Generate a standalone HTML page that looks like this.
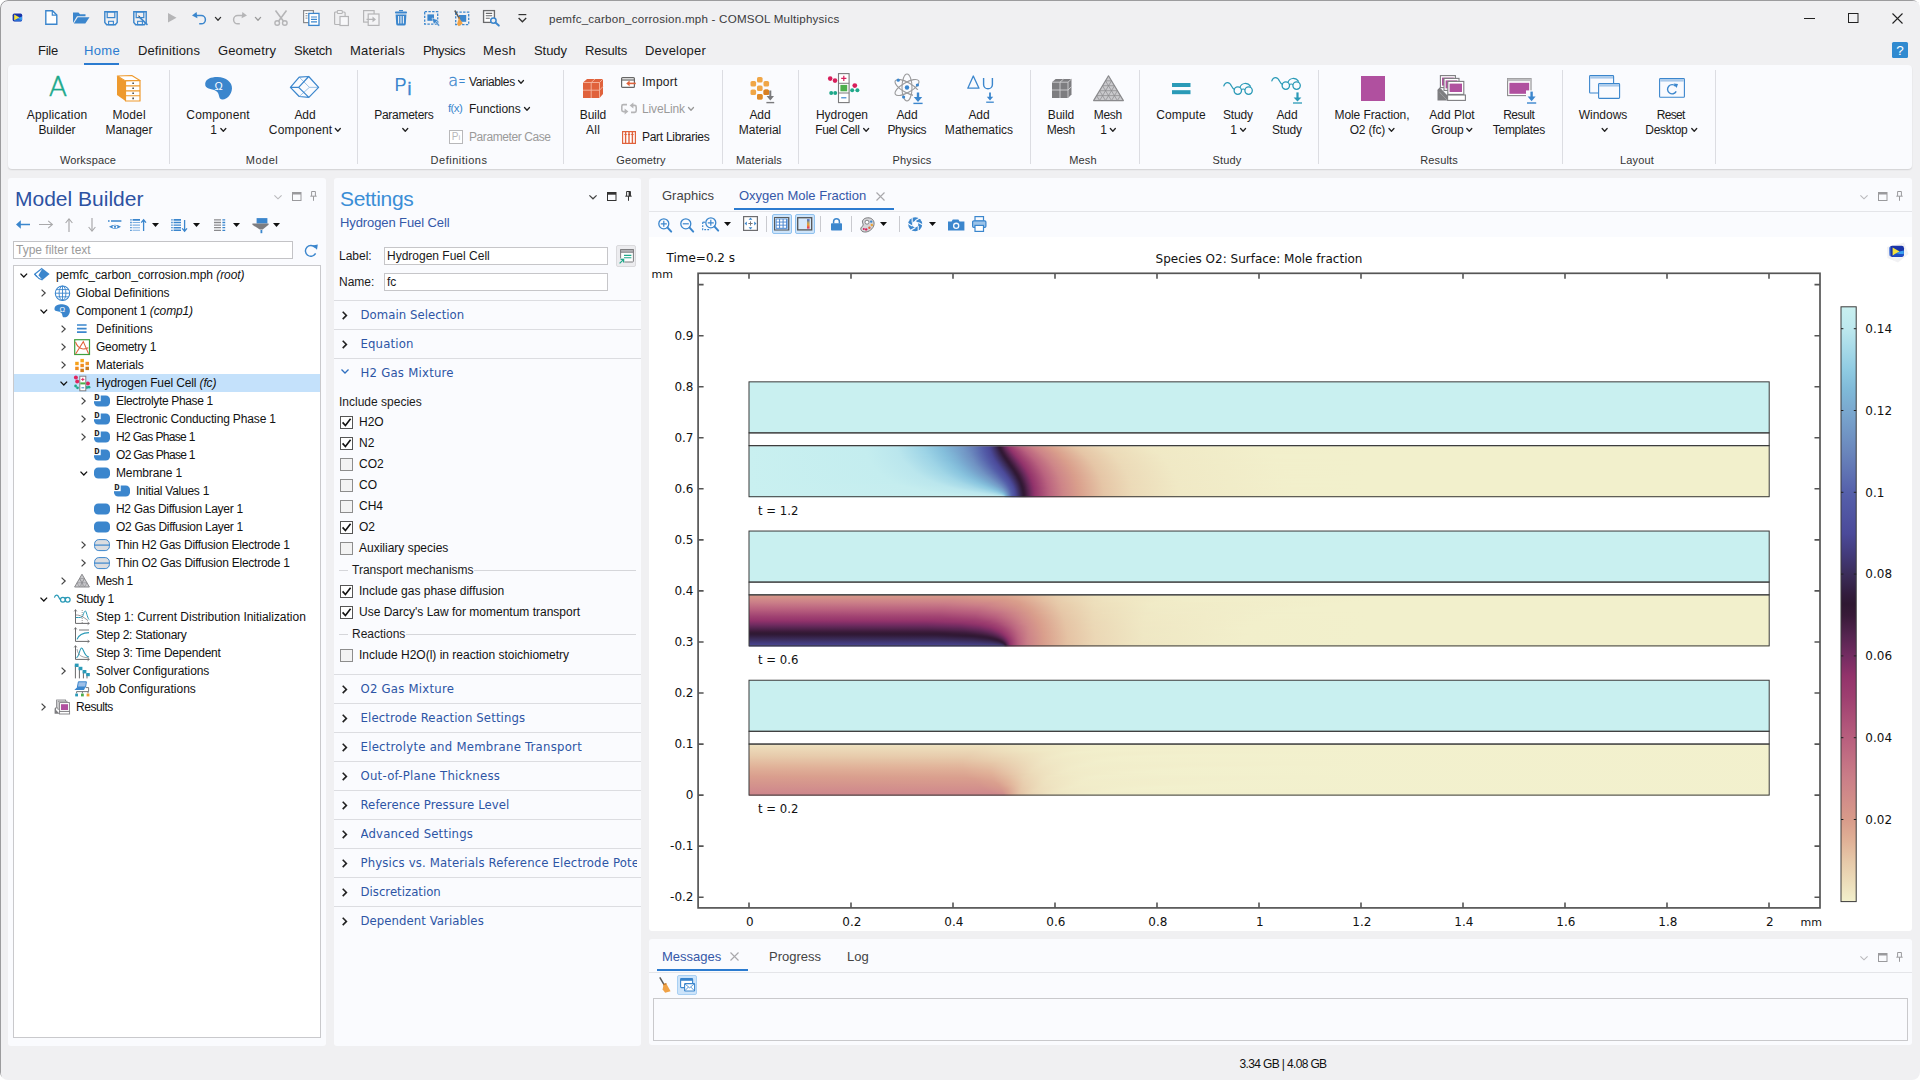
<!DOCTYPE html>
<html lang="en">
<head>
<meta charset="utf-8">
<title>pemfc_carbon_corrosion.mph - COMSOL Multiphysics</title>
<style>
*{box-sizing:border-box;margin:0;padding:0}
html,body{width:1920px;height:1080px;overflow:hidden}
body{background:#fff;font-family:"Liberation Sans",sans-serif;font-size:12px;color:#1a1a1a;position:relative}
.abs{position:absolute}
svg{display:block;overflow:visible}
#win{position:absolute;left:0;top:0;width:1920px;height:1080px;border-radius:8px;background:#f0f0f2;overflow:hidden}
#win:after{content:"";position:absolute;left:0;top:0;width:1920px;height:1080px;border:1px solid #9c9c9e;border-radius:8px;pointer-events:none}
/* title */
#title{position:absolute;left:549px;top:12px;font-size:11.6px;letter-spacing:.22px;line-height:14px;color:#3a3a3c;white-space:nowrap}
.qa{position:absolute;top:9px;width:18px;height:18px}
/* menu */
.menu{position:absolute;top:43px;font-size:13px;color:#1a1a1a;white-space:nowrap;line-height:16px}
.menu.act{color:#2b7bd0}
/* ribbon */
#ribbon{position:absolute;left:8px;top:65px;width:1904px;height:103.5px;background:#fafbfe;border-radius:4px;box-shadow:0 1px 1.5px rgba(0,0,0,.13)}
.rsep{position:absolute;top:70px;width:1px;height:94px;background:#dcdde2}
.rb{position:absolute;top:108px;text-align:center;font-size:12px;line-height:15px;white-space:nowrap;transform:translateX(-50%);color:#1a1a1a}
.ri{position:absolute;top:72px;width:32px;height:32px;transform:translateX(-50%)}
.rg{position:absolute;top:153px;font-size:11px;letter-spacing:.15px;color:#333;transform:translateX(-50%);white-space:nowrap;line-height:14px}
.rs{position:absolute;font-size:12px;white-space:nowrap;line-height:15px;color:#1a1a1a}
.rs.dis{color:#9a9a9a}
.rsi{position:absolute;width:16px;height:16px}
.chev{display:inline-block;width:6px;height:6px;vertical-align:1px;margin-left:3px}
/* panels */
.panel{position:absolute;background:#fafbfe;border-radius:3px}
.ptitle{position:absolute;font-size:21px;white-space:nowrap;line-height:26px}
.tab{position:absolute;font-size:13px;white-space:nowrap;line-height:16px;color:#333}
/* tree */
.tr{position:absolute;left:0;height:18px;line-height:18px;font-size:12px;white-space:nowrap;color:#111}
.tr i{font-style:italic}
.ti{position:absolute;width:16px;height:16px}
.tw{position:absolute;width:9px;height:9px}
/* settings */
.sec{position:absolute;left:0;width:307px;height:29px;border-top:1px solid #dcdde1;font-family:"DejaVu Sans Condensed","DejaVu Sans",sans-serif;font-size:13px;color:#2d55a5;line-height:28px;white-space:nowrap;overflow:hidden}
.sec span{position:absolute;left:26.5px;top:0;max-width:276px;overflow:hidden}
.cb{position:absolute;width:13px;height:13px;border:1px solid #8d8d8d;background:#f3f3f3}
.cb.on{background:#fff;border-color:#555}
.cl{position:absolute;font-size:12px;line-height:15px;white-space:nowrap;color:#111}
/* plot */
.pt{font-family:"DejaVu Sans",sans-serif;font-size:12px;fill:#111}
</style>
</head>
<body>
<div id="win">
<svg class="abs" style="left:11px;top:12px" width="13" height="11" viewBox="0 0 13 11"><ellipse cx="6.5" cy="5.5" rx="6.4" ry="5.4" fill="#f6f6f8"/><rect x="1.6" y="1.6" width="9.6" height="7.8" rx="1.6" fill="#1a34a8"/><path d="M3.2 2.6 L8.6 5.4 L3.2 8.6Z" fill="#f4e23c"/><path d="M8.6 5.4 L11 4.6 V8.2 L6 7Z" fill="#3aa0f0"/><path d="M3.2 8.6 L6 7 L11 8.2 L10.4 9.2 H3.6Z" fill="#2a6fd8"/></svg>
<svg class="abs" style="left:45px;top:10px" width="13" height="15" viewBox="0 0 13 15"><path d="M0.8 0.8 H7.5 L11.8 5 V14.2 H0.8Z" fill="#fff" stroke="#3b86cd" stroke-width="1.4"/><path d="M7.3 0.8 V5.2 H11.8" fill="none" stroke="#3b86cd" stroke-width="1.2"/></svg>
<svg class="abs" style="left:73px;top:12px" width="17" height="12" viewBox="0 0 17 12"><path d="M0 0.5 H5.5 L7 2.3 H12.5 V4.2 H4 L0 11Z" fill="#3b86cd"/><path d="M4.8 5.2 H16.5 L12.3 11.6 H0.8Z" fill="#3b86cd"/></svg>
<svg class="abs" style="left:104px;top:11px" width="14" height="15" viewBox="0 0 14 15"><path d="M0.8 0.8 H13.2 V11.5 L11.3 13.8 H2.7 L0.8 11.5Z" fill="none" stroke="#3b86cd" stroke-width="1.4"/><rect x="3.2" y="1" width="7.6" height="5.6" fill="none" stroke="#3b86cd" stroke-width="1.2"/><rect x="4.6" y="10.3" width="4.8" height="3.4" fill="none" stroke="#3b86cd" stroke-width="1.1"/></svg>
<svg class="abs" style="left:133px;top:11px" width="16" height="15" viewBox="0 0 16 15"><path d="M0.8 0.8 H13.2 V11.5 L11.3 13.8 H2.7 L0.8 11.5Z" fill="none" stroke="#3b86cd" stroke-width="1.4"/><rect x="3.2" y="1" width="7.6" height="5.6" fill="none" stroke="#3b86cd" stroke-width="1.2"/><rect x="4.6" y="10.3" width="4.8" height="3.4" fill="none" stroke="#3b86cd" stroke-width="1.1"/><path d="M6.5 5 L15 13.2 L14 14.4 L5.6 6.4Z" fill="#3b86cd"/><path d="M5.2 4.2 L7 5.2 L5.9 6.4Z" fill="#444"/></svg>
<svg class="abs" style="left:168px;top:13px" width="9" height="10" viewBox="0 0 9 10"><path d="M0 0 L8.5 4.7 L0 9.4Z" fill="#b5b5b7"/></svg>
<svg class="abs" style="left:192px;top:12px" width="15" height="13" viewBox="0 0 15 13"><path d="M4.6 0 L0 3.4 L5.4 6.2Z" fill="#3b86cd"/><path d="M3.5 3.6 H9.3 A4.1 4.1 0 0 1 9.3 11.8 H7.2" fill="none" stroke="#3b86cd" stroke-width="1.5"/></svg>
<svg class="abs" style="left:214.5px;top:16.8px" width="6" height="4" viewBox="0 0 6 4"><path d="M0.4 0.4 L3.0 3.2 L5.6 0.4" fill="none" stroke="#333" stroke-width="1.3" stroke-linecap="round" stroke-linejoin="round"/></svg>
<svg class="abs" style="left:232px;top:12px" width="15" height="13" viewBox="0 0 15 13"><path d="M10.4 0 L15 3.4 L9.6 6.2Z" fill="#b5b5b7"/><path d="M11.5 3.6 H5.7 A4.1 4.1 0 0 0 5.7 11.8 H7.8" fill="none" stroke="#b5b5b7" stroke-width="1.5"/></svg>
<svg class="abs" style="left:254.5px;top:16.8px" width="6" height="4" viewBox="0 0 6 4"><path d="M0.4 0.4 L3.0 3.2 L5.6 0.4" fill="none" stroke="#9a9a9a" stroke-width="1.3" stroke-linecap="round" stroke-linejoin="round"/></svg>
<svg class="abs" style="left:274px;top:10px" width="14" height="16" viewBox="0 0 14 16"><path d="M1.5 0.5 L9.3 11 M12.5 0.5 L4.7 11" stroke="#b5b5b7" stroke-width="1.6" fill="none"/><circle cx="3.2" cy="13" r="2.3" fill="none" stroke="#b5b5b7" stroke-width="1.4"/><circle cx="10.8" cy="13" r="2.3" fill="none" stroke="#b5b5b7" stroke-width="1.4"/></svg>
<svg class="abs" style="left:303px;top:10px" width="17" height="16" viewBox="0 0 17 16"><rect x="0.6" y="0.6" width="9.8" height="12" fill="#fff" stroke="#8a8a8c" stroke-width="1.2"/><path d="M2.5 3.5h2M2.5 5.8h2M2.5 8.1h2" stroke="#8a8a8c" stroke-width="1"/><rect x="5.8" y="3.4" width="10.2" height="12" fill="#fff" stroke="#3b86cd" stroke-width="1.3"/><path d="M8 7h6M8 9.4h6M8 11.8h6" stroke="#3b86cd" stroke-width="1.2"/></svg>
<svg class="abs" style="left:334px;top:10px" width="15" height="16" viewBox="0 0 15 16"><rect x="0.6" y="2" width="10.5" height="12.5" rx="1" fill="#f0f0f2" stroke="#b5b5b7" stroke-width="1.2"/><rect x="3.3" y="0.5" width="5" height="3" rx="0.8" fill="#f0f0f2" stroke="#b5b5b7" stroke-width="1.1"/><rect x="6" y="6.5" width="8.4" height="9" fill="#f8f8fa" stroke="#b5b5b7" stroke-width="1.2"/></svg>
<svg class="abs" style="left:363px;top:10px" width="17" height="16" viewBox="0 0 17 16"><rect x="0.6" y="0.6" width="10.5" height="11.5" fill="#f0f0f2" stroke="#b5b5b7" stroke-width="1.2"/><rect x="5.2" y="4" width="10.8" height="11.4" fill="#f4f4f6" stroke="#b5b5b7" stroke-width="1.2"/><path d="M3.5 8.8 H9.5 V6.6 L13 9.4 L9.5 12.2 V10 H3.5Z" fill="#b5b5b7"/></svg>
<svg class="abs" style="left:394.5px;top:10px" width="12" height="16" viewBox="0 0 12 16"><path d="M4 0.6 H8" stroke="#3b86cd" stroke-width="1.2"/><rect x="0" y="1.6" width="12" height="2" rx="0.8" fill="#3b86cd"/><path d="M0.6 4.4 H11.4 L10.8 14 Q10.7 15.6 9 15.6 H3 Q1.3 15.6 1.2 14Z" fill="#3b86cd"/><path d="M3.6 6 V13.6 M6 6 V13.6 M8.4 6 V13.6" stroke="#f0f0f2" stroke-width="1.1"/></svg>
<svg class="abs" style="left:423.5px;top:11px" width="16" height="15" viewBox="0 0 16 15"><rect x="0.7" y="0.7" width="13" height="12.4" fill="none" stroke="#3b86cd" stroke-width="1.3" stroke-dasharray="2.4 1.3"/><rect x="3.4" y="3.4" width="6.6" height="6.4" fill="#3b86cd"/><path d="M8 7 L14.5 9.3 L12.4 10.6 L15.8 14.2 L14.5 15.2 L11.3 11.6 L9.8 13.6Z" fill="#3b86cd" stroke="#f0f0f2" stroke-width="0.5"/></svg>
<svg class="abs" style="left:453.5px;top:9.5px" width="16" height="17" viewBox="0 0 16 17"><rect x="1.7" y="2.2" width="13" height="12.4" fill="none" stroke="#3b86cd" stroke-width="1.3" stroke-dasharray="2.4 1.3"/><rect x="5" y="5" width="7.2" height="6.8" fill="#3b86cd"/><path d="M0.8 0.5 L5.6 8.8" stroke="#5a5a5a" stroke-width="1.5"/><path d="M5 7.6 L8.8 13.6 L4.8 16.2 L3 14.2Z" fill="#f0a246"/><path d="M4.2 8 L6.3 7.2" stroke="#c47a2a" stroke-width="1"/></svg>
<svg class="abs" style="left:483px;top:10px" width="17" height="16" viewBox="0 0 17 16"><path d="M0.6 0.6 H11.4 V9 M8 12.4 H0.6 V0.6" fill="#fff" stroke="#6a6a6c" stroke-width="1.3"/><rect x="0.6" y="0.6" width="10.8" height="11.8" fill="#fff" stroke="#6a6a6c" stroke-width="1.3"/><path d="M2.8 3.4h6.4M2.8 5.8h6.4M2.8 8.2h4" stroke="#6a6a6c" stroke-width="1.1"/><circle cx="10.4" cy="10.6" r="2.7" fill="#f0f0f2" stroke="#3b86cd" stroke-width="1.5"/><path d="M12.4 12.6 L15.8 15.6" stroke="#3b86cd" stroke-width="2" stroke-linecap="round"/></svg>
<svg class="abs" style="left:518px;top:13.5px" width="9" height="9" viewBox="0 0 9 9"><path d="M0.5 0.6 H8.3" stroke="#333" stroke-width="1.2"/><path d="M0.6 4 L4.4 7.8 L8.2 4" fill="none" stroke="#333" stroke-width="1.3"/></svg>
<div id="title">pemfc_carbon_corrosion.mph - COMSOL Multiphysics</div>
<svg class="abs" style="left:1804px;top:18px" width="11" height="1" viewBox="0 0 11 1"><rect width="11" height="1" fill="#222"/></svg>
<svg class="abs" style="left:1847.5px;top:13px" width="10.5" height="10" viewBox="0 0 10.5 10"><rect x="0.5" y="0.5" width="9.5" height="9" fill="none" stroke="#222" stroke-width="1"/></svg>
<svg class="abs" style="left:1892px;top:13px" width="11" height="11" viewBox="0 0 11 11"><path d="M0.5 0.5 L10.5 10.5 M10.5 0.5 L0.5 10.5" stroke="#222" stroke-width="1.1"/></svg>
<div class="abs" style="left:1892px;top:42px;width:16px;height:16px;background:#308ad0;border-radius:1.5px;color:#fff;font-size:13.5px;line-height:17px;text-align:center">?</div>
<div class="menu" style="left:38px;letter-spacing:-0.238px">File</div>
<div class="menu act" style="left:84px;letter-spacing:0.328px">Home</div>
<div class="menu" style="left:138px;letter-spacing:0.118px">Definitions</div>
<div class="menu" style="left:218px;letter-spacing:0.115px">Geometry</div>
<div class="menu" style="left:294px;letter-spacing:-0.292px">Sketch</div>
<div class="menu" style="left:350px;letter-spacing:0.25px">Materials</div>
<div class="menu" style="left:423px;letter-spacing:-0.4px">Physics</div>
<div class="menu" style="left:483px;letter-spacing:0.301px">Mesh</div>
<div class="menu" style="left:534px;letter-spacing:-0.05px">Study</div>
<div class="menu" style="left:585px;letter-spacing:-0.194px">Results</div>
<div class="menu" style="left:645px;letter-spacing:0.193px">Developer</div>
<div class="abs" style="left:84px;top:63px;width:35px;height:2px;background:#2b7bd0"></div>

<div id="ribbon"></div>
<div class="rsep" style="left:169px"></div>
<div class="rsep" style="left:357px"></div>
<div class="rsep" style="left:563px"></div>
<div class="rsep" style="left:722px"></div>
<div class="rsep" style="left:798px"></div>
<div class="rsep" style="left:1030px"></div>
<div class="rsep" style="left:1139px"></div>
<div class="rsep" style="left:1318px"></div>
<div class="rsep" style="left:1562px"></div>
<div class="rsep" style="left:1715px"></div>
<div class="rg" style="left:88px">Workspace</div>
<div class="rg" style="left:262px;letter-spacing:.5px">Model</div>
<div class="rg" style="left:459px;letter-spacing:.5px">Definitions</div>
<div class="rg" style="left:641px">Geometry</div>
<div class="rg" style="left:759px">Materials</div>
<div class="rg" style="left:912px">Physics</div>
<div class="rg" style="left:1083px">Mesh</div>
<div class="rg" style="left:1227px">Study</div>
<div class="rg" style="left:1439px">Results</div>
<div class="rg" style="left:1637px">Layout</div>
<div class="rb" style="left:57px"><span style="letter-spacing:0.162px;margin-right:-0.162px">Application</span><br><span style="letter-spacing:-0.023px;margin-right:0.023px">Builder</span></div>
<div class="rb" style="left:129px"><span style="letter-spacing:0.122px;margin-right:-0.122px">Model</span><br><span style="letter-spacing:-0.082px;margin-right:0.082px">Manager</span></div>
<div class="rb" style="left:218px"><span style="letter-spacing:0.161px;margin-right:-0.161px">Component</span><br>1<svg class="chev" viewBox="0 0 6 6"><path d="M0.5 1.5 L3 4.2 L5.5 1.5" fill="none" stroke="#222" stroke-width="1.3" stroke-linecap="round" stroke-linejoin="round"/></svg></div>
<div class="rb" style="left:305px"><span style="letter-spacing:-0.086px;margin-right:0.086px">Add</span><br><span style="letter-spacing:0.161px;margin-right:-0.161px">Component</span><svg class="chev" viewBox="0 0 6 6"><path d="M0.5 1.5 L3 4.2 L5.5 1.5" fill="none" stroke="#222" stroke-width="1.3" stroke-linecap="round" stroke-linejoin="round"/></svg></div>
<div class="rb" style="left:404px"><span style="letter-spacing:-0.283px;margin-right:0.283px">Parameters</span><br><svg class="chev" viewBox="0 0 6 6"><path d="M0.5 1.5 L3 4.2 L5.5 1.5" fill="none" stroke="#222" stroke-width="1.3" stroke-linecap="round" stroke-linejoin="round"/></svg></div>
<div class="rb" style="left:593px"><span style="letter-spacing:-0.058px;margin-right:0.058px">Build</span><br><span style="letter-spacing:0.219px;margin-right:-0.219px">All</span></div>
<div class="rb" style="left:760px"><span style="letter-spacing:-0.086px;margin-right:0.086px">Add</span><br><span style="letter-spacing:-0.048px;margin-right:0.048px">Material</span></div>
<div class="rb" style="left:842px"><span style="letter-spacing:0.009px;margin-right:-0.009px">Hydrogen</span><br><span style="letter-spacing:-0.329px;margin-right:0.329px">Fuel Cell</span><svg class="chev" viewBox="0 0 6 6"><path d="M0.5 1.5 L3 4.2 L5.5 1.5" fill="none" stroke="#222" stroke-width="1.3" stroke-linecap="round" stroke-linejoin="round"/></svg></div>
<div class="rb" style="left:907px"><span style="letter-spacing:-0.086px;margin-right:0.086px">Add</span><br><span style="letter-spacing:-0.363px;margin-right:0.363px">Physics</span></div>
<div class="rb" style="left:979px"><span style="letter-spacing:-0.086px;margin-right:0.086px">Add</span><br><span style="letter-spacing:0.024px;margin-right:-0.024px">Mathematics</span></div>
<div class="rb" style="left:1061px"><span style="letter-spacing:-0.058px;margin-right:0.058px">Build</span><br><span style="letter-spacing:-0.336px;margin-right:0.336px">Mesh</span></div>
<div class="rb" style="left:1108px"><span style="letter-spacing:-0.336px;margin-right:0.336px">Mesh</span><br>1<svg class="chev" viewBox="0 0 6 6"><path d="M0.5 1.5 L3 4.2 L5.5 1.5" fill="none" stroke="#222" stroke-width="1.3" stroke-linecap="round" stroke-linejoin="round"/></svg></div>
<div class="rb" style="left:1181px"><span style="letter-spacing:0.114px;margin-right:-0.114px">Compute</span></div>
<div class="rb" style="left:1238px"><span style="letter-spacing:-0.198px;margin-right:0.198px">Study</span><br>1<svg class="chev" viewBox="0 0 6 6"><path d="M0.5 1.5 L3 4.2 L5.5 1.5" fill="none" stroke="#222" stroke-width="1.3" stroke-linecap="round" stroke-linejoin="round"/></svg></div>
<div class="rb" style="left:1287px"><span style="letter-spacing:-0.086px;margin-right:0.086px">Add</span><br><span style="letter-spacing:-0.198px;margin-right:0.198px">Study</span></div>
<div class="rb" style="left:1372px"><span style="letter-spacing:-0.074px;margin-right:0.074px">Mole Fraction,</span><br><span style="letter-spacing:-0.182px;margin-right:0.182px">O2 (fc)</span><svg class="chev" viewBox="0 0 6 6"><path d="M0.5 1.5 L3 4.2 L5.5 1.5" fill="none" stroke="#222" stroke-width="1.3" stroke-linecap="round" stroke-linejoin="round"/></svg></div>
<div class="rb" style="left:1452px"><span style="letter-spacing:0.003px;margin-right:-0.003px">Add Plot</span><br><span style="letter-spacing:-0.212px;margin-right:0.212px">Group</span><svg class="chev" viewBox="0 0 6 6"><path d="M0.5 1.5 L3 4.2 L5.5 1.5" fill="none" stroke="#222" stroke-width="1.3" stroke-linecap="round" stroke-linejoin="round"/></svg></div>
<div class="rb" style="left:1519px"><span style="letter-spacing:-0.453px;margin-right:0.453px">Result</span><br><span style="letter-spacing:-0.3px;margin-right:0.3px">Templates</span></div>
<div class="rb" style="left:1603px"><span style="letter-spacing:0.002px;margin-right:-0.002px">Windows</span><br><svg class="chev" viewBox="0 0 6 6"><path d="M0.5 1.5 L3 4.2 L5.5 1.5" fill="none" stroke="#222" stroke-width="1.3" stroke-linecap="round" stroke-linejoin="round"/></svg></div>
<div class="rb" style="left:1671px"><span style="letter-spacing:-0.692px;margin-right:0.692px">Reset</span><br><span style="letter-spacing:-0.247px;margin-right:0.247px">Desktop</span><svg class="chev" viewBox="0 0 6 6"><path d="M0.5 1.5 L3 4.2 L5.5 1.5" fill="none" stroke="#222" stroke-width="1.3" stroke-linecap="round" stroke-linejoin="round"/></svg></div>
<div class="rs" style="left:469px;top:75px"><span style="letter-spacing:-0.371px;margin-right:0.371px">Variables</span><svg class="chev" viewBox="0 0 6 6"><path d="M0.5 1.5 L3 4.2 L5.5 1.5" fill="none" stroke="#222" stroke-width="1.3" stroke-linecap="round" stroke-linejoin="round"/></svg></div>
<div class="rs" style="left:469px;top:102px"><span style="letter-spacing:-0.048px;margin-right:0.048px">Functions</span><svg class="chev" viewBox="0 0 6 6"><path d="M0.5 1.5 L3 4.2 L5.5 1.5" fill="none" stroke="#222" stroke-width="1.3" stroke-linecap="round" stroke-linejoin="round"/></svg></div>
<div class="rs dis" style="left:469px;top:130px"><span style="letter-spacing:-0.42px;margin-right:0.42px">Parameter Case</span></div>
<div class="rs" style="left:642px;top:75px"><span style="letter-spacing:0.281px;margin-right:-0.281px">Import</span></div>
<div class="rs dis" style="left:642px;top:102px"><span style="letter-spacing:-0.129px;margin-right:0.129px">LiveLink</span><svg class="chev" viewBox="0 0 6 6"><path d="M0.5 1.5 L3 4.2 L5.5 1.5" fill="none" stroke="#999" stroke-width="1.3" stroke-linecap="round" stroke-linejoin="round"/></svg></div>
<div class="rs" style="left:642px;top:130px"><span style="letter-spacing:-0.277px;margin-right:0.277px">Part Libraries</span></div>
<div class="abs" style="left:46px;top:72px;width:24px;font-family:'DejaVu Sans Light','DejaVu Sans',sans-serif;font-weight:200;font-size:27px;line-height:30px;color:#1aa88a;-webkit-text-stroke:0.45px #1aa88a;text-align:center">A</div>
<svg class="abs" style="left:116.9px;top:74.8px" width="24" height="27" viewBox="0 0 24 27"><path d="M0 1 L8.5 5.9 V26 L0 20.1Z" fill="#ee9a2e"/><path d="M0.3 1 L14.8 0.5 L23 5.5 L8.5 5.9Z" fill="#fff" stroke="#ee9a2e" stroke-width="1.1" stroke-linejoin="round"/><path d="M8.5 5.9 L23 5.5 V26 H8.5Z" fill="#fff" stroke="#ee9a2e" stroke-width="1.2" stroke-linejoin="round"/><path d="M8.5 10.9 H23 M8.5 15.9 H23 M8.5 20.8 H23" stroke="#ee9a2e" stroke-width="1.1"/><path d="M15.3 8.3h1.7M15.3 13.3h1.7M15.3 18.3h1.7M15.3 23.4h1.7" stroke="#555" stroke-width="1.6"/></svg>
<svg class="abs" style="left:204.5px;top:76.8px" width="27.2" height="22.6" viewBox="0 0 27.2 22.6"><path d="M0.2 6.6 C0.6 2 6.6 0 12.6 0.1 C21 0.3 27.4 5.4 27 11.6 C26.6 18 21.6 23 17 22.4 C12.6 21.8 15.4 16.4 11 14 C6.4 11.4 -0.4 12.4 0.2 6.6Z" fill="#3b86cd"/></svg><div class="abs" style="left:214.6px;top:79.6px;font-size:11px;line-height:12px;color:#fff">Ω</div>
<svg class="abs" style="left:290px;top:76px" width="29" height="22" viewBox="0 0 29 22"><path d="M0.4 11.35 L9.2 1.1 L18.7 0.5 L28.6 11.35 L18.85 21.4 L9.2 20.5Z M0.4 11.35 H8.65 L18.7 0.5 M8.65 11.35 L18.85 21.4" fill="none" stroke="#3b86cd" stroke-width="1.25" stroke-linejoin="round"/><path d="M28.6 11.35 H19.4 L9.2 1.1 M19.4 11.35 L9.2 20.5" fill="none" stroke="#3b86cd" stroke-width="0.9" opacity="0.55"/></svg>
<div class="abs" style="left:394.4px;top:74.2px;color:#3b86cd;font-size:18px;line-height:22px;white-space:nowrap">P<span style="font-size:17.5px;position:relative;top:3.8px;left:1px;-webkit-text-stroke:0.4px #3b86cd">i</span></div>
<div class="abs" style="left:448.2px;top:70.5px;color:#3b86cd;font-family:'DejaVu Sans Light','DejaVu Sans',sans-serif;font-weight:200;font-size:16px;line-height:20px;white-space:nowrap;-webkit-text-stroke:0.3px #3b86cd">a<span style="font-family:'Liberation Sans',sans-serif;font-weight:400;font-size:11px;position:relative;top:-0.4px;left:0.8px;-webkit-text-stroke:0">=</span></div>
<div class="abs" style="left:448px;top:101px;color:#3b86cd;font-size:11.5px;line-height:15px;letter-spacing:-0.6px">f(x)</div>
<div class="abs" style="left:449px;top:130px;width:14px;height:14px;border:1px solid #b8b8ba;color:#b8b8ba;font-size:10px;line-height:12px;text-align:center;background:#fff">P<span style="font-size:8px">i</span></div>
<svg class="abs" style="left:582.5px;top:79px" width="20" height="19" viewBox="0 0 20 19"><path d="M0 3.5 L4 0 H20 V15 L16.5 19 H0Z" fill="#e0623c"/><path d="M0 3.5 H16.5 V19 M16.5 3.5 L20 0 M8.2 3.5 V19 M0 11.2 H16.5 M8.2 3.5 L12 0 M16.5 11.2 L20 7.5" stroke="#f6b7a0" stroke-width="0.9" fill="none"/></svg>
<svg class="abs" style="left:621px;top:76.5px" width="15" height="11" viewBox="0 0 15 11"><rect x="0.6" y="0.6" width="12.8" height="9.8" rx="1" fill="#fff" stroke="#666" stroke-width="1.2"/><path d="M0.6 3 H13.4" stroke="#666" stroke-width="1.2"/><path d="M14.8 6.4 H7.5" stroke="#e0623c" stroke-width="1.6"/><path d="M8.6 3.6 L5.2 6.4 L8.6 9.2Z" fill="#e0623c"/></svg>
<svg class="abs" style="left:621px;top:103px" width="16" height="11" viewBox="0 0 16 11"><path d="M6 1.6 H2.4 Q0.8 1.6 0.8 3.2 V7 Q0.8 8.6 2.4 8.6 H4" fill="none" stroke="#b5b5b7" stroke-width="1.6"/><path d="M3.6 5.6 L7.4 8.6 L3.6 11.4Z" fill="#b5b5b7"/><path d="M10 9.4 H13.6 Q15.2 9.4 15.2 7.8 V4 Q15.2 2.4 13.6 2.4 H12" fill="none" stroke="#b5b5b7" stroke-width="1.6"/><path d="M12.4 5.4 L8.6 2.4 L12.4 -0.4Z" fill="#b5b5b7"/></svg>
<svg class="abs" style="left:621.5px;top:130.5px" width="14" height="13" viewBox="0 0 14 13"><rect x="0.6" y="0.6" width="12.8" height="11.8" fill="#fff" stroke="#e0623c" stroke-width="1.2"/><path d="M3.6 1 V12 M7 1 V12 M10.4 1 V12" stroke="#e0623c" stroke-width="1.4"/><path d="M2.4 3.5h2.4M5.8 3.5h2.4M9.2 3.5h2.4" stroke="#e0623c" stroke-width="1.2"/></svg>
<svg class="abs" style="left:749.5px;top:76.5px" width="25" height="27" viewBox="0 0 25 27"><rect x="7" y="0" width="5.6" height="5.6" rx="1.6" fill="#f0a646"/><rect x="0.5" y="4" width="5.6" height="5.6" rx="1.6" fill="#f0a646"/><rect x="13.5" y="4" width="5.6" height="5.6" rx="1.6" fill="#f0a646"/><rect x="7" y="8.5" width="5.6" height="5.6" rx="1.6" fill="#f0a646"/><rect x="0.5" y="12.5" width="5.6" height="5.6" rx="1.6" fill="#f0a646"/><rect x="13.5" y="12.5" width="5.6" height="5.6" rx="1.6" fill="#f0a646"/><rect x="7" y="17" width="5.6" height="5.6" rx="1.6" fill="#f0a646"/><rect x="7" y="17" width="5.6" height="5.6" rx="1.6" fill="#e08a28"/><rect x="13.5" y="12.5" width="5.6" height="5.6" rx="1.6" fill="#d87f22"/><path d="M20.3 13.5 V22" stroke="#7a7a7c" stroke-width="2"/><path d="M16.6 19 L20.3 23.6 L24 19Z" fill="#7a7a7c"/><path d="M16.4 25.6 H24.2" stroke="#7a7a7c" stroke-width="1.4"/></svg>
<svg class="abs" style="left:826.5px;top:72.8px" width="33" height="30.2" viewBox="0 0 33 30.2"><rect x="11.5" y="0.6" width="10.6" height="29" fill="#fff" stroke="#7a7a7c" stroke-width="1.1"/><path d="M11.5 10.3 H22.1 M11.5 20 H22.1" stroke="#7a7a7c" stroke-width="1"/><path d="M14.2 5.4 H19.4 M16.8 2.8 V8" stroke="#d81e5b" stroke-width="1.2"/><rect x="13.4" y="11.9" width="6.8" height="6.4" fill="#4cae4c"/><path d="M14.2 24.8 H19.4" stroke="#3b86cd" stroke-width="1.2"/><circle cx="3.2" cy="5.6" r="2.3" fill="#d81e5b"/><circle cx="8" cy="7.6" r="2.3" fill="#d81e5b"/><circle cx="4.2" cy="20" r="2" fill="#1fa88a"/><circle cx="8.2" cy="20" r="2" fill="#1fa88a"/><circle cx="27.8" cy="12.6" r="2.4" fill="#d81e5b"/><circle cx="25.2" cy="17.2" r="2" fill="#1fa88a"/><circle cx="30.4" cy="17.2" r="2" fill="#1fa88a"/></svg>
<svg class="abs" style="left:894px;top:72.8px" width="29" height="31" viewBox="0 0 29 31"><g fill="none" stroke="#9a9a9c" stroke-width="1.1"><ellipse cx="13" cy="14.5" rx="5" ry="13.5"/><ellipse cx="13" cy="14.5" rx="5" ry="13.5" transform="rotate(60 13 14.5)"/><ellipse cx="13" cy="14.5" rx="5" ry="13.5" transform="rotate(-60 13 14.5)"/></g><circle cx="13" cy="14.5" r="2.2" fill="#3b86cd"/><circle cx="4.2" cy="7.2" r="1.6" fill="#3b86cd"/><circle cx="23.4" cy="12" r="1.6" fill="#3b86cd"/><circle cx="9.6" cy="24" r="1.6" fill="#3b86cd"/><rect x="19" y="17" width="10" height="14" fill="#f9fafe"/><path d="M24 19.5 V26.5" stroke="#3b86cd" stroke-width="2.4"/><path d="M19.8 24 L24 29 L28.2 24Z" fill="#3b86cd"/><path d="M19.4 30.4 H28.6" stroke="#3b86cd" stroke-width="1.4"/></svg>
<svg class="abs" style="left:967px;top:75px" width="28" height="28" viewBox="0 0 28 28"><path d="M6.3 1 L12 13.2 H0.8Z" fill="none" stroke="#3b86cd" stroke-width="1.3" stroke-linejoin="round"/><path d="M16.6 3 V9.4 A4.4 4.4 0 0 0 25.4 9.4 V3" fill="none" stroke="#3b86cd" stroke-width="1.4"/><path d="M23 17.5 V24" stroke="#3b86cd" stroke-width="1.8"/><path d="M19.8 21.8 L23 25.6 L26.2 21.8Z" fill="#3b86cd"/><path d="M19.2 27.2 H26.8" stroke="#3b86cd" stroke-width="1.3"/></svg>
<svg class="abs" style="left:1052px;top:79.3px" width="19.5" height="19" viewBox="0 0 19.5 19"><path d="M0 3.2 L3.6 0 H19.5 V15.4 L16 19 H0Z" fill="#7d7d80"/><path d="M0 3.2 H16 V19 M16 3.2 L19.5 0 M8 3.2 V19 M0 11 H16 M8 3.2 L11.6 0 M16 11 L19.5 7.6" stroke="#d0d0d3" stroke-width="0.9" fill="none"/></svg>
<svg class="abs" style="left:1092.5px;top:74.5px" width="31" height="26.5" viewBox="0 0 31 26.5"><path d="M15.5 0.8 L30.4 25.6 H0.6Z" fill="#c9c9cc" stroke="#8a8a8d" stroke-width="1.2" stroke-linejoin="round"/><g stroke="#8a8a8d" stroke-width="0.7" fill="none"><path d="M12.5 5.8 L18.5 5.8 M9.5 10.7 L21.5 10.7 M6.6 15.7 L24.4 15.7 M3.6 20.6 L27.4 20.6 M6.6 25.6 L3.6 20.6 M24.4 25.6 L27.4 20.6 M12.5 25.6 L6.6 15.7 M18.5 25.6 L24.4 15.7 M18.5 25.6 L9.5 10.7 M12.5 25.6 L21.5 10.7 M24.4 25.6 L12.5 5.8 M6.6 25.6 L18.5 5.8 "/></g></svg>
<svg class="abs" style="left:1172px;top:83px" width="18.5" height="11.2" viewBox="0 0 18.5 11.2"><rect x="0" y="0" width="18.5" height="4" fill="#2a9ab7"/><rect x="0" y="7.2" width="18.5" height="4" fill="#2a9ab7"/></svg>
<svg class="abs" style="left:1223px;top:80.5px" width="30" height="14" viewBox="0 0 30 14"><path d="M0.6 5.4 C2.4 0.4 6.4 0.4 8.6 5.2 C9.6 7.4 10.6 8.2 12 8.6" fill="none" stroke="#2a9ab7" stroke-width="1.2"/><circle cx="14.8" cy="9.6" r="3.7" fill="none" stroke="#2a9ab7" stroke-width="1.3"/><circle cx="25.6" cy="9.6" r="3.7" fill="none" stroke="#2a9ab7" stroke-width="1.3"/><path d="M18.4 8.6 Q20.2 7.4 22 8.6" fill="none" stroke="#2a9ab7" stroke-width="1.1"/><path d="M17 6.4 C18.5 1.5 24.5 1 27.8 5.6" fill="none" stroke="#2a9ab7" stroke-width="1.1"/></svg>
<svg class="abs" style="left:1270.5px;top:75.5px" width="30" height="14" viewBox="0 0 30 14"><path d="M0.6 5.4 C2.4 0.4 6.4 0.4 8.6 5.2 C9.6 7.4 10.6 8.2 12 8.6" fill="none" stroke="#2a9ab7" stroke-width="1.2"/><circle cx="14.8" cy="9.6" r="3.7" fill="none" stroke="#2a9ab7" stroke-width="1.3"/><circle cx="25.6" cy="9.6" r="3.7" fill="none" stroke="#2a9ab7" stroke-width="1.3"/><path d="M18.4 8.6 Q20.2 7.4 22 8.6" fill="none" stroke="#2a9ab7" stroke-width="1.1"/><path d="M17 6.4 C18.5 1.5 24.5 1 27.8 5.6" fill="none" stroke="#2a9ab7" stroke-width="1.1"/></svg>
<svg class="abs" style="left:1292px;top:92px" width="11" height="12" viewBox="0 0 11 12"><path d="M5.5 0.4 V7" stroke="#2a9ab7" stroke-width="2.2"/><path d="M1.6 5.4 L5.5 9.6 L9.4 5.4Z" fill="#2a9ab7"/><path d="M1 11 H10" stroke="#2a9ab7" stroke-width="1.3"/></svg>
<div class="abs" style="left:1361px;top:76px;width:24px;height:25px;background:#b0509f"></div>
<svg class="abs" style="left:1436.5px;top:74.8px" width="29.5" height="26" viewBox="0 0 29.5 26"><path d="M0.5 15 L2.8 12.6 V17.5 L10.5 25.4 H0.5Z" fill="#7d7d80"/><path d="M0.5 15 L10.5 25.4 V20.4 L2.8 12.6Z" fill="#7d7d80"/><rect x="3.4" y="0.6" width="15" height="12" fill="#fff" stroke="#7d7d80" stroke-width="1.1"/><rect x="5" y="2.6" width="11.8" height="8" fill="#b0509f"/><rect x="7" y="3.4" width="15" height="12" fill="#fff" stroke="#7d7d80" stroke-width="1.1"/><rect x="8.6" y="5.4" width="11.8" height="8" fill="#b0509f"/><rect x="10.8" y="6.4" width="16" height="13" fill="#fff" stroke="#7d7d80" stroke-width="1.1"/><rect x="12.6" y="8.6" width="12.4" height="8.4" fill="#b0509f"/><rect x="10.6" y="20" width="17.8" height="5.4" fill="#fff" stroke="#7d7d80" stroke-width="1.1"/></svg>
<svg class="abs" style="left:1507px;top:78px" width="30" height="26" viewBox="0 0 30 26"><rect x="0.6" y="0.6" width="23.4" height="17" fill="#fff" stroke="#8a8a8d" stroke-width="1.1"/><rect x="0.6" y="0.6" width="23.4" height="2.6" fill="#bdbdc0"/><rect x="2.4" y="4.8" width="19.8" height="11" fill="#b0509f"/><rect x="19" y="12.4" width="10" height="14" fill="#f9fafe"/><path d="M24.6 13.6 V20" stroke="#3b86cd" stroke-width="2.4"/><path d="M20.6 18.6 L24.6 23.2 L28.6 18.6Z" fill="#3b86cd"/><path d="M20 25 H29.2" stroke="#3b86cd" stroke-width="1.4"/></svg>
<svg class="abs" style="left:1588.8px;top:74.8px" width="31.5" height="24.2" viewBox="0 0 31.5 24.2"><rect x="0.6" y="0.6" width="24" height="17.4" rx="0.8" fill="#f9fafe" stroke="#3b86cd" stroke-width="1.1"/><rect x="1.2" y="1.2" width="22.8" height="2.4" fill="#a9c9ea"/><rect x="9.6" y="8.6" width="21" height="14.8" rx="0.8" fill="#f9fafe" stroke="#3b86cd" stroke-width="1.1"/><rect x="10.2" y="9.2" width="19.8" height="2.4" fill="#a9c9ea"/></svg>
<svg class="abs" style="left:1659px;top:78px" width="26" height="20" viewBox="0 0 26 20"><rect x="0.6" y="0.6" width="24.8" height="18.6" rx="0.8" fill="#f9fafe" stroke="#3b86cd" stroke-width="1.1"/><rect x="1.2" y="1.2" width="23.6" height="2.4" fill="#a9c9ea"/><path d="M17.2 13.4 A4.6 4.6 0 1 1 16.6 8.2" fill="none" stroke="#3b86cd" stroke-width="1.4"/><path d="M14.6 5.6 L19 6 L17.6 10Z" fill="#3b86cd"/></svg>
<div class="panel" style="left:8px;top:178px;width:318px;height:868px"></div>
<div class="ptitle" style="left:15px;top:186px;color:#2d52a2">Model Builder</div>
<svg class="abs" style="left:273.8px;top:195px" width="8" height="4.5" viewBox="0 0 8 4.5"><path d="M0.4 0.4 L4 3.8 L7.6 0.4" fill="none" stroke="#b8b8bb" stroke-width="1.1"/></svg><svg class="abs" style="left:291.8px;top:192px" width="9.5" height="9" viewBox="0 0 9.5 9"><rect x="0.5" y="0.5" width="8.5" height="8" fill="none" stroke="#9a9a9d" stroke-width="1"/><rect x="0.5" y="0.5" width="8.5" height="2" fill="#9a9a9d"/></svg><svg class="abs" style="left:310.3px;top:191px" width="7" height="10" viewBox="0 0 7 10"><path d="M1.6 0.5 H5.4 V5 M1.6 0.5 V5 M0.3 5.2 H6.7 M3.5 5.2 V9.8" fill="none" stroke="#9a9a9d" stroke-width="1"/></svg>
<svg class="abs" style="left:16px;top:220px" width="14" height="9" viewBox="0 0 14 9"><path d="M4.8 0.3 L0 4.5 L4.8 8.7Z" fill="#3b86cd"/><path d="M3 4.5 H14" stroke="#3b86cd" stroke-width="1.4"/></svg>
<svg class="abs" style="left:39px;top:220px" width="14" height="9" viewBox="0 0 14 9"><path d="M9.2 0.8 L13.4 4.5 L9.2 8.2" fill="none" stroke="#a9a9ab" stroke-width="1.1"/><path d="M0 4.5 H13" stroke="#a9a9ab" stroke-width="1.2"/></svg>
<svg class="abs" style="left:64.5px;top:218px" width="8" height="14" viewBox="0 0 8 14"><path d="M0.6 5 L4 0.8 L7.4 5" fill="none" stroke="#a9a9ab" stroke-width="1.1"/><path d="M4 1 V14" stroke="#a9a9ab" stroke-width="1.2"/></svg>
<svg class="abs" style="left:87.5px;top:218px" width="8" height="14" viewBox="0 0 8 14"><path d="M0.6 9 L4 13.2 L7.4 9" fill="none" stroke="#a9a9ab" stroke-width="1.1"/><path d="M4 0 V13" stroke="#a9a9ab" stroke-width="1.2"/></svg>
<svg class="abs" style="left:108px;top:220px" width="14" height="10" viewBox="0 0 14 10"><path d="M0 1 H1.6 M3 1 H13.4" stroke="#3b86cd" stroke-width="1.6"/><path d="M1 6.8 Q7 2.6 13 6.8 Q7 11 1 6.8Z" fill="#3b86cd"/><ellipse cx="7" cy="6.8" rx="2.6" ry="1.5" fill="#fafbfe"/><circle cx="7" cy="6.8" r="1.1" fill="#3b86cd"/></svg>
<svg class="abs" style="left:130px;top:219px" width="17" height="12.5" viewBox="0 0 17 12.5"><path d="M0.2 0.9 h1.5" stroke="#3b86cd" stroke-width="1.3"/><path d="M0.2 3.5 h1.5" stroke="#3b86cd" stroke-width="1.3"/><path d="M0.2 6.1 h1.5" stroke="#3b86cd" stroke-width="1.3"/><path d="M0.2 8.7 h1.5" stroke="#3b86cd" stroke-width="1.3"/><path d="M0.2 11.3 h1.5" stroke="#3b86cd" stroke-width="1.3"/><path d="M2.6 0.9 H10" stroke="#3b86cd" stroke-width="1.7"/><path d="M2.6 3.5 H10" stroke="#7fb1e2" stroke-width="1.1"/><path d="M2.6 6.1 H10" stroke="#7fb1e2" stroke-width="1.1"/><path d="M2.6 8.7 H10" stroke="#7fb1e2" stroke-width="1.1"/><path d="M2.6 11.3 H10" stroke="#7fb1e2" stroke-width="1.1"/><path d="M11.2 3.6 L13.6 0.8 L16 3.6 M13.6 1.2 V12" fill="none" stroke="#3b86cd" stroke-width="1.3"/></svg><svg class="abs" style="left:152px;top:223px" width="7" height="4" viewBox="0 0 7 4"><path d="M0 0 H7 L3.5 4Z" fill="#111"/></svg>
<svg class="abs" style="left:171px;top:219px" width="17" height="12.5" viewBox="0 0 17 12.5"><path d="M0.2 0.9 h1.5" stroke="#3b86cd" stroke-width="1.3"/><path d="M0.2 3.5 h1.5" stroke="#3b86cd" stroke-width="1.3"/><path d="M0.2 6.1 h1.5" stroke="#3b86cd" stroke-width="1.3"/><path d="M0.2 8.7 h1.5" stroke="#3b86cd" stroke-width="1.3"/><path d="M0.2 11.3 h1.5" stroke="#3b86cd" stroke-width="1.3"/><path d="M2.6 0.9 H10" stroke="#3b86cd" stroke-width="1.7"/><path d="M2.6 3.5 H10" stroke="#3b86cd" stroke-width="1.4"/><path d="M2.6 6.1 H10" stroke="#3b86cd" stroke-width="1.4"/><path d="M2.6 8.7 H10" stroke="#3b86cd" stroke-width="1.4"/><path d="M2.6 11.3 H10" stroke="#3b86cd" stroke-width="1.4"/><path d="M11.2 9.4 L13.6 12.2 L16 9.4 M13.6 1 V11.8" fill="none" stroke="#3b86cd" stroke-width="1.3"/></svg><svg class="abs" style="left:193px;top:223px" width="7" height="4" viewBox="0 0 7 4"><path d="M0 0 H7 L3.5 4Z" fill="#111"/></svg>
<svg class="abs" style="left:214px;top:219px" width="11.5" height="12.5" viewBox="0 0 11.5 12.5"><path d="M0 0.9 H7" stroke="#8a8a8d" stroke-width="1.3"/><path d="M0 3.5 H7" stroke="#8a8a8d" stroke-width="1.3"/><path d="M0 6.1 H7" stroke="#8a8a8d" stroke-width="1.3"/><path d="M0 8.7 H7" stroke="#8a8a8d" stroke-width="1.3"/><path d="M0 11.3 H7" stroke="#8a8a8d" stroke-width="1.3"/><path d="M8.4 0.9 H11.2" stroke="#3b86cd" stroke-width="1.3"/><path d="M8.4 3.5 H11.2" stroke="#3b86cd" stroke-width="1.3"/><path d="M8.4 6.1 H11.2" stroke="#3b86cd" stroke-width="1.3"/><path d="M8.4 8.7 H11.2" stroke="#3b86cd" stroke-width="1.3"/><path d="M8.4 11.3 H11.2" stroke="#3b86cd" stroke-width="1.3"/></svg><svg class="abs" style="left:233px;top:223px" width="7" height="4" viewBox="0 0 7 4"><path d="M0 0 H7 L3.5 4Z" fill="#111"/></svg>
<svg class="abs" style="left:251.5px;top:218px" width="17" height="15.5" viewBox="0 0 17 15.5"><rect x="4.6" y="0.1" width="10.8" height="5.4" fill="#3b86cd"/><path d="M0.4 5.4 H16.6 V6.8 L10.6 11.6 H7.8 L0.4 6.8Z" fill="#7d7d80"/><path d="M9.4 12 V15.2" stroke="#3b86cd" stroke-width="1.8"/></svg><svg class="abs" style="left:273px;top:223px" width="7" height="4" viewBox="0 0 7 4"><path d="M0 0 H7 L3.5 4Z" fill="#111"/></svg>
<div class="abs" style="left:13px;top:241px;width:280px;height:18px;border:1px solid #c3c3c6;background:#fff;color:#9b9b9b;font-size:12px;line-height:17px;padding-left:2px">Type filter text</div>
<svg class="abs" style="left:303.5px;top:243.5px" width="14" height="13" viewBox="0 0 14 13"><path d="M11.6 9.4 A5.4 5.4 0 1 1 11 3.4" fill="none" stroke="#3b86cd" stroke-width="1.4"/><path d="M8.4 1.6 L13.8 0.4 L13 5.8Z" fill="#3b86cd"/></svg>
<div class="abs" style="left:13px;top:265px;width:308px;height:773px;border:1px solid #c9c9cc;background:#fff"></div>
<div class="abs" style="left:14px;top:374px;width:306px;height:18px;background:#c4e1fb"></div>
<svg class="abs" style="left:19.7px;top:272.5px" width="7.6" height="5" viewBox="0 0 7.6 5"><path d="M0.5 0.6 L3.8 4 L7.1 0.6" fill="none" stroke="#111" stroke-width="1.3"/></svg>
<svg class="abs" style="left:34px;top:266.5px" width="16" height="16" viewBox="0 0 16 16"><path d="M8.5 1.6 L15.6 7 L8.5 13 L4.4 8.2Z" fill="#3b86cd"/><path d="M8.2 1.2 L0.6 7.2 L3 9.8" fill="none" stroke="#3b86cd" stroke-width="1.2" stroke-linejoin="round"/><path d="M0.6 7.2 L5 11.6 L8.5 13" fill="none" stroke="#3b86cd" stroke-width="1.2"/></svg>
<div class="tr" style="left:56px;top:266px;letter-spacing:-0.069px">pemfc_carbon_corrosion.mph <i>(root)</i></div>
<svg class="abs" style="left:41.0px;top:288.5px" width="5" height="8" viewBox="0 0 5 8"><path d="M0.6 0.6 L4.2 4 L0.6 7.4" fill="none" stroke="#444" stroke-width="1.2"/></svg>
<svg class="abs" style="left:54px;top:284.5px" width="16" height="16" viewBox="0 0 16 16"><circle cx="8.5" cy="8.2" r="7.2" fill="#fff" stroke="#3b86cd" stroke-width="1.1"/><ellipse cx="8.5" cy="8.2" rx="3.4" ry="7.2" fill="none" stroke="#3b86cd" stroke-width="0.9"/><path d="M8.5 1 V15.4 M1.3 8.2 H15.7 M2.4 4.6 H14.6 M2.4 11.8 H14.6" stroke="#3b86cd" stroke-width="0.9"/></svg>
<div class="tr" style="left:76px;top:284px;letter-spacing:-0.026px">Global Definitions</div>
<svg class="abs" style="left:39.7px;top:308.5px" width="7.6" height="5" viewBox="0 0 7.6 5"><path d="M0.5 0.6 L3.8 4 L7.1 0.6" fill="none" stroke="#111" stroke-width="1.3"/></svg>
<svg class="abs" style="left:54px;top:302.5px" width="16" height="16" viewBox="0 0 16 16"><g transform="translate(0.3,1.2)"><path d="M0.2 4.4 C0.5 1 4.4 0 8 0.1 C12.8 0.3 15.9 3.2 15.6 7 C15.3 10.8 12.4 13.5 9.8 13.1 C7.2 12.7 8.9 9.6 6.3 8.2 C3.6 6.8 -0.3 7.6 0.2 4.4Z" fill="#3b86cd"/><text x="5.3" y="7.4" font-family="Liberation Sans, sans-serif" font-size="7.5" fill="#fff">Ω</text></g></svg>
<div class="tr" style="left:76px;top:302px;letter-spacing:-0.127px">Component 1 <i>(comp1)</i></div>
<svg class="abs" style="left:61.0px;top:324.5px" width="5" height="8" viewBox="0 0 5 8"><path d="M0.6 0.6 L4.2 4 L0.6 7.4" fill="none" stroke="#444" stroke-width="1.2"/></svg>
<svg class="abs" style="left:74px;top:320.5px" width="16" height="16" viewBox="0 0 16 16"><path d="M3 4 H12.6 M3 7.6 H12.6 M3 11.2 H12.6" stroke="#3b86cd" stroke-width="1.7"/></svg>
<div class="tr" style="left:96px;top:320px;letter-spacing:0.07px">Definitions</div>
<svg class="abs" style="left:61.0px;top:342.5px" width="5" height="8" viewBox="0 0 5 8"><path d="M0.6 0.6 L4.2 4 L0.6 7.4" fill="none" stroke="#444" stroke-width="1.2"/></svg>
<svg class="abs" style="left:74px;top:338.5px" width="16" height="16" viewBox="0 0 16 16"><rect x="0.7" y="0.7" width="14.8" height="14.8" fill="#fff" stroke="#3f9f3f" stroke-width="1.2"/><path d="M1.6 15 L9.3 2.6 L14.6 14.8 M1.5 3 C4 9.5 8.4 11.4 14.3 8.8" fill="none" stroke="#e0623c" stroke-width="1.05"/></svg>
<div class="tr" style="left:96px;top:338px;letter-spacing:-0.26px">Geometry 1</div>
<svg class="abs" style="left:61.0px;top:360.5px" width="5" height="8" viewBox="0 0 5 8"><path d="M0.6 0.6 L4.2 4 L0.6 7.4" fill="none" stroke="#444" stroke-width="1.2"/></svg>
<svg class="abs" style="left:74px;top:356.5px" width="16" height="16" viewBox="0 0 16 16"><rect x="6.4" y="1.9" width="3.5" height="3.4" fill="#f7a81b"/><rect x="6.4" y="6.8" width="3.5" height="3.4" fill="#f08c1e"/><rect x="6.4" y="11.7" width="3.5" height="3.4" fill="#d07a1a"/><rect x="1.2" y="4.8" width="3.5" height="3.4" fill="#f7a11a"/><rect x="1.2" y="9.7" width="3.5" height="3.4" fill="#f08c1e"/><rect x="11.5" y="4.8" width="3.5" height="3.4" fill="#f0962a"/><rect x="11.5" y="9.7" width="3.5" height="3.4" fill="#c87a1e"/></svg>
<div class="tr" style="left:96px;top:356px;letter-spacing:-0.11px">Materials</div>
<svg class="abs" style="left:59.7px;top:380.5px" width="7.6" height="5" viewBox="0 0 7.6 5"><path d="M0.5 0.6 L3.8 4 L7.1 0.6" fill="none" stroke="#111" stroke-width="1.3"/></svg>
<svg class="abs" style="left:74px;top:374.5px" width="16" height="16" viewBox="0 0 16 16"><circle cx="1.9" cy="2.4" r="2" fill="#e0245e"/><circle cx="3.2" cy="6.4" r="2" fill="#e0245e"/><circle cx="13.9" cy="8.4" r="2" fill="#e0245e"/><circle cx="1.6" cy="11" r="1.4" fill="#1fa88a"/><circle cx="3.5" cy="12.8" r="1.4" fill="#1fa88a"/><circle cx="12.8" cy="12.5" r="1.4" fill="#1fa88a"/><circle cx="15" cy="12.2" r="1.4" fill="#1fa88a"/><rect x="5.8" y="1.2" width="6" height="14.6" fill="#fff" stroke="#808083" stroke-width="1"/><path d="M7.2 4.4 H10.4 M8.8 2.8 V6" stroke="#e0245e" stroke-width="1"/><rect x="6.3" y="7.4" width="5" height="2" fill="#4cae4c"/><path d="M7.4 12.8 H10.2" stroke="#3b86cd" stroke-width="1"/></svg>
<div class="tr" style="left:96px;top:374px;letter-spacing:-0.134px">Hydrogen Fuel Cell <i>(fc)</i></div>
<svg class="abs" style="left:81.0px;top:396.5px" width="5" height="8" viewBox="0 0 5 8"><path d="M0.6 0.6 L4.2 4 L0.6 7.4" fill="none" stroke="#444" stroke-width="1.2"/></svg>
<svg class="abs" style="left:94px;top:392.5px" width="16" height="16" viewBox="0 0 16 16"><rect x="0" y="2.6" width="16" height="11" rx="4.2" fill="#3b86cd"/><rect x="-0.5" y="0" width="7.2" height="8.2" fill="#fff"/><text x="0.3" y="6.9" font-family="Liberation Mono, monospace" font-size="9" font-weight="bold" fill="#222">D</text></svg>
<div class="tr" style="left:116px;top:392px;letter-spacing:-0.342px">Electrolyte Phase 1</div>
<svg class="abs" style="left:81.0px;top:414.5px" width="5" height="8" viewBox="0 0 5 8"><path d="M0.6 0.6 L4.2 4 L0.6 7.4" fill="none" stroke="#444" stroke-width="1.2"/></svg>
<svg class="abs" style="left:94px;top:410.5px" width="16" height="16" viewBox="0 0 16 16"><rect x="0" y="2.6" width="16" height="11" rx="4.2" fill="#3b86cd"/><rect x="-0.5" y="0" width="7.2" height="8.2" fill="#fff"/><text x="0.3" y="6.9" font-family="Liberation Mono, monospace" font-size="9" font-weight="bold" fill="#222">D</text></svg>
<div class="tr" style="left:116px;top:410px;letter-spacing:-0.145px">Electronic Conducting Phase 1</div>
<svg class="abs" style="left:81.0px;top:432.5px" width="5" height="8" viewBox="0 0 5 8"><path d="M0.6 0.6 L4.2 4 L0.6 7.4" fill="none" stroke="#444" stroke-width="1.2"/></svg>
<svg class="abs" style="left:94px;top:428.5px" width="16" height="16" viewBox="0 0 16 16"><rect x="0" y="2.6" width="16" height="11" rx="4.2" fill="#3b86cd"/><rect x="-0.5" y="0" width="7.2" height="8.2" fill="#fff"/><text x="0.3" y="6.9" font-family="Liberation Mono, monospace" font-size="9" font-weight="bold" fill="#222">D</text></svg>
<div class="tr" style="left:116px;top:428px;letter-spacing:-0.662px">H2 Gas Phase 1</div>
<svg class="abs" style="left:94px;top:446.5px" width="16" height="16" viewBox="0 0 16 16"><rect x="0" y="2.6" width="16" height="11" rx="4.2" fill="#3b86cd"/><rect x="-0.5" y="0" width="7.2" height="8.2" fill="#fff"/><text x="0.3" y="6.9" font-family="Liberation Mono, monospace" font-size="9" font-weight="bold" fill="#222">D</text></svg>
<div class="tr" style="left:116px;top:446px;letter-spacing:-0.708px">O2 Gas Phase 1</div>
<svg class="abs" style="left:79.7px;top:470.5px" width="7.6" height="5" viewBox="0 0 7.6 5"><path d="M0.5 0.6 L3.8 4 L7.1 0.6" fill="none" stroke="#111" stroke-width="1.3"/></svg>
<svg class="abs" style="left:94px;top:464.5px" width="16" height="16" viewBox="0 0 16 16"><rect x="0" y="2.6" width="16" height="11" rx="4.2" fill="#3b86cd"/></svg>
<div class="tr" style="left:116px;top:464px;letter-spacing:-0.127px">Membrane 1</div>
<svg class="abs" style="left:114px;top:482.5px" width="16" height="16" viewBox="0 0 16 16"><rect x="0" y="2.6" width="16" height="11" rx="4.2" fill="#3b86cd"/><rect x="-0.5" y="0" width="7.2" height="8.2" fill="#fff"/><text x="0.3" y="6.9" font-family="Liberation Mono, monospace" font-size="9" font-weight="bold" fill="#222">D</text></svg>
<div class="tr" style="left:136px;top:482px;letter-spacing:-0.254px">Initial Values 1</div>
<svg class="abs" style="left:94px;top:500.5px" width="16" height="16" viewBox="0 0 16 16"><rect x="0" y="2.6" width="16" height="11" rx="4.2" fill="#3b86cd"/></svg>
<div class="tr" style="left:116px;top:500px;letter-spacing:-0.294px">H2 Gas Diffusion Layer 1</div>
<svg class="abs" style="left:94px;top:518.5px" width="16" height="16" viewBox="0 0 16 16"><rect x="0" y="2.6" width="16" height="11" rx="4.2" fill="#3b86cd"/></svg>
<div class="tr" style="left:116px;top:518px;letter-spacing:-0.321px">O2 Gas Diffusion Layer 1</div>
<svg class="abs" style="left:81.0px;top:540.5px" width="5" height="8" viewBox="0 0 5 8"><path d="M0.6 0.6 L4.2 4 L0.6 7.4" fill="none" stroke="#444" stroke-width="1.2"/></svg>
<svg class="abs" style="left:94px;top:536.5px" width="16" height="16" viewBox="0 0 16 16"><rect x="0.6" y="2.6" width="14.8" height="11" rx="4.2" fill="#dcdde0" stroke="#3b86cd" stroke-width="1"/><path d="M0.8 8.1 H15.2" stroke="#3b86cd" stroke-width="1.2"/></svg>
<div class="tr" style="left:116px;top:536px;letter-spacing:-0.227px">Thin H2 Gas Diffusion Electrode 1</div>
<svg class="abs" style="left:81.0px;top:558.5px" width="5" height="8" viewBox="0 0 5 8"><path d="M0.6 0.6 L4.2 4 L0.6 7.4" fill="none" stroke="#444" stroke-width="1.2"/></svg>
<svg class="abs" style="left:94px;top:554.5px" width="16" height="16" viewBox="0 0 16 16"><rect x="0.6" y="2.6" width="14.8" height="11" rx="4.2" fill="#dcdde0" stroke="#3b86cd" stroke-width="1"/><path d="M0.8 8.1 H15.2" stroke="#3b86cd" stroke-width="1.2"/></svg>
<div class="tr" style="left:116px;top:554px;letter-spacing:-0.248px">Thin O2 Gas Diffusion Electrode 1</div>
<svg class="abs" style="left:61.0px;top:576.5px" width="5" height="8" viewBox="0 0 5 8"><path d="M0.6 0.6 L4.2 4 L0.6 7.4" fill="none" stroke="#444" stroke-width="1.2"/></svg>
<svg class="abs" style="left:74px;top:572.5px" width="16" height="16" viewBox="0 0 16 16"><path d="M8 1.2 L15.4 14 H0.6Z" fill="#c9c9cc" stroke="#8a8a8d" stroke-width="1" stroke-linejoin="round"/><path d="M5.5 5.5 H10.5 M3 9.8 H13 M5.5 5.5 L10.5 14 M10.5 5.5 L5.5 14 M3 9.8 L5.5 14 M13 9.8 L10.5 14 M8 9.8 L5.5 5.5 M8 9.8 L10.5 5.5 M8 9.8 V14" stroke="#8a8a8d" stroke-width="0.6" fill="none"/></svg>
<div class="tr" style="left:96px;top:572px;letter-spacing:-0.427px">Mesh 1</div>
<svg class="abs" style="left:39.7px;top:596.5px" width="7.6" height="5" viewBox="0 0 7.6 5"><path d="M0.5 0.6 L3.8 4 L7.1 0.6" fill="none" stroke="#111" stroke-width="1.3"/></svg>
<svg class="abs" style="left:54px;top:590.5px" width="16" height="16" viewBox="0 0 16 16"><path d="M0.4 6.6 C1.4 3.4 3.6 3.4 4.8 6.2 C5.4 7.6 6 8.4 6.8 8.6" fill="none" stroke="#2a9ab7" stroke-width="1.25"/><circle cx="8.9" cy="8.8" r="2.4" fill="none" stroke="#2a9ab7" stroke-width="1.25"/><circle cx="13.7" cy="8.8" r="2.4" fill="none" stroke="#2a9ab7" stroke-width="1.25"/><path d="M10.4 6.9 Q11.3 6 12.2 6.9" fill="none" stroke="#2a9ab7" stroke-width="1"/></svg>
<div class="tr" style="left:76px;top:590px;letter-spacing:-0.4px">Study 1</div>
<svg class="abs" style="left:74px;top:608.5px" width="16" height="16" viewBox="0 0 16 16"><path d="M1.5 0.8 V14.4 H15.2" fill="none" stroke="#6a6a6c" stroke-width="1"/><path d="M0.2 2.4 L1.5 0.6 L2.8 2.4 M13.6 13.1 L15.4 14.4 L13.6 15.7" fill="none" stroke="#6a6a6c" stroke-width="0.8"/><path d="M2 8.5 C6 8.5 8 9 9 6.5 C10 3 10.6 2 11.4 2 C12.4 2 13 8 15 10.5" fill="none" stroke="#2a9ab7" stroke-width="1"/><path d="M2 6 C6 6 9 7.6 14 11.6" fill="none" stroke="#8a8a8d" stroke-width="0.9"/><path d="M8.2 1 V14" stroke="#6a6a6c" stroke-width="0.7" stroke-dasharray="1 1"/></svg>
<div class="tr" style="left:96px;top:608px;letter-spacing:-0.023px">Step 1: Current Distribution Initialization</div>
<svg class="abs" style="left:74px;top:626.5px" width="16" height="16" viewBox="0 0 16 16"><path d="M1.5 0.8 V14.4 H15.2" fill="none" stroke="#6a6a6c" stroke-width="1"/><path d="M0.2 2.4 L1.5 0.6 L2.8 2.4 M13.6 13.1 L15.4 14.4 L13.6 15.7" fill="none" stroke="#6a6a6c" stroke-width="0.8"/><path d="M5 3 H15" stroke="#6a6a6c" stroke-width="0.9"/><path d="M3 12.4 C4.6 8 8 5.8 15 5.6" fill="none" stroke="#2a9ab7" stroke-width="1.1"/></svg>
<div class="tr" style="left:96px;top:626px;letter-spacing:-0.272px">Step 2: Stationary</div>
<svg class="abs" style="left:74px;top:644.5px" width="16" height="16" viewBox="0 0 16 16"><path d="M1.5 0.8 V14.4 H15.2" fill="none" stroke="#6a6a6c" stroke-width="1"/><path d="M0.2 2.4 L1.5 0.6 L2.8 2.4 M13.6 13.1 L15.4 14.4 L13.6 15.7" fill="none" stroke="#6a6a6c" stroke-width="0.8"/><path d="M2.4 12.6 C5 12.6 5.6 3 7.6 3 C9.6 3 10 11.4 15 12" fill="none" stroke="#2a9ab7" stroke-width="1.1"/><path d="M3 4 C4 10 7 12.4 14.6 12.8" fill="none" stroke="#8a8a8d" stroke-width="0.8"/></svg>
<div class="tr" style="left:96px;top:644px;letter-spacing:-0.215px">Step 3: Time Dependent</div>
<svg class="abs" style="left:61.0px;top:666.5px" width="5" height="8" viewBox="0 0 5 8"><path d="M0.6 0.6 L4.2 4 L0.6 7.4" fill="none" stroke="#444" stroke-width="1.2"/></svg>
<svg class="abs" style="left:74px;top:662.5px" width="16" height="16" viewBox="0 0 16 16"><path d="M1.4 2 V15.4 M5.4 5 V15.4 M9.4 8 V15.4 M13 11 V15.4" stroke="#6a6a6c" stroke-width="1"/><rect x="0.8" y="0.6" width="3.8" height="3.4" fill="#2a9ab7"/><rect x="4.6" y="3.8" width="3.8" height="3.4" fill="#2a9ab7"/><rect x="8.6" y="7" width="3.8" height="3.4" fill="#2a9ab7"/><rect x="12.2" y="10" width="3.6" height="3.2" fill="#2a9ab7"/></svg>
<div class="tr" style="left:96px;top:662px;letter-spacing:-0.068px">Solver Configurations</div>
<svg class="abs" style="left:74px;top:680.5px" width="16" height="16" viewBox="0 0 16 16"><path d="M4.4 0.8 H12.4 L11.6 6 H3.4Z" fill="#9dbfe8" stroke="#3b86cd" stroke-width="1"/><path d="M3.4 6 H11.6 L10 9 H0.4Z" fill="#3b86cd"/><path d="M12 6.6 H14.6 V10.6 H2.6 V12.4 M8.4 10.6 V12.4 M14 10.6 V12.4" fill="none" stroke="#6a6a6c" stroke-width="0.9"/><rect x="1.2" y="12.6" width="2.8" height="2.8" fill="#2a9ab7"/><rect x="7" y="12.6" width="2.8" height="2.8" fill="#4cae4c"/><rect x="12.6" y="12.6" width="2.8" height="2.8" fill="#f0a030"/></svg>
<div class="tr" style="left:96px;top:680px;letter-spacing:-0.015px">Job Configurations</div>
<svg class="abs" style="left:41.0px;top:702.5px" width="5" height="8" viewBox="0 0 5 8"><path d="M0.6 0.6 L4.2 4 L0.6 7.4" fill="none" stroke="#444" stroke-width="1.2"/></svg>
<svg class="abs" style="left:54px;top:698.5px" width="16" height="16" viewBox="0 0 16 16"><path d="M0.6 9.6 L2 8 V11 L5.6 14.8 H0.6Z" fill="#7d7d80"/><rect x="2.6" y="1" width="9" height="8" fill="#fff" stroke="#7d7d80" stroke-width="0.8"/><rect x="4" y="2.2" width="9" height="8" fill="#fff" stroke="#7d7d80" stroke-width="0.8"/><rect x="5.6" y="3.6" width="9.8" height="8.8" fill="#fff" stroke="#7d7d80" stroke-width="0.9"/><rect x="7" y="5.2" width="7" height="5.8" fill="#b0509f"/><rect x="5.4" y="12.4" width="10.2" height="2.6" fill="#fff" stroke="#7d7d80" stroke-width="0.9"/></svg>
<div class="tr" style="left:76px;top:698px;letter-spacing:-0.459px">Results</div>
<div class="panel" style="left:334px;top:178px;width:307px;height:868px"></div>
<div class="ptitle" style="left:340px;top:186px;color:#3a8ed6;letter-spacing:-0.3px">Settings</div>
<div class="abs" style="left:340px;top:215px;font-size:13px;line-height:16px;color:#3558a8;white-space:nowrap;letter-spacing:-0.1px">Hydrogen Fuel Cell</div>
<svg class="abs" style="left:588.7px;top:195px" width="8" height="4.5" viewBox="0 0 8 4.5"><path d="M0.4 0.4 L4 3.8 L7.6 0.4" fill="none" stroke="#444" stroke-width="1.2"/></svg>
<svg class="abs" style="left:607px;top:192px" width="9.5" height="9" viewBox="0 0 9.5 9"><rect x="0.5" y="0.5" width="8.5" height="8" fill="none" stroke="#333" stroke-width="1"/><rect x="0.5" y="0.5" width="8.5" height="2.2" fill="#333"/></svg>
<svg class="abs" style="left:625px;top:191px" width="7" height="10" viewBox="0 0 7 10"><path d="M1.6 0.5 H5.4 V5 M1.6 0.5 V5 M0.3 5.2 H6.7 M3.5 5.2 V9.8" fill="none" stroke="#333" stroke-width="1"/><rect x="3.6" y="0.5" width="1.8" height="4.6" fill="#333"/></svg>
<div class="abs" style="left:339px;top:248px;font-size:12px;line-height:16px">Label:</div>
<div class="abs" style="left:384px;top:247px;width:224px;height:18px;border:1px solid #c6c6c9;background:#fff;font-size:12px;line-height:16px;padding-left:2px;white-space:nowrap">Hydrogen Fuel Cell</div>
<div class="abs" style="left:339px;top:274px;font-size:12px;line-height:16px">Name:</div>
<div class="abs" style="left:384px;top:273px;width:224px;height:18px;border:1px solid #c6c6c9;background:#fff;font-size:12px;line-height:16px;padding-left:2px;white-space:nowrap">fc</div>
<div class="abs" style="left:616px;top:245px;width:20px;height:22px;border:1px solid #dadadd;background:#ececef;border-radius:2px"></div>
<svg class="abs" style="left:618.5px;top:248.5px" width="15" height="15" viewBox="0 0 15 15"><rect x="1.6" y="0.6" width="12.8" height="12.4" rx="0.8" fill="#fdfdfd" stroke="#7d7d80" stroke-width="1"/><rect x="1.6" y="0.6" width="12.8" height="2.6" fill="#b9b9bc" stroke="#7d7d80" stroke-width="1"/><path d="M5 6.4 H12.4 M5 8.8 H12.4" stroke="#1fa88a" stroke-width="1.1"/><rect x="0" y="9.4" width="5.4" height="5.6" fill="#ececef"/><path d="M0.6 14.4 L4.2 10.8 M1.6 10.4 H4.6 V13.4" fill="none" stroke="#1fa88a" stroke-width="1.2"/></svg>
<div class="sec" style="left:334px;top:300px"><span style="letter-spacing:0.049px">Domain Selection</span></div><svg class="abs" style="left:341.5px;top:310.5px" width="5.5" height="9" viewBox="0 0 5.5 9"><path d="M0.7 0.7 L4.4 4.4 L0.7 8.1" fill="none" stroke="#222" stroke-width="1.6"/></svg>
<div class="sec" style="left:334px;top:329px"><span style="letter-spacing:0.15px">Equation</span></div><svg class="abs" style="left:341.5px;top:339.5px" width="5.5" height="9" viewBox="0 0 5.5 9"><path d="M0.7 0.7 L4.4 4.4 L0.7 8.1" fill="none" stroke="#222" stroke-width="1.6"/></svg>
<div class="sec" style="left:334px;top:358px"><span style="letter-spacing:0.238px">H2 Gas Mixture</span></div><svg class="abs" style="left:341px;top:369px" width="8" height="5" viewBox="0 0 8 5"><path d="M0.5 0.5 L4 4 L7.5 0.5" fill="none" stroke="#2f6fc0" stroke-width="1.3"/></svg>
<div class="sec" style="left:334px;top:674px"><span style="letter-spacing:0.23px">O2 Gas Mixture</span></div><svg class="abs" style="left:341.5px;top:684.5px" width="5.5" height="9" viewBox="0 0 5.5 9"><path d="M0.7 0.7 L4.4 4.4 L0.7 8.1" fill="none" stroke="#222" stroke-width="1.6"/></svg>
<div class="sec" style="left:334px;top:703px"><span style="letter-spacing:0.13px">Electrode Reaction Settings</span></div><svg class="abs" style="left:341.5px;top:713.5px" width="5.5" height="9" viewBox="0 0 5.5 9"><path d="M0.7 0.7 L4.4 4.4 L0.7 8.1" fill="none" stroke="#222" stroke-width="1.6"/></svg>
<div class="sec" style="left:334px;top:732px"><span style="letter-spacing:0.25px">Electrolyte and Membrane Transport</span></div><svg class="abs" style="left:341.5px;top:742.5px" width="5.5" height="9" viewBox="0 0 5.5 9"><path d="M0.7 0.7 L4.4 4.4 L0.7 8.1" fill="none" stroke="#222" stroke-width="1.6"/></svg>
<div class="sec" style="left:334px;top:761px"><span style="letter-spacing:0.252px">Out-of-Plane Thickness</span></div><svg class="abs" style="left:341.5px;top:771.5px" width="5.5" height="9" viewBox="0 0 5.5 9"><path d="M0.7 0.7 L4.4 4.4 L0.7 8.1" fill="none" stroke="#222" stroke-width="1.6"/></svg>
<div class="sec" style="left:334px;top:790px"><span style="letter-spacing:0.081px">Reference Pressure Level</span></div><svg class="abs" style="left:341.5px;top:800.5px" width="5.5" height="9" viewBox="0 0 5.5 9"><path d="M0.7 0.7 L4.4 4.4 L0.7 8.1" fill="none" stroke="#222" stroke-width="1.6"/></svg>
<div class="sec" style="left:334px;top:819px"><span style="letter-spacing:0.185px">Advanced Settings</span></div><svg class="abs" style="left:341.5px;top:829.5px" width="5.5" height="9" viewBox="0 0 5.5 9"><path d="M0.7 0.7 L4.4 4.4 L0.7 8.1" fill="none" stroke="#222" stroke-width="1.6"/></svg>
<div class="sec" style="left:334px;top:848px"><span style="letter-spacing:0.15px">Physics vs. Materials Reference Electrode Potentials</span></div><svg class="abs" style="left:341.5px;top:858.5px" width="5.5" height="9" viewBox="0 0 5.5 9"><path d="M0.7 0.7 L4.4 4.4 L0.7 8.1" fill="none" stroke="#222" stroke-width="1.6"/></svg>
<div class="sec" style="left:334px;top:877px"><span style="letter-spacing:0.018px">Discretization</span></div><svg class="abs" style="left:341.5px;top:887.5px" width="5.5" height="9" viewBox="0 0 5.5 9"><path d="M0.7 0.7 L4.4 4.4 L0.7 8.1" fill="none" stroke="#222" stroke-width="1.6"/></svg>
<div class="sec" style="left:334px;top:906px"><span style="letter-spacing:0.072px">Dependent Variables</span></div><svg class="abs" style="left:341.5px;top:916.5px" width="5.5" height="9" viewBox="0 0 5.5 9"><path d="M0.7 0.7 L4.4 4.4 L0.7 8.1" fill="none" stroke="#222" stroke-width="1.6"/></svg>
<div class="abs" style="left:339px;top:394px;font-size:12px;line-height:16px;white-space:nowrap">Include species</div>
<div class="cb on" style="left:340px;top:416.0px"><svg width="11" height="11" viewBox="0 0 11 11" style="position:absolute;left:0;top:0"><path d="M1.6 5.4 L4.4 8.6 L9.6 1.8" fill="none" stroke="#111" stroke-width="1.6"/></svg></div><div class="cl" style="left:359px;top:414.5px">H2O</div>
<div class="cb on" style="left:340px;top:437.0px"><svg width="11" height="11" viewBox="0 0 11 11" style="position:absolute;left:0;top:0"><path d="M1.6 5.4 L4.4 8.6 L9.6 1.8" fill="none" stroke="#111" stroke-width="1.6"/></svg></div><div class="cl" style="left:359px;top:435.5px">N2</div>
<div class="cb" style="left:340px;top:458.0px"></div><div class="cl" style="left:359px;top:456.5px">CO2</div>
<div class="cb" style="left:340px;top:479.0px"></div><div class="cl" style="left:359px;top:477.5px">CO</div>
<div class="cb" style="left:340px;top:500.0px"></div><div class="cl" style="left:359px;top:498.5px">CH4</div>
<div class="cb on" style="left:340px;top:521.0px"><svg width="11" height="11" viewBox="0 0 11 11" style="position:absolute;left:0;top:0"><path d="M1.6 5.4 L4.4 8.6 L9.6 1.8" fill="none" stroke="#111" stroke-width="1.6"/></svg></div><div class="cl" style="left:359px;top:519.5px">O2</div>
<div class="cb" style="left:340px;top:542.0px"></div><div class="cl" style="left:359px;top:540.5px">Auxiliary species</div>
<div class="cb on" style="left:340px;top:585.0px"><svg width="11" height="11" viewBox="0 0 11 11" style="position:absolute;left:0;top:0"><path d="M1.6 5.4 L4.4 8.6 L9.6 1.8" fill="none" stroke="#111" stroke-width="1.6"/></svg></div><div class="cl" style="left:359px;top:583.5px">Include gas phase diffusion</div>
<div class="cb on" style="left:340px;top:606.0px"><svg width="11" height="11" viewBox="0 0 11 11" style="position:absolute;left:0;top:0"><path d="M1.6 5.4 L4.4 8.6 L9.6 1.8" fill="none" stroke="#111" stroke-width="1.6"/></svg></div><div class="cl" style="left:359px;top:604.5px">Use Darcy&#39;s Law for momentum transport</div>
<div class="cb" style="left:340px;top:649.0px"></div><div class="cl" style="left:359px;top:647.5px">Include H2O(l) in reaction stoichiometry</div>
<div class="abs" style="left:339px;top:570px;width:9px;height:1px;background:#d5d6da"></div><div class="abs" style="left:474px;top:570px;width:162px;height:1px;background:#d5d6da"></div><div class="abs" style="left:352px;top:562px;font-size:12px;line-height:16px;white-space:nowrap">Transport mechanisms</div>
<div class="abs" style="left:339px;top:634px;width:9px;height:1px;background:#d5d6da"></div><div class="abs" style="left:406px;top:634px;width:230px;height:1px;background:#d5d6da"></div><div class="abs" style="left:352px;top:626px;font-size:12px;line-height:16px;white-space:nowrap">Reactions</div>
<div class="panel" style="left:649px;top:178px;width:1263px;height:753px"></div>
<div class="abs" style="left:649px;top:211px;width:1263px;height:1px;background:#e4e5e9"></div>
<div class="abs" style="left:649px;top:212px;width:1263px;height:25px;background:#fafbfe"></div>
<div class="abs" style="left:649px;top:237px;width:1263px;height:694px;background:#fff;border-radius:0 0 4px 4px"></div>
<div class="tab" style="left:662px;top:188px;color:#444">Graphics</div>
<div class="tab" style="left:739px;top:188px;color:#3558a8">Oxygen Mole Fraction</div>
<svg class="abs" style="left:876px;top:191.5px" width="9" height="9" viewBox="0 0 9 9"><path d="M0.5 0.5 L8.5 8.5 M8.5 0.5 L0.5 8.5" stroke="#a8a8ab" stroke-width="1.1"/></svg>
<div class="abs" style="left:734px;top:208px;width:160px;height:2px;background:#2b7bd0"></div>
<svg class="abs" style="left:1859.5px;top:195px" width="8" height="4.5" viewBox="0 0 8 4.5"><path d="M0.4 0.4 L4 3.8 L7.6 0.4" fill="none" stroke="#b8b8bb" stroke-width="1.1"/></svg><svg class="abs" style="left:1877.5px;top:192px" width="9.5" height="9" viewBox="0 0 9.5 9"><rect x="0.5" y="0.5" width="8.5" height="8" fill="none" stroke="#9a9a9d" stroke-width="1"/><rect x="0.5" y="0.5" width="8.5" height="2" fill="#9a9a9d"/></svg><svg class="abs" style="left:1896.0px;top:191px" width="7" height="10" viewBox="0 0 7 10"><path d="M1.6 0.5 H5.4 V5 M1.6 0.5 V5 M0.3 5.2 H6.7 M3.5 5.2 V9.8" fill="none" stroke="#9a9a9d" stroke-width="1"/></svg>
<svg class="abs" style="left:657.6px;top:217.6px" width="14.5" height="14.5" viewBox="0 0 14.5 14.5"><circle cx="5.8" cy="5.8" r="5" fill="none" stroke="#3b86cd" stroke-width="1.3"/><path d="M9.6 9.6 L13.2 13.6" stroke="#3b86cd" stroke-width="2" stroke-linecap="round"/><path d="M2.8 5.8 H8.8 M5.8 2.8 V8.8" stroke="#3b86cd" stroke-width="1.2"/></svg>
<svg class="abs" style="left:680.4px;top:217.6px" width="14.5" height="14.5" viewBox="0 0 14.5 14.5"><circle cx="5.8" cy="5.8" r="5" fill="none" stroke="#3b86cd" stroke-width="1.3"/><path d="M9.6 9.6 L13.2 13.6" stroke="#3b86cd" stroke-width="2" stroke-linecap="round"/><path d="M2.8 5.8 H8.8" stroke="#3b86cd" stroke-width="1.2"/></svg>
<svg class="abs" style="left:701.8px;top:217.4px" width="17" height="15" viewBox="0 0 17 15"><path d="M0.7 5.2 V12.6 H8.4" fill="none" stroke="#3b86cd" stroke-width="1.2" stroke-dasharray="1.8 1.2"/><path d="M0.7 5.2 H3" stroke="#3b86cd" stroke-width="1.2"/><g transform="translate(3,0)"><circle cx="5.8" cy="5.8" r="5" fill="none" stroke="#3b86cd" stroke-width="1.3"/><path d="M9.6 9.6 L13.2 13.6" stroke="#3b86cd" stroke-width="2" stroke-linecap="round"/><path d="M2.8 5.8 H8.8 M5.8 2.8 V8.8" stroke="#3b86cd" stroke-width="1.2"/></g></svg>
<svg class="abs" style="left:724px;top:222px" width="7" height="4" viewBox="0 0 7 4"><path d="M0 0 H7 L3.5 4Z" fill="#111"/></svg>
<svg class="abs" style="left:743px;top:216px" width="15" height="15" viewBox="0 0 15 15"><rect x="0.6" y="0.6" width="13.8" height="13.8" fill="#fff" stroke="#6d6d70" stroke-width="1.2"/><path d="M7.5 5.4 V9.6 M5.4 7.5 H9.6" stroke="#77777a" stroke-width="1"/><path d="M5.6 3.8 L7.5 1.6 L9.4 3.8Z M5.6 11.2 L7.5 13.4 L9.4 11.2Z M3.8 5.6 L1.6 7.5 L3.8 9.4Z M11.2 5.6 L13.4 7.5 L11.2 9.4Z" fill="#3b86cd"/></svg>
<div class="abs" style="left:766px;top:216px;width:1px;height:16px;background:#c9cacf"></div>
<div class="abs" style="left:772px;top:214px;width:20px;height:20px;background:#cde4fa;border:1px solid #90c2ef;border-radius:2px"></div>
<svg class="abs" style="left:774.2px;top:217px" width="15.4" height="13.6" viewBox="0 0 15.4 13.6"><rect x="0.7" y="0.7" width="14" height="12.2" fill="#4a86d0" stroke="#555" stroke-width="1.3"/><rect x="1.6" y="1.5" width="12.2" height="10.6" fill="#4a86d0" stroke="#d6e9fb" stroke-width="0.6"/><rect x="2.6" y="2.4" width="2.5" height="2.2" fill="#fff"/><rect x="2.6" y="5.5" width="2.5" height="2.2" fill="#fff"/><rect x="2.6" y="8.6" width="2.5" height="2.2" fill="#fff"/><rect x="6.1" y="2.4" width="2.5" height="2.2" fill="#fff"/><rect x="6.1" y="5.5" width="2.5" height="2.2" fill="#fff"/><rect x="6.1" y="8.6" width="2.5" height="2.2" fill="#fff"/><rect x="9.6" y="2.4" width="2.5" height="2.2" fill="#fff"/><rect x="9.6" y="5.5" width="2.5" height="2.2" fill="#fff"/><rect x="9.6" y="8.6" width="2.5" height="2.2" fill="#fff"/></svg>
<div class="abs" style="left:795px;top:214px;width:20px;height:20px;background:#cde4fa;border:1px solid #90c2ef;border-radius:2px"></div>
<svg class="abs" style="left:797.2px;top:217px" width="15.4" height="13.6" viewBox="0 0 15.4 13.6"><defs><linearGradient id="lg1" x1="0" y1="0" x2="0" y2="1"><stop offset="0" stop-color="#3b62c8"/><stop offset="0.35" stop-color="#b0a06a"/><stop offset="0.6" stop-color="#f0a030"/><stop offset="1" stop-color="#e0245e"/></linearGradient></defs><rect x="0.7" y="0.7" width="14" height="12.2" fill="#d6e9fb" stroke="#555" stroke-width="1.3"/><rect x="10" y="2.2" width="2.6" height="9.4" fill="url(#lg1)"/></svg>
<div class="abs" style="left:820px;top:216px;width:1px;height:16px;background:#c9cacf"></div>
<svg class="abs" style="left:830.6px;top:217.6px" width="11" height="12.6" viewBox="0 0 11 12.6"><path d="M2.6 5.6 V3.6 A2.9 2.9 0 0 1 8.4 3.6 V5.6" fill="none" stroke="#3b86cd" stroke-width="1.5"/><rect x="0" y="5.2" width="11" height="7.4" rx="0.8" fill="#3b86cd"/></svg>
<div class="abs" style="left:851px;top:216px;width:1px;height:16px;background:#c9cacf"></div>
<svg class="abs" style="left:859.5px;top:216.5px" width="15" height="16" viewBox="0 0 15 16"><path d="M7.6 0.8 C12 0.6 14.6 3.6 14 7.6 C13.4 11.6 9 15.4 4.4 15 C0.4 14.6 0 11 2 9.6 C3.8 8.4 3.2 7.4 2.6 5.8 C1.8 3.4 4 1 7.6 0.8Z" fill="#d5d5d8" stroke="#77777a" stroke-width="1"/><circle cx="7" cy="5.2" r="2" fill="#fff" stroke="#77777a" stroke-width="0.9"/><circle cx="11.2" cy="4.6" r="1.2" fill="#3b86cd"/><circle cx="11.8" cy="8" r="1.2" fill="#e8a23a"/><circle cx="9.4" cy="10.8" r="1.2" fill="#e0623c"/><circle cx="6.2" cy="12.4" r="1.2" fill="#d81e5b"/><circle cx="3.8" cy="12" r="1" fill="#d81e5b"/></svg>
<svg class="abs" style="left:880.3px;top:222px" width="7" height="4" viewBox="0 0 7 4"><path d="M0 0 H7 L3.5 4Z" fill="#111"/></svg>
<div class="abs" style="left:899px;top:216px;width:1px;height:16px;background:#c9cacf"></div>
<svg class="abs" style="left:907.8px;top:216.8px" width="14.4" height="14.4" viewBox="0 0 14.4 14.4"><circle cx="7.2" cy="7.2" r="7.0" fill="#3b86cd"/><path d="M10.23 8.95 L7.20 10.70 L4.17 8.95 L4.17 5.45 L7.20 3.70 L10.23 5.45Z" fill="#fafbfe"/><path d="M10.23 8.95 L10.23 14.25" stroke="#fafbfe" stroke-width="1.1"/><path d="M7.20 10.70 L2.61 13.35" stroke="#fafbfe" stroke-width="1.1"/><path d="M4.17 8.95 L-0.42 6.30" stroke="#fafbfe" stroke-width="1.1"/><path d="M4.17 5.45 L4.17 0.15" stroke="#fafbfe" stroke-width="1.1"/><path d="M7.20 3.70 L11.79 1.05" stroke="#fafbfe" stroke-width="1.1"/><path d="M10.23 5.45 L14.82 8.10" stroke="#fafbfe" stroke-width="1.1"/></svg>
<svg class="abs" style="left:929px;top:222px" width="7" height="4" viewBox="0 0 7 4"><path d="M0 0 H7 L3.5 4Z" fill="#111"/></svg>
<svg class="abs" style="left:947.8px;top:218.6px" width="16.4" height="11.6" viewBox="0 0 16.4 11.6"><path d="M0 2.6 H3.6 L4.8 0.4 H10.4 L11.6 2.6 H16.4 V11.6 H0Z" fill="#3b86cd"/><circle cx="8.2" cy="6.8" r="3.2" fill="#f9fafe"/><circle cx="8.2" cy="6.8" r="1.9" fill="#3b86cd"/></svg>
<svg class="abs" style="left:972px;top:216px" width="14.5" height="16" viewBox="0 0 14.5 16"><rect x="3" y="0.6" width="8.5" height="4.6" fill="#f9fafe" stroke="#3b86cd" stroke-width="1.2"/><rect x="0.6" y="4.8" width="13.3" height="6.6" rx="1.2" fill="#9cc3e8" stroke="#3b86cd" stroke-width="1.2"/><rect x="3" y="9.4" width="8.5" height="6" fill="#fff" stroke="#3b86cd" stroke-width="1.2"/></svg>
<svg class="abs" style="left:0;top:0" width="1920" height="1080" viewBox="0 0 1920 1080"><defs><linearGradient id="g1" gradientUnits="userSpaceOnUse" x1="749.0" y1="0" x2="1769.2" y2="0"><stop offset="0.0000" stop-color="#cc8188"/><stop offset="0.2490" stop-color="#cd8388"/><stop offset="0.2500" stop-color="#cd8488"/><stop offset="0.2519" stop-color="#d49389"/><stop offset="0.2549" stop-color="#da9f8d"/><stop offset="0.2647" stop-color="#e4c0a2"/><stop offset="0.2754" stop-color="#e9d3b1"/><stop offset="0.2970" stop-color="#eee4c0"/><stop offset="0.3391" stop-color="#f1eeca"/><stop offset="0.6067" stop-color="#f2f0cc"/></linearGradient><linearGradient id="g2" gradientUnits="userSpaceOnUse" x1="749.0" y1="0" x2="1769.2" y2="0"><stop offset="0.0000" stop-color="#cd8288"/><stop offset="0.2441" stop-color="#ce8588"/><stop offset="0.2500" stop-color="#d08b89"/><stop offset="0.2549" stop-color="#daa08d"/><stop offset="0.2647" stop-color="#e4c0a2"/><stop offset="0.2754" stop-color="#e9d3b1"/><stop offset="0.2970" stop-color="#eee4c0"/><stop offset="0.3391" stop-color="#f1eeca"/><stop offset="0.6067" stop-color="#f2f0cc"/></linearGradient><linearGradient id="g3" gradientUnits="userSpaceOnUse" x1="749.0" y1="0" x2="1769.2" y2="0"><stop offset="0.0000" stop-color="#cd8488"/><stop offset="0.2411" stop-color="#ce8689"/><stop offset="0.2490" stop-color="#d18c89"/><stop offset="0.2539" stop-color="#d99d8b"/><stop offset="0.2637" stop-color="#e3bea0"/><stop offset="0.2735" stop-color="#e9d0af"/><stop offset="0.2931" stop-color="#eee2bf"/><stop offset="0.3303" stop-color="#f1edc9"/><stop offset="0.5273" stop-color="#f2f0cc"/><stop offset="0.6067" stop-color="#f2f0cc"/></linearGradient><linearGradient id="g4" gradientUnits="userSpaceOnUse" x1="749.0" y1="0" x2="1769.2" y2="0"><stop offset="0.0000" stop-color="#ce8588"/><stop offset="0.2372" stop-color="#cf8889"/><stop offset="0.2480" stop-color="#d28e89"/><stop offset="0.2539" stop-color="#d99e8c"/><stop offset="0.2647" stop-color="#e4c1a3"/><stop offset="0.2754" stop-color="#e9d3b1"/><stop offset="0.2970" stop-color="#eee4c1"/><stop offset="0.3391" stop-color="#f1eeca"/><stop offset="0.6067" stop-color="#f2f0cc"/></linearGradient><linearGradient id="g5" gradientUnits="userSpaceOnUse" x1="749.0" y1="0" x2="1769.2" y2="0"><stop offset="0.0000" stop-color="#cf8789"/><stop offset="0.2352" stop-color="#d08989"/><stop offset="0.2480" stop-color="#d39189"/><stop offset="0.2539" stop-color="#daa08d"/><stop offset="0.2656" stop-color="#e5c3a5"/><stop offset="0.2794" stop-color="#ebd8b5"/><stop offset="0.3039" stop-color="#efe7c3"/><stop offset="0.3578" stop-color="#f2efcb"/><stop offset="0.6067" stop-color="#f2f0cc"/></linearGradient><linearGradient id="g6" gradientUnits="userSpaceOnUse" x1="749.0" y1="0" x2="1769.2" y2="0"><stop offset="0.0000" stop-color="#cf8889"/><stop offset="0.2323" stop-color="#d08b89"/><stop offset="0.2470" stop-color="#d49289"/><stop offset="0.2529" stop-color="#d99f8c"/><stop offset="0.2656" stop-color="#e5c4a5"/><stop offset="0.2794" stop-color="#ebd8b5"/><stop offset="0.3039" stop-color="#efe7c3"/><stop offset="0.3578" stop-color="#f2efcb"/><stop offset="0.6067" stop-color="#f2f0cc"/></linearGradient><linearGradient id="g7" gradientUnits="userSpaceOnUse" x1="749.0" y1="0" x2="1769.2" y2="0"><stop offset="0.0000" stop-color="#d08989"/><stop offset="0.2313" stop-color="#d18c89"/><stop offset="0.2470" stop-color="#d5958a"/><stop offset="0.2519" stop-color="#d99e8c"/><stop offset="0.2666" stop-color="#e6c7a7"/><stop offset="0.2823" stop-color="#ecdbb8"/><stop offset="0.3097" stop-color="#f0e9c5"/><stop offset="0.3764" stop-color="#f2efcb"/><stop offset="0.6067" stop-color="#f2f0cc"/></linearGradient><linearGradient id="g8" gradientUnits="userSpaceOnUse" x1="749.0" y1="0" x2="1769.2" y2="0"><stop offset="0.0000" stop-color="#d08b89"/><stop offset="0.2294" stop-color="#d28d89"/><stop offset="0.2460" stop-color="#d5968a"/><stop offset="0.2519" stop-color="#daa08d"/><stop offset="0.2666" stop-color="#e6c7a7"/><stop offset="0.2833" stop-color="#ecdbb9"/><stop offset="0.3117" stop-color="#f0e9c6"/><stop offset="0.3842" stop-color="#f2f0cc"/><stop offset="0.6067" stop-color="#f2f0cc"/></linearGradient><linearGradient id="g9" gradientUnits="userSpaceOnUse" x1="749.0" y1="0" x2="1769.2" y2="0"><stop offset="0.0000" stop-color="#d18c89"/><stop offset="0.2274" stop-color="#d28f89"/><stop offset="0.2460" stop-color="#d6988a"/><stop offset="0.2519" stop-color="#dba38e"/><stop offset="0.2676" stop-color="#e6c9a9"/><stop offset="0.2852" stop-color="#ecddba"/><stop offset="0.3156" stop-color="#f0eac7"/><stop offset="0.4009" stop-color="#f2f0cc"/><stop offset="0.6067" stop-color="#f2f0cc"/></linearGradient><linearGradient id="g10" gradientUnits="userSpaceOnUse" x1="749.0" y1="0" x2="1769.2" y2="0"><stop offset="0.0000" stop-color="#d28e89"/><stop offset="0.2264" stop-color="#d39089"/><stop offset="0.2450" stop-color="#d7998a"/><stop offset="0.2539" stop-color="#deaa92"/><stop offset="0.2676" stop-color="#e7caaa"/><stop offset="0.2862" stop-color="#eddebb"/><stop offset="0.3176" stop-color="#f0ebc7"/><stop offset="0.4117" stop-color="#f2f0cc"/><stop offset="0.6067" stop-color="#f2f0cc"/></linearGradient><linearGradient id="g11" gradientUnits="userSpaceOnUse" x1="749.0" y1="0" x2="1769.2" y2="0"><stop offset="0.0000" stop-color="#d28f89"/><stop offset="0.2254" stop-color="#d49289"/><stop offset="0.2450" stop-color="#d89b8a"/><stop offset="0.2578" stop-color="#e1b59a"/><stop offset="0.2696" stop-color="#e8cdac"/><stop offset="0.2892" stop-color="#ede0bd"/><stop offset="0.3235" stop-color="#f1ecc8"/><stop offset="0.4519" stop-color="#f2f0cc"/><stop offset="0.6067" stop-color="#f2f0cc"/></linearGradient><linearGradient id="g12" gradientUnits="userSpaceOnUse" x1="749.0" y1="0" x2="1769.2" y2="0"><stop offset="0.0000" stop-color="#d39089"/><stop offset="0.2245" stop-color="#d49389"/><stop offset="0.2441" stop-color="#d89c8a"/><stop offset="0.2578" stop-color="#e2b79b"/><stop offset="0.2696" stop-color="#e8cead"/><stop offset="0.2892" stop-color="#ede0bd"/><stop offset="0.3244" stop-color="#f1ecc8"/><stop offset="0.4627" stop-color="#f2f0cc"/><stop offset="0.6067" stop-color="#f2f0cc"/></linearGradient><linearGradient id="g13" gradientUnits="userSpaceOnUse" x1="749.0" y1="0" x2="1769.2" y2="0"><stop offset="0.0000" stop-color="#d49289"/><stop offset="0.2235" stop-color="#d5958a"/><stop offset="0.2431" stop-color="#d99d8b"/><stop offset="0.2568" stop-color="#e1b69a"/><stop offset="0.2696" stop-color="#e8cead"/><stop offset="0.2901" stop-color="#ede1be"/><stop offset="0.3264" stop-color="#f1ecc8"/><stop offset="0.4852" stop-color="#f2f0cc"/><stop offset="0.6067" stop-color="#f2f0cc"/></linearGradient><linearGradient id="g14" gradientUnits="userSpaceOnUse" x1="749.0" y1="0" x2="1769.2" y2="0"><stop offset="0.0000" stop-color="#d49389"/><stop offset="0.2225" stop-color="#d6968a"/><stop offset="0.2411" stop-color="#d99d8b"/><stop offset="0.2549" stop-color="#e1b398"/><stop offset="0.2686" stop-color="#e8cdad"/><stop offset="0.2892" stop-color="#ede1bd"/><stop offset="0.3244" stop-color="#f1ecc8"/><stop offset="0.4656" stop-color="#f2f0cc"/><stop offset="0.6067" stop-color="#f2f0cc"/></linearGradient><linearGradient id="g15" gradientUnits="userSpaceOnUse" x1="749.0" y1="0" x2="1769.2" y2="0"><stop offset="0.0000" stop-color="#d5958a"/><stop offset="0.2215" stop-color="#d6978a"/><stop offset="0.2401" stop-color="#da9f8c"/><stop offset="0.2539" stop-color="#e1b398"/><stop offset="0.2686" stop-color="#e8cead"/><stop offset="0.2892" stop-color="#ede1bd"/><stop offset="0.3254" stop-color="#f1ecc8"/><stop offset="0.4783" stop-color="#f2f0cc"/><stop offset="0.6067" stop-color="#f2f0cc"/></linearGradient><linearGradient id="g16" gradientUnits="userSpaceOnUse" x1="749.0" y1="0" x2="1769.2" y2="0"><stop offset="0.0000" stop-color="#d6968a"/><stop offset="0.2205" stop-color="#d7998a"/><stop offset="0.2392" stop-color="#daa08d"/><stop offset="0.2529" stop-color="#e1b398"/><stop offset="0.2686" stop-color="#e8cfae"/><stop offset="0.2901" stop-color="#eee1be"/><stop offset="0.3274" stop-color="#f1ecc9"/><stop offset="0.5058" stop-color="#f2f0cc"/><stop offset="0.6067" stop-color="#f2f0cc"/></linearGradient><linearGradient id="g17" gradientUnits="userSpaceOnUse" x1="749.0" y1="0" x2="1769.2" y2="0"><stop offset="0.0000" stop-color="#d6978a"/><stop offset="0.2205" stop-color="#d89a8a"/><stop offset="0.2401" stop-color="#dba48f"/><stop offset="0.2539" stop-color="#e2b79b"/><stop offset="0.2696" stop-color="#e9d0af"/><stop offset="0.2921" stop-color="#eee3bf"/><stop offset="0.3323" stop-color="#f1edc9"/><stop offset="0.6067" stop-color="#f2f0cc"/></linearGradient><linearGradient id="g18" gradientUnits="userSpaceOnUse" x1="749.0" y1="0" x2="1769.2" y2="0"><stop offset="0.0000" stop-color="#d7998a"/><stop offset="0.2186" stop-color="#d89b8a"/><stop offset="0.2401" stop-color="#dca690"/><stop offset="0.2539" stop-color="#e2b99c"/><stop offset="0.2696" stop-color="#e9d1b0"/><stop offset="0.2931" stop-color="#eee3c0"/><stop offset="0.3352" stop-color="#f1edca"/><stop offset="0.6067" stop-color="#f2f0cc"/></linearGradient><linearGradient id="g19" gradientUnits="userSpaceOnUse" x1="749.0" y1="0" x2="1769.2" y2="0"><stop offset="0.0000" stop-color="#d89a8a"/><stop offset="0.2147" stop-color="#d99d8b"/><stop offset="0.2392" stop-color="#dda791"/><stop offset="0.2529" stop-color="#e2b99d"/><stop offset="0.2696" stop-color="#e9d2b0"/><stop offset="0.2931" stop-color="#eee3c0"/><stop offset="0.3362" stop-color="#f1eeca"/><stop offset="0.6067" stop-color="#f2f0cc"/></linearGradient><linearGradient id="g20" gradientUnits="userSpaceOnUse" x1="749.0" y1="0" x2="1769.2" y2="0"><stop offset="0.0000" stop-color="#d89c8a"/><stop offset="0.2117" stop-color="#d99f8c"/><stop offset="0.2372" stop-color="#dda891"/><stop offset="0.2519" stop-color="#e2b99d"/><stop offset="0.2705" stop-color="#e9d3b2"/><stop offset="0.2950" stop-color="#efe5c1"/><stop offset="0.3411" stop-color="#f1eeca"/><stop offset="0.6067" stop-color="#f2f0cc"/></linearGradient><linearGradient id="g21" gradientUnits="userSpaceOnUse" x1="749.0" y1="0" x2="1769.2" y2="0"><stop offset="0.0000" stop-color="#d99e8c"/><stop offset="0.2117" stop-color="#daa18d"/><stop offset="0.2382" stop-color="#deab93"/><stop offset="0.2539" stop-color="#e3bea0"/><stop offset="0.2735" stop-color="#ead7b4"/><stop offset="0.2999" stop-color="#efe7c3"/><stop offset="0.3539" stop-color="#f2efcb"/><stop offset="0.6067" stop-color="#f2f0cc"/></linearGradient><linearGradient id="g22" gradientUnits="userSpaceOnUse" x1="749.0" y1="0" x2="1769.2" y2="0"><stop offset="0.0000" stop-color="#daa08d"/><stop offset="0.2117" stop-color="#dba38e"/><stop offset="0.2382" stop-color="#dfad94"/><stop offset="0.2578" stop-color="#e5c6a6"/><stop offset="0.2813" stop-color="#ecddba"/><stop offset="0.3137" stop-color="#f0eac7"/><stop offset="0.4048" stop-color="#f2f0cc"/><stop offset="0.6067" stop-color="#f2f0cc"/></linearGradient><linearGradient id="g23" gradientUnits="userSpaceOnUse" x1="749.0" y1="0" x2="1769.2" y2="0"><stop offset="0.0000" stop-color="#dba28e"/><stop offset="0.2107" stop-color="#dca590"/><stop offset="0.2382" stop-color="#e0af95"/><stop offset="0.2754" stop-color="#ebd9b7"/><stop offset="0.3048" stop-color="#f0e8c5"/><stop offset="0.3705" stop-color="#f2efcb"/><stop offset="0.6067" stop-color="#f2f0cc"/></linearGradient><linearGradient id="g24" gradientUnits="userSpaceOnUse" x1="749.0" y1="0" x2="1769.2" y2="0"><stop offset="0.0000" stop-color="#dba48f"/><stop offset="0.2107" stop-color="#dda791"/><stop offset="0.2372" stop-color="#e0b196"/><stop offset="0.2764" stop-color="#ecdbb8"/><stop offset="0.3068" stop-color="#f0e9c5"/><stop offset="0.3784" stop-color="#f2f0cc"/><stop offset="0.6067" stop-color="#f2f0cc"/></linearGradient><linearGradient id="g25" gradientUnits="userSpaceOnUse" x1="749.0" y1="0" x2="1769.2" y2="0"><stop offset="0.0000" stop-color="#dca690"/><stop offset="0.2107" stop-color="#dda992"/><stop offset="0.2372" stop-color="#e1b398"/><stop offset="0.2774" stop-color="#ecdcb9"/><stop offset="0.3097" stop-color="#f0eac6"/><stop offset="0.3911" stop-color="#f2f0cc"/><stop offset="0.6067" stop-color="#f2f0cc"/></linearGradient><linearGradient id="g26" gradientUnits="userSpaceOnUse" x1="749.0" y1="0" x2="1769.2" y2="0"><stop offset="0.0000" stop-color="#dda892"/><stop offset="0.2107" stop-color="#deab93"/><stop offset="0.2362" stop-color="#e1b499"/><stop offset="0.2784" stop-color="#ecddba"/><stop offset="0.3117" stop-color="#f0eac7"/><stop offset="0.4019" stop-color="#f2f0cc"/><stop offset="0.6067" stop-color="#f2f0cc"/></linearGradient><linearGradient id="g27" gradientUnits="userSpaceOnUse" x1="749.0" y1="0" x2="1769.2" y2="0"><stop offset="0.0000" stop-color="#deaa93"/><stop offset="0.2107" stop-color="#dfad94"/><stop offset="0.2372" stop-color="#e2b79c"/><stop offset="0.2794" stop-color="#eddebb"/><stop offset="0.3146" stop-color="#f1ebc7"/><stop offset="0.4195" stop-color="#f2f0cc"/><stop offset="0.6067" stop-color="#f2f0cc"/></linearGradient><linearGradient id="g28" gradientUnits="userSpaceOnUse" x1="749.0" y1="0" x2="1769.2" y2="0"><stop offset="0.0000" stop-color="#dfac94"/><stop offset="0.2107" stop-color="#e0af96"/><stop offset="0.2382" stop-color="#e3ba9e"/><stop offset="0.2803" stop-color="#eddfbc"/><stop offset="0.3166" stop-color="#f1ebc8"/><stop offset="0.4352" stop-color="#f2f0cc"/><stop offset="0.6067" stop-color="#f2f0cc"/></linearGradient><linearGradient id="g29" gradientUnits="userSpaceOnUse" x1="749.0" y1="0" x2="1769.2" y2="0"><stop offset="0.0000" stop-color="#dfaf95"/><stop offset="0.2088" stop-color="#e0b197"/><stop offset="0.2372" stop-color="#e3bc9f"/><stop offset="0.2813" stop-color="#ede0bd"/><stop offset="0.3195" stop-color="#f1ecc8"/><stop offset="0.4627" stop-color="#f2f0cc"/><stop offset="0.6067" stop-color="#f2f0cc"/></linearGradient><linearGradient id="g30" gradientUnits="userSpaceOnUse" x1="749.0" y1="0" x2="1769.2" y2="0"><stop offset="0.0000" stop-color="#e0b197"/><stop offset="0.2078" stop-color="#e1b499"/><stop offset="0.2372" stop-color="#e3bea0"/><stop offset="0.2833" stop-color="#eee1be"/><stop offset="0.3244" stop-color="#f1edc9"/><stop offset="0.5381" stop-color="#f2f0cc"/><stop offset="0.6067" stop-color="#f2f0cc"/></linearGradient><linearGradient id="g31" gradientUnits="userSpaceOnUse" x1="749.0" y1="0" x2="1769.2" y2="0"><stop offset="0.0000" stop-color="#e1b398"/><stop offset="0.2078" stop-color="#e1b69a"/><stop offset="0.2382" stop-color="#e4c1a2"/><stop offset="0.2843" stop-color="#eee2bf"/><stop offset="0.3264" stop-color="#f1edc9"/><stop offset="0.5989" stop-color="#f2f0cc"/><stop offset="0.6067" stop-color="#f2f0cc"/></linearGradient><linearGradient id="g32" gradientUnits="userSpaceOnUse" x1="749.0" y1="0" x2="1769.2" y2="0"><stop offset="0.0000" stop-color="#e1b69a"/><stop offset="0.2088" stop-color="#e2b89c"/><stop offset="0.2392" stop-color="#e5c3a4"/><stop offset="0.2852" stop-color="#eee3c0"/><stop offset="0.3293" stop-color="#f1edca"/><stop offset="0.6067" stop-color="#f2f0cc"/></linearGradient><linearGradient id="g33" gradientUnits="userSpaceOnUse" x1="749.0" y1="0" x2="1769.2" y2="0"><stop offset="0.0000" stop-color="#e2b89c"/><stop offset="0.2088" stop-color="#e3bb9e"/><stop offset="0.2392" stop-color="#e5c5a6"/><stop offset="0.2872" stop-color="#eee4c1"/><stop offset="0.3352" stop-color="#f1eeca"/><stop offset="0.6067" stop-color="#f2f0cc"/></linearGradient><linearGradient id="g34" gradientUnits="userSpaceOnUse" x1="749.0" y1="0" x2="1769.2" y2="0"><stop offset="0.0000" stop-color="#e3ba9e"/><stop offset="0.2088" stop-color="#e3bda0"/><stop offset="0.2401" stop-color="#e6c8a8"/><stop offset="0.2892" stop-color="#efe5c2"/><stop offset="0.3401" stop-color="#f1eeca"/><stop offset="0.6067" stop-color="#f2f0cc"/></linearGradient><linearGradient id="g35" gradientUnits="userSpaceOnUse" x1="749.0" y1="0" x2="1769.2" y2="0"><stop offset="0.0000" stop-color="#e3bda0"/><stop offset="0.2098" stop-color="#e4c0a2"/><stop offset="0.2441" stop-color="#e7ccab"/><stop offset="0.2901" stop-color="#efe6c2"/><stop offset="0.3441" stop-color="#f2efcb"/><stop offset="0.6067" stop-color="#f2f0cc"/></linearGradient><linearGradient id="g36" gradientUnits="userSpaceOnUse" x1="749.0" y1="0" x2="1769.2" y2="0"><stop offset="0.0000" stop-color="#e4bfa1"/><stop offset="0.2098" stop-color="#e4c2a3"/><stop offset="0.2470" stop-color="#e8cfae"/><stop offset="0.2911" stop-color="#efe6c3"/><stop offset="0.3480" stop-color="#f2efcb"/><stop offset="0.6067" stop-color="#f2f0cc"/></linearGradient><linearGradient id="g37" gradientUnits="userSpaceOnUse" x1="749.0" y1="0" x2="1769.2" y2="0"><stop offset="0.0000" stop-color="#e4c1a3"/><stop offset="0.2098" stop-color="#e5c4a5"/><stop offset="0.2480" stop-color="#e9d1af"/><stop offset="0.2931" stop-color="#efe7c4"/><stop offset="0.3539" stop-color="#f2efcb"/><stop offset="0.6067" stop-color="#f2f0cc"/></linearGradient><linearGradient id="g38" gradientUnits="userSpaceOnUse" x1="749.0" y1="0" x2="1769.2" y2="0"><stop offset="0.0000" stop-color="#e5c4a5"/><stop offset="0.2107" stop-color="#e6c7a7"/><stop offset="0.2490" stop-color="#e9d2b1"/><stop offset="0.2950" stop-color="#f0e8c5"/><stop offset="0.3617" stop-color="#f2efcb"/><stop offset="0.6067" stop-color="#f2f0cc"/></linearGradient><linearGradient id="g39" gradientUnits="userSpaceOnUse" x1="749.0" y1="0" x2="1769.2" y2="0"><stop offset="0.0000" stop-color="#e6c6a7"/><stop offset="0.2127" stop-color="#e6c9a9"/><stop offset="0.2509" stop-color="#ead5b3"/><stop offset="0.2970" stop-color="#f0e9c5"/><stop offset="0.3695" stop-color="#f2f0cc"/><stop offset="0.6067" stop-color="#f2f0cc"/></linearGradient><linearGradient id="g40" gradientUnits="userSpaceOnUse" x1="749.0" y1="0" x2="1769.2" y2="0"><stop offset="0.0000" stop-color="#e6c9a8"/><stop offset="0.2156" stop-color="#e7cbab"/><stop offset="0.2558" stop-color="#ebd8b6"/><stop offset="0.3009" stop-color="#f0eac6"/><stop offset="0.3862" stop-color="#f2f0cc"/><stop offset="0.6067" stop-color="#f2f0cc"/></linearGradient><linearGradient id="g41" gradientUnits="userSpaceOnUse" x1="749.0" y1="0" x2="1769.2" y2="0"><stop offset="0.0000" stop-color="#e7cbaa"/><stop offset="0.2166" stop-color="#e8cdad"/><stop offset="0.2588" stop-color="#ecdbb8"/><stop offset="0.3048" stop-color="#f0ebc7"/><stop offset="0.4078" stop-color="#f2f0cc"/><stop offset="0.6067" stop-color="#f2f0cc"/></linearGradient><linearGradient id="g42" gradientUnits="userSpaceOnUse" x1="749.0" y1="0" x2="1769.2" y2="0"><stop offset="0.0000" stop-color="#e7ccac"/><stop offset="0.2176" stop-color="#e8cfae"/><stop offset="0.2627" stop-color="#ecddba"/><stop offset="0.3097" stop-color="#f1ecc8"/><stop offset="0.4450" stop-color="#f2f0cc"/><stop offset="0.6067" stop-color="#f2f0cc"/></linearGradient><linearGradient id="g43" gradientUnits="userSpaceOnUse" x1="749.0" y1="0" x2="1769.2" y2="0"><stop offset="0.0000" stop-color="#e8ceae"/><stop offset="0.2186" stop-color="#e9d1b0"/><stop offset="0.2676" stop-color="#ede0bd"/><stop offset="0.3166" stop-color="#f1edc9"/><stop offset="0.5509" stop-color="#f2f0cc"/><stop offset="0.6067" stop-color="#f2f0cc"/></linearGradient><linearGradient id="g44" gradientUnits="userSpaceOnUse" x1="749.0" y1="0" x2="1769.2" y2="0"><stop offset="0.0000" stop-color="#e9d0af"/><stop offset="0.2196" stop-color="#e9d3b2"/><stop offset="0.2725" stop-color="#eee3bf"/><stop offset="0.3244" stop-color="#f1eeca"/><stop offset="0.6067" stop-color="#f2f0cc"/></linearGradient><linearGradient id="g45" gradientUnits="userSpaceOnUse" x1="749.0" y1="0" x2="1769.2" y2="0"><stop offset="0.0000" stop-color="#e9d2b1"/><stop offset="0.2205" stop-color="#ead5b3"/><stop offset="0.2764" stop-color="#efe5c1"/><stop offset="0.3323" stop-color="#f2eeca"/><stop offset="0.6067" stop-color="#f2f0cc"/></linearGradient><linearGradient id="g46" gradientUnits="userSpaceOnUse" x1="749.0" y1="0" x2="1769.2" y2="0"><stop offset="0.0000" stop-color="#ead4b3"/><stop offset="0.2215" stop-color="#ebd7b5"/><stop offset="0.2852" stop-color="#efe8c4"/><stop offset="0.3519" stop-color="#f2efcb"/><stop offset="0.6067" stop-color="#f2f0cc"/></linearGradient><linearGradient id="g47" gradientUnits="userSpaceOnUse" x1="749.0" y1="0" x2="1769.2" y2="0"><stop offset="0.0000" stop-color="#ead6b4"/><stop offset="0.2235" stop-color="#ebd9b7"/><stop offset="0.3205" stop-color="#f1eeca"/><stop offset="0.6067" stop-color="#f2f0cc"/></linearGradient><linearGradient id="g48" gradientUnits="userSpaceOnUse" x1="749.0" y1="0" x2="1769.2" y2="0"><stop offset="0.0000" stop-color="#ebd8b6"/><stop offset="0.2254" stop-color="#ecdbb8"/><stop offset="0.3244" stop-color="#f1eeca"/><stop offset="0.6067" stop-color="#f2f0cc"/></linearGradient><linearGradient id="g49" gradientUnits="userSpaceOnUse" x1="749.0" y1="0" x2="1769.2" y2="0"><stop offset="0.0000" stop-color="#ecdab8"/><stop offset="0.2274" stop-color="#ecddba"/><stop offset="0.3284" stop-color="#f2eeca"/><stop offset="0.6067" stop-color="#f2f0cc"/></linearGradient><linearGradient id="g50" gradientUnits="userSpaceOnUse" x1="749.0" y1="0" x2="1769.2" y2="0"><stop offset="0.0000" stop-color="#ecdcb9"/><stop offset="0.2303" stop-color="#eddfbc"/><stop offset="0.3333" stop-color="#f2efcb"/><stop offset="0.6067" stop-color="#f2f0cc"/></linearGradient><linearGradient id="g51" gradientUnits="userSpaceOnUse" x1="749.0" y1="0" x2="1769.2" y2="0"><stop offset="0.0000" stop-color="#eddebb"/><stop offset="0.2333" stop-color="#eee1be"/><stop offset="0.3391" stop-color="#f2efcb"/><stop offset="0.6067" stop-color="#f2f0cc"/></linearGradient><linearGradient id="g52" gradientUnits="userSpaceOnUse" x1="749.0" y1="0" x2="1769.2" y2="0"><stop offset="0.0000" stop-color="#4a4896"/><stop offset="0.2343" stop-color="#494793"/><stop offset="0.2470" stop-color="#48448d"/><stop offset="0.2490" stop-color="#464188"/><stop offset="0.2500" stop-color="#443d80"/><stop offset="0.2509" stop-color="#352247"/><stop offset="0.2519" stop-color="#351936"/><stop offset="0.2529" stop-color="#4e224a"/><stop offset="0.2539" stop-color="#65295a"/><stop offset="0.2549" stop-color="#7a2d64"/><stop offset="0.2558" stop-color="#8c3169"/><stop offset="0.2568" stop-color="#96366c"/><stop offset="0.2637" stop-color="#b75d7d"/><stop offset="0.2725" stop-color="#ca7e88"/><stop offset="0.2862" stop-color="#d7998a"/><stop offset="0.3107" stop-color="#e4c0a2"/><stop offset="0.3333" stop-color="#ead4b2"/><stop offset="0.3764" stop-color="#efe5c1"/><stop offset="0.4587" stop-color="#f1eeca"/><stop offset="0.6067" stop-color="#f2f0cc"/></linearGradient><linearGradient id="g53" gradientUnits="userSpaceOnUse" x1="749.0" y1="0" x2="1769.2" y2="0"><stop offset="0.0000" stop-color="#48448e"/><stop offset="0.2107" stop-color="#47438b"/><stop offset="0.2392" stop-color="#453f83"/><stop offset="0.2450" stop-color="#433b7b"/><stop offset="0.2480" stop-color="#40356e"/><stop offset="0.2490" stop-color="#3d3164"/><stop offset="0.2500" stop-color="#392a54"/><stop offset="0.2509" stop-color="#311b38"/><stop offset="0.2519" stop-color="#3b1b3a"/><stop offset="0.2529" stop-color="#52244e"/><stop offset="0.2539" stop-color="#68295b"/><stop offset="0.2549" stop-color="#7c2e64"/><stop offset="0.2558" stop-color="#8d3269"/><stop offset="0.2568" stop-color="#96376d"/><stop offset="0.2637" stop-color="#b75d7d"/><stop offset="0.2725" stop-color="#ca7e88"/><stop offset="0.2862" stop-color="#d7998a"/><stop offset="0.3107" stop-color="#e4c0a2"/><stop offset="0.3333" stop-color="#ead4b2"/><stop offset="0.3764" stop-color="#efe5c1"/><stop offset="0.4587" stop-color="#f1eeca"/><stop offset="0.6067" stop-color="#f2f0cc"/></linearGradient><linearGradient id="g54" gradientUnits="userSpaceOnUse" x1="749.0" y1="0" x2="1769.2" y2="0"><stop offset="0.0000" stop-color="#464086"/><stop offset="0.2009" stop-color="#453e83"/><stop offset="0.2333" stop-color="#423a79"/><stop offset="0.2421" stop-color="#40356e"/><stop offset="0.2460" stop-color="#3d3061"/><stop offset="0.2480" stop-color="#392953"/><stop offset="0.2490" stop-color="#362349"/><stop offset="0.2500" stop-color="#321c3b"/><stop offset="0.2509" stop-color="#341935"/><stop offset="0.2529" stop-color="#5a2653"/><stop offset="0.2539" stop-color="#6d2a5e"/><stop offset="0.2558" stop-color="#90326a"/><stop offset="0.2598" stop-color="#a64974"/><stop offset="0.2656" stop-color="#bc6680"/><stop offset="0.2745" stop-color="#cd8388"/><stop offset="0.2892" stop-color="#d99e8c"/><stop offset="0.3127" stop-color="#e5c3a4"/><stop offset="0.3391" stop-color="#ebd7b5"/><stop offset="0.3862" stop-color="#efe7c3"/><stop offset="0.4842" stop-color="#f2efcb"/><stop offset="0.6067" stop-color="#f2f0cc"/></linearGradient><linearGradient id="g55" gradientUnits="userSpaceOnUse" x1="749.0" y1="0" x2="1769.2" y2="0"><stop offset="0.0000" stop-color="#433c7e"/><stop offset="0.1941" stop-color="#433b7b"/><stop offset="0.2274" stop-color="#403670"/><stop offset="0.2392" stop-color="#3d3163"/><stop offset="0.2450" stop-color="#392952"/><stop offset="0.2480" stop-color="#331e3f"/><stop offset="0.2490" stop-color="#301a37"/><stop offset="0.2500" stop-color="#331935"/><stop offset="0.2509" stop-color="#3f1d3e"/><stop offset="0.2529" stop-color="#622858"/><stop offset="0.2539" stop-color="#732c62"/><stop offset="0.2558" stop-color="#93336b"/><stop offset="0.2637" stop-color="#b75e7e"/><stop offset="0.2725" stop-color="#cb7e88"/><stop offset="0.2862" stop-color="#d7998a"/><stop offset="0.3107" stop-color="#e4c0a2"/><stop offset="0.3333" stop-color="#ead4b2"/><stop offset="0.3764" stop-color="#efe5c1"/><stop offset="0.4587" stop-color="#f1eeca"/><stop offset="0.6067" stop-color="#f2f0cc"/></linearGradient><linearGradient id="g56" gradientUnits="userSpaceOnUse" x1="749.0" y1="0" x2="1769.2" y2="0"><stop offset="0.0000" stop-color="#413875"/><stop offset="0.1892" stop-color="#413772"/><stop offset="0.2235" stop-color="#3e3267"/><stop offset="0.2372" stop-color="#3b2c58"/><stop offset="0.2431" stop-color="#36244a"/><stop offset="0.2480" stop-color="#301832"/><stop offset="0.2490" stop-color="#351936"/><stop offset="0.2509" stop-color="#4c2249"/><stop offset="0.2539" stop-color="#7b2d64"/><stop offset="0.2558" stop-color="#95356c"/><stop offset="0.2637" stop-color="#b85e7e"/><stop offset="0.2725" stop-color="#cb7e88"/><stop offset="0.2862" stop-color="#d7998a"/><stop offset="0.3107" stop-color="#e4c0a2"/><stop offset="0.3333" stop-color="#ead4b2"/><stop offset="0.3764" stop-color="#efe5c1"/><stop offset="0.4587" stop-color="#f1eeca"/><stop offset="0.6067" stop-color="#f2f0cc"/></linearGradient><linearGradient id="g57" gradientUnits="userSpaceOnUse" x1="749.0" y1="0" x2="1769.2" y2="0"><stop offset="0.0000" stop-color="#3f346b"/><stop offset="0.1872" stop-color="#3e3368"/><stop offset="0.2205" stop-color="#3c2e5d"/><stop offset="0.2362" stop-color="#37264e"/><stop offset="0.2431" stop-color="#321c3c"/><stop offset="0.2460" stop-color="#301833"/><stop offset="0.2480" stop-color="#391a38"/><stop offset="0.2509" stop-color="#592652"/><stop offset="0.2529" stop-color="#742c62"/><stop offset="0.2549" stop-color="#8f326a"/><stop offset="0.2598" stop-color="#a84c76"/><stop offset="0.2656" stop-color="#bd6781"/><stop offset="0.2745" stop-color="#cd8388"/><stop offset="0.2892" stop-color="#d99e8c"/><stop offset="0.3127" stop-color="#e5c3a4"/><stop offset="0.3391" stop-color="#ebd7b5"/><stop offset="0.3862" stop-color="#efe7c4"/><stop offset="0.4842" stop-color="#f2efcb"/><stop offset="0.6067" stop-color="#f2f0cc"/></linearGradient><linearGradient id="g58" gradientUnits="userSpaceOnUse" x1="749.0" y1="0" x2="1769.2" y2="0"><stop offset="0.0000" stop-color="#3d3062"/><stop offset="0.1843" stop-color="#3c2f5f"/><stop offset="0.2205" stop-color="#392953"/><stop offset="0.2352" stop-color="#342044"/><stop offset="0.2431" stop-color="#2f1832"/><stop offset="0.2460" stop-color="#381a38"/><stop offset="0.2490" stop-color="#4f234b"/><stop offset="0.2529" stop-color="#7d2e65"/><stop offset="0.2549" stop-color="#94346b"/><stop offset="0.2637" stop-color="#b8607e"/><stop offset="0.2725" stop-color="#cb7f88"/><stop offset="0.2892" stop-color="#d99f8c"/><stop offset="0.3127" stop-color="#e5c3a4"/><stop offset="0.3391" stop-color="#ebd7b5"/><stop offset="0.3862" stop-color="#efe7c4"/><stop offset="0.4852" stop-color="#f2efcb"/><stop offset="0.6067" stop-color="#f2f0cc"/></linearGradient><linearGradient id="g59" gradientUnits="userSpaceOnUse" x1="749.0" y1="0" x2="1769.2" y2="0"><stop offset="0.0000" stop-color="#3b2c59"/><stop offset="0.1853" stop-color="#3a2b56"/><stop offset="0.2186" stop-color="#37254b"/><stop offset="0.2343" stop-color="#321c3b"/><stop offset="0.2401" stop-color="#301833"/><stop offset="0.2441" stop-color="#391b39"/><stop offset="0.2480" stop-color="#52244e"/><stop offset="0.2519" stop-color="#7a2d64"/><stop offset="0.2539" stop-color="#91326a"/><stop offset="0.2637" stop-color="#b9617f"/><stop offset="0.2735" stop-color="#cc8188"/><stop offset="0.2892" stop-color="#d99f8c"/><stop offset="0.3127" stop-color="#e5c3a4"/><stop offset="0.3391" stop-color="#ebd7b5"/><stop offset="0.3862" stop-color="#efe7c4"/><stop offset="0.4852" stop-color="#f2efcb"/><stop offset="0.6067" stop-color="#f2f0cc"/></linearGradient><linearGradient id="g60" gradientUnits="userSpaceOnUse" x1="749.0" y1="0" x2="1769.2" y2="0"><stop offset="0.0000" stop-color="#382851"/><stop offset="0.1843" stop-color="#37264e"/><stop offset="0.2176" stop-color="#342043"/><stop offset="0.2362" stop-color="#301833"/><stop offset="0.2421" stop-color="#3c1c3c"/><stop offset="0.2470" stop-color="#572551"/><stop offset="0.2519" stop-color="#832f66"/><stop offset="0.2539" stop-color="#95356c"/><stop offset="0.2637" stop-color="#ba627f"/><stop offset="0.2735" stop-color="#cc8288"/><stop offset="0.2892" stop-color="#d99f8c"/><stop offset="0.3127" stop-color="#e5c3a4"/><stop offset="0.3391" stop-color="#ebd7b5"/><stop offset="0.3862" stop-color="#efe7c4"/><stop offset="0.4852" stop-color="#f2efcb"/><stop offset="0.6067" stop-color="#f2f0cc"/></linearGradient><linearGradient id="g61" gradientUnits="userSpaceOnUse" x1="749.0" y1="0" x2="1769.2" y2="0"><stop offset="0.0000" stop-color="#362349"/><stop offset="0.1823" stop-color="#352246"/><stop offset="0.2176" stop-color="#311b3a"/><stop offset="0.2303" stop-color="#301833"/><stop offset="0.2382" stop-color="#3a1b3a"/><stop offset="0.2441" stop-color="#50234c"/><stop offset="0.2490" stop-color="#712b61"/><stop offset="0.2529" stop-color="#94346b"/><stop offset="0.2637" stop-color="#ba637f"/><stop offset="0.2735" stop-color="#cc8288"/><stop offset="0.2892" stop-color="#da9f8c"/><stop offset="0.3127" stop-color="#e5c3a4"/><stop offset="0.3391" stop-color="#ebd7b5"/><stop offset="0.3862" stop-color="#efe7c4"/><stop offset="0.4852" stop-color="#f2efcb"/><stop offset="0.6067" stop-color="#f2f0cc"/></linearGradient><linearGradient id="g62" gradientUnits="userSpaceOnUse" x1="749.0" y1="0" x2="1769.2" y2="0"><stop offset="0.0000" stop-color="#331f41"/><stop offset="0.1813" stop-color="#331d3e"/><stop offset="0.2196" stop-color="#2f1832"/><stop offset="0.2333" stop-color="#391a39"/><stop offset="0.2411" stop-color="#4e224a"/><stop offset="0.2460" stop-color="#67295a"/><stop offset="0.2509" stop-color="#8c3169"/><stop offset="0.2519" stop-color="#93346b"/><stop offset="0.2637" stop-color="#bb6480"/><stop offset="0.2735" stop-color="#cd8388"/><stop offset="0.2892" stop-color="#da9f8c"/><stop offset="0.3127" stop-color="#e5c3a5"/><stop offset="0.3401" stop-color="#ebd8b6"/><stop offset="0.3882" stop-color="#efe8c4"/><stop offset="0.4921" stop-color="#f2efcb"/><stop offset="0.6067" stop-color="#f2f0cc"/></linearGradient><linearGradient id="g63" gradientUnits="userSpaceOnUse" x1="749.0" y1="0" x2="1769.2" y2="0"><stop offset="0.0000" stop-color="#311b3a"/><stop offset="0.1872" stop-color="#301a37"/><stop offset="0.2127" stop-color="#311833"/><stop offset="0.2284" stop-color="#3a1b3a"/><stop offset="0.2382" stop-color="#4e234b"/><stop offset="0.2441" stop-color="#66295a"/><stop offset="0.2500" stop-color="#8d3269"/><stop offset="0.2509" stop-color="#93346b"/><stop offset="0.2588" stop-color="#ad5278"/><stop offset="0.2656" stop-color="#c06c82"/><stop offset="0.2754" stop-color="#cf8789"/><stop offset="0.2892" stop-color="#daa08d"/><stop offset="0.3127" stop-color="#e5c4a5"/><stop offset="0.3401" stop-color="#ebd8b6"/><stop offset="0.3882" stop-color="#efe8c4"/><stop offset="0.4921" stop-color="#f2efcb"/><stop offset="0.6067" stop-color="#f2f0cc"/></linearGradient><linearGradient id="g64" gradientUnits="userSpaceOnUse" x1="749.0" y1="0" x2="1769.2" y2="0"><stop offset="0.0000" stop-color="#2f1934"/><stop offset="0.1941" stop-color="#311833"/><stop offset="0.2205" stop-color="#3a1b3a"/><stop offset="0.2333" stop-color="#4c2248"/><stop offset="0.2401" stop-color="#5f2756"/><stop offset="0.2460" stop-color="#7b2e64"/><stop offset="0.2500" stop-color="#94346b"/><stop offset="0.2568" stop-color="#a94c76"/><stop offset="0.2647" stop-color="#bf6a81"/><stop offset="0.2745" stop-color="#ce8688"/><stop offset="0.2892" stop-color="#daa08d"/><stop offset="0.3127" stop-color="#e5c4a5"/><stop offset="0.3401" stop-color="#ebd8b6"/><stop offset="0.3882" stop-color="#efe8c4"/><stop offset="0.4921" stop-color="#f2efcb"/><stop offset="0.6067" stop-color="#f2f0cc"/></linearGradient><linearGradient id="g65" gradientUnits="userSpaceOnUse" x1="749.0" y1="0" x2="1769.2" y2="0"><stop offset="0.0000" stop-color="#321934"/><stop offset="0.1902" stop-color="#351936"/><stop offset="0.2127" stop-color="#3c1c3c"/><stop offset="0.2294" stop-color="#4e224a"/><stop offset="0.2382" stop-color="#622858"/><stop offset="0.2450" stop-color="#7f2f65"/><stop offset="0.2490" stop-color="#94356c"/><stop offset="0.2558" stop-color="#a84b75"/><stop offset="0.2637" stop-color="#bd6881"/><stop offset="0.2745" stop-color="#ce8689"/><stop offset="0.2882" stop-color="#d99e8c"/><stop offset="0.3117" stop-color="#e5c3a4"/><stop offset="0.3382" stop-color="#ebd7b5"/><stop offset="0.3852" stop-color="#efe7c4"/><stop offset="0.4842" stop-color="#f2efcb"/><stop offset="0.6067" stop-color="#f2f0cc"/></linearGradient><linearGradient id="g66" gradientUnits="userSpaceOnUse" x1="749.0" y1="0" x2="1769.2" y2="0"><stop offset="0.0000" stop-color="#371a37"/><stop offset="0.1833" stop-color="#3a1b39"/><stop offset="0.2137" stop-color="#451f43"/><stop offset="0.2294" stop-color="#572551"/><stop offset="0.2382" stop-color="#6c2a5d"/><stop offset="0.2450" stop-color="#893168"/><stop offset="0.2470" stop-color="#93336b"/><stop offset="0.2539" stop-color="#a44773"/><stop offset="0.2637" stop-color="#be6a81"/><stop offset="0.2745" stop-color="#cf8789"/><stop offset="0.2882" stop-color="#d99f8c"/><stop offset="0.3117" stop-color="#e5c3a4"/><stop offset="0.3382" stop-color="#ebd7b5"/><stop offset="0.3852" stop-color="#efe7c4"/><stop offset="0.4852" stop-color="#f2efcb"/><stop offset="0.6067" stop-color="#f2f0cc"/></linearGradient><linearGradient id="g67" gradientUnits="userSpaceOnUse" x1="749.0" y1="0" x2="1769.2" y2="0"><stop offset="0.0000" stop-color="#3e1c3d"/><stop offset="0.1784" stop-color="#411d3f"/><stop offset="0.2107" stop-color="#4c2148"/><stop offset="0.2264" stop-color="#5b2654"/><stop offset="0.2362" stop-color="#702b60"/><stop offset="0.2441" stop-color="#8d3269"/><stop offset="0.2480" stop-color="#98396d"/><stop offset="0.2558" stop-color="#ac5178"/><stop offset="0.2647" stop-color="#c16e83"/><stop offset="0.2754" stop-color="#d08989"/><stop offset="0.2882" stop-color="#da9f8c"/><stop offset="0.3117" stop-color="#e5c3a5"/><stop offset="0.3382" stop-color="#ebd8b5"/><stop offset="0.3852" stop-color="#efe7c4"/><stop offset="0.4852" stop-color="#f2efcb"/><stop offset="0.6067" stop-color="#f2f0cc"/></linearGradient><linearGradient id="g68" gradientUnits="userSpaceOnUse" x1="749.0" y1="0" x2="1769.2" y2="0"><stop offset="0.0000" stop-color="#461f43"/><stop offset="0.1774" stop-color="#492046"/><stop offset="0.2107" stop-color="#54254f"/><stop offset="0.2274" stop-color="#66295a"/><stop offset="0.2372" stop-color="#7c2e64"/><stop offset="0.2441" stop-color="#94346b"/><stop offset="0.2519" stop-color="#a44773"/><stop offset="0.2627" stop-color="#bf6a81"/><stop offset="0.2735" stop-color="#ce8689"/><stop offset="0.2882" stop-color="#daa08d"/><stop offset="0.3117" stop-color="#e5c4a5"/><stop offset="0.3391" stop-color="#ebd8b6"/><stop offset="0.3872" stop-color="#efe8c4"/><stop offset="0.4911" stop-color="#f2efcb"/><stop offset="0.6067" stop-color="#f2f0cc"/></linearGradient><linearGradient id="g69" gradientUnits="userSpaceOnUse" x1="749.0" y1="0" x2="1769.2" y2="0"><stop offset="0.0000" stop-color="#4d224a"/><stop offset="0.1774" stop-color="#51234c"/><stop offset="0.2088" stop-color="#5b2654"/><stop offset="0.2254" stop-color="#6c2a5d"/><stop offset="0.2362" stop-color="#822f66"/><stop offset="0.2421" stop-color="#94346c"/><stop offset="0.2500" stop-color="#a24472"/><stop offset="0.2627" stop-color="#c06c82"/><stop offset="0.2745" stop-color="#d08989"/><stop offset="0.2872" stop-color="#d99e8c"/><stop offset="0.3107" stop-color="#e5c3a4"/><stop offset="0.3372" stop-color="#ebd7b5"/><stop offset="0.3833" stop-color="#efe7c3"/><stop offset="0.4803" stop-color="#f2efcb"/><stop offset="0.6067" stop-color="#f2f0cc"/></linearGradient><linearGradient id="g70" gradientUnits="userSpaceOnUse" x1="749.0" y1="0" x2="1769.2" y2="0"><stop offset="0.0000" stop-color="#552550"/><stop offset="0.1755" stop-color="#582652"/><stop offset="0.2078" stop-color="#632858"/><stop offset="0.2254" stop-color="#752c62"/><stop offset="0.2362" stop-color="#8b3169"/><stop offset="0.2411" stop-color="#96366c"/><stop offset="0.2500" stop-color="#a54874"/><stop offset="0.2627" stop-color="#c16e83"/><stop offset="0.2745" stop-color="#d08a89"/><stop offset="0.2872" stop-color="#da9f8c"/><stop offset="0.3107" stop-color="#e5c3a4"/><stop offset="0.3372" stop-color="#ebd8b5"/><stop offset="0.3842" stop-color="#efe7c4"/><stop offset="0.4842" stop-color="#f2efcb"/><stop offset="0.6067" stop-color="#f2f0cc"/></linearGradient><linearGradient id="g71" gradientUnits="userSpaceOnUse" x1="749.0" y1="0" x2="1769.2" y2="0"><stop offset="0.0000" stop-color="#5e2755"/><stop offset="0.1755" stop-color="#612857"/><stop offset="0.2078" stop-color="#6c2a5d"/><stop offset="0.2254" stop-color="#7d2e65"/><stop offset="0.2382" stop-color="#95366c"/><stop offset="0.2480" stop-color="#a44773"/><stop offset="0.2627" stop-color="#c26f83"/><stop offset="0.2745" stop-color="#d08a89"/><stop offset="0.2872" stop-color="#daa08d"/><stop offset="0.3107" stop-color="#e5c4a5"/><stop offset="0.3382" stop-color="#ebd8b6"/><stop offset="0.3862" stop-color="#efe8c4"/><stop offset="0.4901" stop-color="#f2efcb"/><stop offset="0.6067" stop-color="#f2f0cc"/></linearGradient><linearGradient id="g72" gradientUnits="userSpaceOnUse" x1="749.0" y1="0" x2="1769.2" y2="0"><stop offset="0.0000" stop-color="#66295a"/><stop offset="0.1745" stop-color="#692a5c"/><stop offset="0.2078" stop-color="#742c62"/><stop offset="0.2254" stop-color="#863067"/><stop offset="0.2352" stop-color="#95366c"/><stop offset="0.2460" stop-color="#a34673"/><stop offset="0.2627" stop-color="#c37184"/><stop offset="0.2754" stop-color="#d18d89"/><stop offset="0.2862" stop-color="#d99e8c"/><stop offset="0.3107" stop-color="#e5c4a5"/><stop offset="0.3382" stop-color="#ebd8b6"/><stop offset="0.3862" stop-color="#f0e8c4"/><stop offset="0.4911" stop-color="#f2efcb"/><stop offset="0.6067" stop-color="#f2f0cc"/></linearGradient><linearGradient id="g73" gradientUnits="userSpaceOnUse" x1="749.0" y1="0" x2="1769.2" y2="0"><stop offset="0.0000" stop-color="#6f2b5f"/><stop offset="0.1745" stop-color="#722b61"/><stop offset="0.2068" stop-color="#7c2e64"/><stop offset="0.2245" stop-color="#8d3269"/><stop offset="0.2401" stop-color="#9d3e70"/><stop offset="0.2549" stop-color="#b85f7e"/><stop offset="0.2715" stop-color="#cf8789"/><stop offset="0.2862" stop-color="#da9f8c"/><stop offset="0.3107" stop-color="#e5c4a5"/><stop offset="0.3391" stop-color="#ebd9b7"/><stop offset="0.3882" stop-color="#f0e8c5"/><stop offset="0.4979" stop-color="#f2efcb"/><stop offset="0.6067" stop-color="#f2f0cc"/></linearGradient><linearGradient id="g74" gradientUnits="userSpaceOnUse" x1="749.0" y1="0" x2="1769.2" y2="0"><stop offset="0.0000" stop-color="#772d63"/><stop offset="0.1745" stop-color="#7a2d64"/><stop offset="0.2068" stop-color="#853067"/><stop offset="0.2294" stop-color="#97376d"/><stop offset="0.2421" stop-color="#a44673"/><stop offset="0.2666" stop-color="#cb7e88"/><stop offset="0.2852" stop-color="#d99e8c"/><stop offset="0.3097" stop-color="#e5c4a5"/><stop offset="0.3372" stop-color="#ebd8b6"/><stop offset="0.3842" stop-color="#efe7c4"/><stop offset="0.4872" stop-color="#f2efcb"/><stop offset="0.6067" stop-color="#f2f0cc"/></linearGradient><linearGradient id="g75" gradientUnits="userSpaceOnUse" x1="749.0" y1="0" x2="1769.2" y2="0"><stop offset="0.0000" stop-color="#7f2f65"/><stop offset="0.1735" stop-color="#822f66"/><stop offset="0.2068" stop-color="#8d3269"/><stop offset="0.2303" stop-color="#9b3b6e"/><stop offset="0.2431" stop-color="#a84b75"/><stop offset="0.2676" stop-color="#cc8288"/><stop offset="0.2852" stop-color="#da9f8c"/><stop offset="0.3097" stop-color="#e5c4a5"/><stop offset="0.3372" stop-color="#ebd8b6"/><stop offset="0.3852" stop-color="#f0e8c4"/><stop offset="0.4911" stop-color="#f2efcb"/><stop offset="0.6067" stop-color="#f2f0cc"/></linearGradient><linearGradient id="g76" gradientUnits="userSpaceOnUse" x1="749.0" y1="0" x2="1769.2" y2="0"><stop offset="0.0000" stop-color="#883068"/><stop offset="0.1735" stop-color="#8b3169"/><stop offset="0.2156" stop-color="#96376d"/><stop offset="0.2343" stop-color="#a14272"/><stop offset="0.2500" stop-color="#b65d7d"/><stop offset="0.2696" stop-color="#cf8789"/><stop offset="0.2843" stop-color="#d99e8c"/><stop offset="0.3088" stop-color="#e5c3a5"/><stop offset="0.3352" stop-color="#ebd8b5"/><stop offset="0.3823" stop-color="#efe7c4"/><stop offset="0.4832" stop-color="#f2efcb"/><stop offset="0.6067" stop-color="#f2f0cc"/></linearGradient><linearGradient id="g77" gradientUnits="userSpaceOnUse" x1="749.0" y1="0" x2="1769.2" y2="0"><stop offset="0.0000" stop-color="#90326a"/><stop offset="0.1784" stop-color="#93336b"/><stop offset="0.2205" stop-color="#9b3c6f"/><stop offset="0.2362" stop-color="#a64974"/><stop offset="0.2529" stop-color="#bc6680"/><stop offset="0.2696" stop-color="#cf8889"/><stop offset="0.2843" stop-color="#da9f8c"/><stop offset="0.3097" stop-color="#e5c5a6"/><stop offset="0.3391" stop-color="#ebdab7"/><stop offset="0.3891" stop-color="#f0e9c5"/><stop offset="0.5048" stop-color="#f2efcb"/><stop offset="0.6067" stop-color="#f2f0cc"/></linearGradient><linearGradient id="g78" gradientUnits="userSpaceOnUse" x1="749.0" y1="0" x2="1769.2" y2="0"><stop offset="0.0000" stop-color="#95356c"/><stop offset="0.1931" stop-color="#98386d"/><stop offset="0.2245" stop-color="#a04271"/><stop offset="0.2421" stop-color="#b0557a"/><stop offset="0.2676" stop-color="#ce8688"/><stop offset="0.2833" stop-color="#d99e8c"/><stop offset="0.3088" stop-color="#e5c4a5"/><stop offset="0.3372" stop-color="#ebd9b7"/><stop offset="0.3862" stop-color="#f0e8c5"/><stop offset="0.4970" stop-color="#f2efcb"/><stop offset="0.6067" stop-color="#f2f0cc"/></linearGradient><linearGradient id="g79" gradientUnits="userSpaceOnUse" x1="749.0" y1="0" x2="1769.2" y2="0"><stop offset="0.0000" stop-color="#98386d"/><stop offset="0.1931" stop-color="#9b3b6e"/><stop offset="0.2215" stop-color="#a24472"/><stop offset="0.2401" stop-color="#b1567a"/><stop offset="0.2676" stop-color="#cf8789"/><stop offset="0.2833" stop-color="#da9f8c"/><stop offset="0.3088" stop-color="#e5c5a6"/><stop offset="0.3382" stop-color="#ebdab7"/><stop offset="0.3882" stop-color="#f0e9c5"/><stop offset="0.5038" stop-color="#f2efcb"/><stop offset="0.6067" stop-color="#f2f0cc"/></linearGradient><linearGradient id="g80" gradientUnits="userSpaceOnUse" x1="749.0" y1="0" x2="1769.2" y2="0"><stop offset="0.0000" stop-color="#9b3c6f"/><stop offset="0.1931" stop-color="#9e3f70"/><stop offset="0.2235" stop-color="#a74a75"/><stop offset="0.2421" stop-color="#b65d7d"/><stop offset="0.2666" stop-color="#cf8789"/><stop offset="0.2823" stop-color="#d99f8c"/><stop offset="0.3088" stop-color="#e5c6a6"/><stop offset="0.3391" stop-color="#ecdbb8"/><stop offset="0.3901" stop-color="#f0e9c5"/><stop offset="0.5126" stop-color="#f2f0cc"/><stop offset="0.6067" stop-color="#f2f0cc"/></linearGradient><linearGradient id="g81" gradientUnits="userSpaceOnUse" x1="749.0" y1="0" x2="1769.2" y2="0"><stop offset="0.0000" stop-color="#9e3f70"/><stop offset="0.1872" stop-color="#a04271"/><stop offset="0.2215" stop-color="#a94d76"/><stop offset="0.2411" stop-color="#b85f7e"/><stop offset="0.2666" stop-color="#cf8989"/><stop offset="0.2813" stop-color="#d99e8c"/><stop offset="0.3078" stop-color="#e5c5a6"/><stop offset="0.3372" stop-color="#ebdab7"/><stop offset="0.3872" stop-color="#f0e9c5"/><stop offset="0.5038" stop-color="#f2efcb"/><stop offset="0.6067" stop-color="#f2f0cc"/></linearGradient><linearGradient id="g82" gradientUnits="userSpaceOnUse" x1="749.0" y1="0" x2="1769.2" y2="0"><stop offset="0.0000" stop-color="#a14372"/><stop offset="0.1872" stop-color="#a44673"/><stop offset="0.2215" stop-color="#ac5178"/><stop offset="0.2421" stop-color="#bb647f"/><stop offset="0.2666" stop-color="#d08a89"/><stop offset="0.2813" stop-color="#da9f8c"/><stop offset="0.3078" stop-color="#e5c6a6"/><stop offset="0.3382" stop-color="#ecdbb8"/><stop offset="0.3891" stop-color="#f0e9c5"/><stop offset="0.5117" stop-color="#f2f0cc"/><stop offset="0.6067" stop-color="#f2f0cc"/></linearGradient><linearGradient id="g83" gradientUnits="userSpaceOnUse" x1="749.0" y1="0" x2="1769.2" y2="0"><stop offset="0.0000" stop-color="#a54874"/><stop offset="0.1872" stop-color="#a74a75"/><stop offset="0.2225" stop-color="#b0567a"/><stop offset="0.2431" stop-color="#be6981"/><stop offset="0.2656" stop-color="#d08a89"/><stop offset="0.2803" stop-color="#d99f8c"/><stop offset="0.3078" stop-color="#e6c6a7"/><stop offset="0.3391" stop-color="#ecdbb8"/><stop offset="0.3911" stop-color="#f0e9c6"/><stop offset="0.5205" stop-color="#f2f0cc"/><stop offset="0.6067" stop-color="#f2f0cc"/></linearGradient><linearGradient id="g84" gradientUnits="userSpaceOnUse" x1="749.0" y1="0" x2="1769.2" y2="0"><stop offset="0.0000" stop-color="#a84c76"/><stop offset="0.1882" stop-color="#ab4f77"/><stop offset="0.2225" stop-color="#b45a7c"/><stop offset="0.2441" stop-color="#c06d82"/><stop offset="0.2676" stop-color="#d28f89"/><stop offset="0.2794" stop-color="#d99f8c"/><stop offset="0.3068" stop-color="#e6c6a7"/><stop offset="0.3372" stop-color="#ecdbb8"/><stop offset="0.3882" stop-color="#f0e9c5"/><stop offset="0.5117" stop-color="#f2f0cc"/><stop offset="0.6067" stop-color="#f2f0cc"/></linearGradient><linearGradient id="g85" gradientUnits="userSpaceOnUse" x1="749.0" y1="0" x2="1769.2" y2="0"><stop offset="0.0000" stop-color="#ac5078"/><stop offset="0.1882" stop-color="#ae5379"/><stop offset="0.2235" stop-color="#b75e7e"/><stop offset="0.2460" stop-color="#c47384"/><stop offset="0.2735" stop-color="#d6978a"/><stop offset="0.2901" stop-color="#e0b196"/><stop offset="0.3117" stop-color="#e7cbab"/><stop offset="0.3470" stop-color="#eddfbc"/><stop offset="0.4068" stop-color="#f1ebc8"/><stop offset="0.6038" stop-color="#f2f0cc"/><stop offset="0.6067" stop-color="#f2f0cc"/></linearGradient><linearGradient id="g86" gradientUnits="userSpaceOnUse" x1="749.0" y1="0" x2="1769.2" y2="0"><stop offset="0.0000" stop-color="#af5579"/><stop offset="0.1882" stop-color="#b2587b"/><stop offset="0.2235" stop-color="#ba627f"/><stop offset="0.2470" stop-color="#c67786"/><stop offset="0.2774" stop-color="#d99e8c"/><stop offset="0.3058" stop-color="#e6c6a7"/><stop offset="0.3372" stop-color="#ecdbb8"/><stop offset="0.3891" stop-color="#f0e9c6"/><stop offset="0.5185" stop-color="#f2f0cc"/><stop offset="0.6067" stop-color="#f2f0cc"/></linearGradient><linearGradient id="g87" gradientUnits="userSpaceOnUse" x1="749.0" y1="0" x2="1769.2" y2="0"><stop offset="0.0000" stop-color="#b3597b"/><stop offset="0.1892" stop-color="#b65c7d"/><stop offset="0.2245" stop-color="#bd6780"/><stop offset="0.2480" stop-color="#c97c87"/><stop offset="0.2764" stop-color="#d99e8c"/><stop offset="0.3058" stop-color="#e6c7a7"/><stop offset="0.3382" stop-color="#ecdcb9"/><stop offset="0.3911" stop-color="#f0eac6"/><stop offset="0.5283" stop-color="#f2f0cc"/><stop offset="0.6067" stop-color="#f2f0cc"/></linearGradient><linearGradient id="g88" gradientUnits="userSpaceOnUse" x1="749.0" y1="0" x2="1769.2" y2="0"><stop offset="0.0000" stop-color="#b75d7d"/><stop offset="0.1892" stop-color="#b9607e"/><stop offset="0.2254" stop-color="#bf6c82"/><stop offset="0.2529" stop-color="#cd8488"/><stop offset="0.2754" stop-color="#d99e8c"/><stop offset="0.3058" stop-color="#e6c8a8"/><stop offset="0.3391" stop-color="#ecddba"/><stop offset="0.3940" stop-color="#f0eac7"/><stop offset="0.5440" stop-color="#f2f0cc"/><stop offset="0.6067" stop-color="#f2f0cc"/></linearGradient><linearGradient id="g89" gradientUnits="userSpaceOnUse" x1="749.0" y1="0" x2="1769.2" y2="0"><stop offset="0.0000" stop-color="#b9627f"/><stop offset="0.1892" stop-color="#bb6580"/><stop offset="0.2254" stop-color="#c26f83"/><stop offset="0.2568" stop-color="#d08a89"/><stop offset="0.2745" stop-color="#d99e8c"/><stop offset="0.3048" stop-color="#e6c8a8"/><stop offset="0.3382" stop-color="#ecddba"/><stop offset="0.3931" stop-color="#f0eac6"/><stop offset="0.5421" stop-color="#f2f0cc"/><stop offset="0.6067" stop-color="#f2f0cc"/></linearGradient><linearGradient id="g90" gradientUnits="userSpaceOnUse" x1="749.0" y1="0" x2="1769.2" y2="0"><stop offset="0.0000" stop-color="#bc6680"/><stop offset="0.1902" stop-color="#be6981"/><stop offset="0.2264" stop-color="#c47485"/><stop offset="0.2617" stop-color="#d39189"/><stop offset="0.2745" stop-color="#daa08d"/><stop offset="0.3048" stop-color="#e6c9a8"/><stop offset="0.3391" stop-color="#ecddba"/><stop offset="0.3950" stop-color="#f0ebc7"/><stop offset="0.5548" stop-color="#f2f0cc"/><stop offset="0.6067" stop-color="#f2f0cc"/></linearGradient><linearGradient id="g91" gradientUnits="userSpaceOnUse" x1="749.0" y1="0" x2="1769.2" y2="0"><stop offset="0.0000" stop-color="#bf6a81"/><stop offset="0.1902" stop-color="#c06d82"/><stop offset="0.2274" stop-color="#c77886"/><stop offset="0.2627" stop-color="#d59489"/><stop offset="0.2735" stop-color="#daa08d"/><stop offset="0.3048" stop-color="#e6c9a9"/><stop offset="0.3391" stop-color="#eddebb"/><stop offset="0.3960" stop-color="#f0ebc7"/><stop offset="0.5626" stop-color="#f2f0cc"/><stop offset="0.6067" stop-color="#f2f0cc"/></linearGradient><linearGradient id="g92" gradientUnits="userSpaceOnUse" x1="749.0" y1="0" x2="1769.2" y2="0"><stop offset="0.0000" stop-color="#c16f83"/><stop offset="0.1911" stop-color="#c37284"/><stop offset="0.2284" stop-color="#ca7d87"/><stop offset="0.2627" stop-color="#d5968a"/><stop offset="0.2735" stop-color="#dba28e"/><stop offset="0.3048" stop-color="#e7caaa"/><stop offset="0.3401" stop-color="#eddfbb"/><stop offset="0.3989" stop-color="#f1ebc7"/><stop offset="0.5842" stop-color="#f2f0cc"/><stop offset="0.6067" stop-color="#f2f0cc"/></linearGradient><linearGradient id="g93" gradientUnits="userSpaceOnUse" x1="749.0" y1="0" x2="1769.2" y2="0"><stop offset="0.0000" stop-color="#c47384"/><stop offset="0.1921" stop-color="#c67685"/><stop offset="0.2323" stop-color="#cd8288"/><stop offset="0.2666" stop-color="#d89b8a"/><stop offset="0.3029" stop-color="#e6c9a9"/><stop offset="0.3372" stop-color="#eddebb"/><stop offset="0.3940" stop-color="#f0ebc7"/><stop offset="0.5607" stop-color="#f2f0cc"/><stop offset="0.6067" stop-color="#f2f0cc"/></linearGradient><linearGradient id="g94" gradientUnits="userSpaceOnUse" x1="749.0" y1="0" x2="1769.2" y2="0"><stop offset="0.0000" stop-color="#c67786"/><stop offset="0.1921" stop-color="#c87a87"/><stop offset="0.2362" stop-color="#cf8789"/><stop offset="0.2666" stop-color="#d99d8b"/><stop offset="0.3029" stop-color="#e7caaa"/><stop offset="0.3382" stop-color="#eddebb"/><stop offset="0.3960" stop-color="#f1ebc7"/><stop offset="0.5754" stop-color="#f2f0cc"/><stop offset="0.6067" stop-color="#f2f0cc"/></linearGradient><linearGradient id="g95" gradientUnits="userSpaceOnUse" x1="749.0" y1="0" x2="1769.2" y2="0"><stop offset="0.0000" stop-color="#c97c87"/><stop offset="0.1931" stop-color="#cb7f88"/><stop offset="0.2362" stop-color="#d08a89"/><stop offset="0.2656" stop-color="#d99e8c"/><stop offset="0.3029" stop-color="#e7cbaa"/><stop offset="0.3382" stop-color="#eddfbc"/><stop offset="0.3970" stop-color="#f1ebc7"/><stop offset="0.5862" stop-color="#f2f0cc"/><stop offset="0.6067" stop-color="#f2f0cc"/></linearGradient><linearGradient id="g96" gradientUnits="userSpaceOnUse" x1="749.0" y1="0" x2="1769.2" y2="0"><stop offset="0.0000" stop-color="#cb8088"/><stop offset="0.1970" stop-color="#cd8388"/><stop offset="0.2401" stop-color="#d38f89"/><stop offset="0.2647" stop-color="#da9f8c"/><stop offset="0.3029" stop-color="#e7ccab"/><stop offset="0.3391" stop-color="#ede0bc"/><stop offset="0.3999" stop-color="#f1ecc8"/><stop offset="0.6067" stop-color="#f2f0cc"/></linearGradient><linearGradient id="g97" gradientUnits="userSpaceOnUse" x1="749.0" y1="0" x2="1769.2" y2="0"><stop offset="0.0000" stop-color="#cd8488"/><stop offset="0.1980" stop-color="#cf8789"/><stop offset="0.2441" stop-color="#d59489"/><stop offset="0.2627" stop-color="#da9f8c"/><stop offset="0.2892" stop-color="#e4bfa1"/><stop offset="0.3127" stop-color="#e9d3b2"/><stop offset="0.3539" stop-color="#efe4c1"/><stop offset="0.4332" stop-color="#f1eeca"/><stop offset="0.6067" stop-color="#f2f0cc"/></linearGradient><linearGradient id="g98" gradientUnits="userSpaceOnUse" x1="749.0" y1="0" x2="1769.2" y2="0"><stop offset="0.0000" stop-color="#cf8789"/><stop offset="0.1990" stop-color="#d08a89"/><stop offset="0.2509" stop-color="#d7998a"/><stop offset="0.2735" stop-color="#dfad94"/><stop offset="0.3019" stop-color="#e7ccac"/><stop offset="0.3391" stop-color="#ede0bd"/><stop offset="0.4019" stop-color="#f1ecc8"/><stop offset="0.6067" stop-color="#f2f0cc"/></linearGradient><linearGradient id="g99" gradientUnits="userSpaceOnUse" x1="749.0" y1="0" x2="1769.2" y2="0"><stop offset="0.0000" stop-color="#d18b89"/><stop offset="0.2000" stop-color="#d28e89"/><stop offset="0.2529" stop-color="#d99d8b"/><stop offset="0.2774" stop-color="#e1b499"/><stop offset="0.3029" stop-color="#e8cead"/><stop offset="0.3411" stop-color="#eee1be"/><stop offset="0.4078" stop-color="#f1edc9"/><stop offset="0.6067" stop-color="#f2f0cc"/></linearGradient><linearGradient id="g100" gradientUnits="userSpaceOnUse" x1="749.0" y1="0" x2="1769.2" y2="0"><stop offset="0.0000" stop-color="#d28f89"/><stop offset="0.2009" stop-color="#d49289"/><stop offset="0.2519" stop-color="#daa08d"/><stop offset="0.2745" stop-color="#e0b297"/><stop offset="0.3019" stop-color="#e8cead"/><stop offset="0.3401" stop-color="#eee1be"/><stop offset="0.4068" stop-color="#f1edc9"/><stop offset="0.6067" stop-color="#f2f0cc"/></linearGradient><linearGradient id="g101" gradientUnits="userSpaceOnUse" x1="749.0" y1="0" x2="1769.2" y2="0"><stop offset="0.0000" stop-color="#d49389"/><stop offset="0.2029" stop-color="#d6968a"/><stop offset="0.2470" stop-color="#daa18e"/><stop offset="0.2686" stop-color="#dfae95"/><stop offset="0.3009" stop-color="#e8cead"/><stop offset="0.3391" stop-color="#eee2be"/><stop offset="0.4058" stop-color="#f1edc9"/><stop offset="0.6067" stop-color="#f2f0cc"/></linearGradient><linearGradient id="g102" gradientUnits="userSpaceOnUse" x1="749.0" y1="0" x2="1769.2" y2="0"><stop offset="0.0000" stop-color="#d6968a"/><stop offset="0.2039" stop-color="#d79a8a"/><stop offset="0.2637" stop-color="#deac94"/><stop offset="0.3009" stop-color="#e8cfae"/><stop offset="0.3401" stop-color="#eee2bf"/><stop offset="0.4097" stop-color="#f1edc9"/><stop offset="0.6067" stop-color="#f2f0cc"/></linearGradient><linearGradient id="g103" gradientUnits="userSpaceOnUse" x1="749.0" y1="0" x2="1769.2" y2="0"><stop offset="0.0000" stop-color="#c9f0f0"/><stop offset="0.2431" stop-color="#c6eeef"/><stop offset="0.2490" stop-color="#c2ebef"/><stop offset="0.2500" stop-color="#bfe9ee"/><stop offset="0.2509" stop-color="#93cde3"/><stop offset="0.2519" stop-color="#7eb5d6"/><stop offset="0.2539" stop-color="#7093c3"/><stop offset="0.2578" stop-color="#555faa"/><stop offset="0.2607" stop-color="#4c4d9c"/><stop offset="0.2617" stop-color="#494793"/><stop offset="0.2666" stop-color="#37254d"/><stop offset="0.2686" stop-color="#311a37"/><stop offset="0.2696" stop-color="#311934"/><stop offset="0.2715" stop-color="#411d3f"/><stop offset="0.2745" stop-color="#5e2755"/><stop offset="0.2774" stop-color="#7a2d64"/><stop offset="0.2803" stop-color="#93336b"/><stop offset="0.2941" stop-color="#ba627f"/><stop offset="0.3078" stop-color="#ce8588"/><stop offset="0.3235" stop-color="#da9f8c"/><stop offset="0.3480" stop-color="#e5c6a6"/><stop offset="0.3764" stop-color="#ecdbb8"/><stop offset="0.4225" stop-color="#f0e9c6"/><stop offset="0.5352" stop-color="#f2f0cc"/><stop offset="0.6067" stop-color="#f2f0cc"/></linearGradient><linearGradient id="g104" gradientUnits="userSpaceOnUse" x1="749.0" y1="0" x2="1769.2" y2="0"><stop offset="0.0000" stop-color="#c9f0f0"/><stop offset="0.2205" stop-color="#c5eeef"/><stop offset="0.2441" stop-color="#bfe9ee"/><stop offset="0.2470" stop-color="#b8e5ed"/><stop offset="0.2490" stop-color="#acddea"/><stop offset="0.2500" stop-color="#9fd5e6"/><stop offset="0.2509" stop-color="#88c3de"/><stop offset="0.2519" stop-color="#7cb0d3"/><stop offset="0.2549" stop-color="#6984bb"/><stop offset="0.2578" stop-color="#545faa"/><stop offset="0.2607" stop-color="#4c4d9c"/><stop offset="0.2617" stop-color="#494693"/><stop offset="0.2666" stop-color="#37254c"/><stop offset="0.2686" stop-color="#301a37"/><stop offset="0.2696" stop-color="#311934"/><stop offset="0.2715" stop-color="#411d40"/><stop offset="0.2745" stop-color="#5e2755"/><stop offset="0.2774" stop-color="#7b2d64"/><stop offset="0.2803" stop-color="#94346b"/><stop offset="0.2941" stop-color="#ba627f"/><stop offset="0.3078" stop-color="#ce8588"/><stop offset="0.3235" stop-color="#da9f8c"/><stop offset="0.3480" stop-color="#e5c6a6"/><stop offset="0.3764" stop-color="#ecdbb8"/><stop offset="0.4225" stop-color="#f0e9c6"/><stop offset="0.5352" stop-color="#f2f0cc"/><stop offset="0.6067" stop-color="#f2f0cc"/></linearGradient><linearGradient id="g105" gradientUnits="userSpaceOnUse" x1="749.0" y1="0" x2="1769.2" y2="0"><stop offset="0.0000" stop-color="#c9f0f0"/><stop offset="0.2049" stop-color="#c5edef"/><stop offset="0.2382" stop-color="#bde8ee"/><stop offset="0.2450" stop-color="#afdfea"/><stop offset="0.2480" stop-color="#a0d6e6"/><stop offset="0.2500" stop-color="#8bc6df"/><stop offset="0.2509" stop-color="#7fb8d7"/><stop offset="0.2558" stop-color="#6074b4"/><stop offset="0.2578" stop-color="#545ea9"/><stop offset="0.2607" stop-color="#4c4c9c"/><stop offset="0.2627" stop-color="#453f83"/><stop offset="0.2666" stop-color="#37254c"/><stop offset="0.2686" stop-color="#301a36"/><stop offset="0.2696" stop-color="#321934"/><stop offset="0.2705" stop-color="#381a38"/><stop offset="0.2745" stop-color="#5f2756"/><stop offset="0.2774" stop-color="#7b2e64"/><stop offset="0.2803" stop-color="#94346b"/><stop offset="0.2941" stop-color="#ba627f"/><stop offset="0.3078" stop-color="#ce8588"/><stop offset="0.3235" stop-color="#da9f8c"/><stop offset="0.3480" stop-color="#e5c6a6"/><stop offset="0.3764" stop-color="#ecdbb8"/><stop offset="0.4225" stop-color="#f0e9c6"/><stop offset="0.5352" stop-color="#f2f0cc"/><stop offset="0.6067" stop-color="#f2f0cc"/></linearGradient><linearGradient id="g106" gradientUnits="userSpaceOnUse" x1="749.0" y1="0" x2="1769.2" y2="0"><stop offset="0.0000" stop-color="#c9f0f0"/><stop offset="0.1921" stop-color="#c5edef"/><stop offset="0.2313" stop-color="#bce8ee"/><stop offset="0.2411" stop-color="#aedfea"/><stop offset="0.2460" stop-color="#9cd3e5"/><stop offset="0.2480" stop-color="#8fcbe2"/><stop offset="0.2500" stop-color="#7fb9d8"/><stop offset="0.2539" stop-color="#6c8abe"/><stop offset="0.2568" stop-color="#5866ae"/><stop offset="0.2598" stop-color="#4e519f"/><stop offset="0.2607" stop-color="#4c4b9b"/><stop offset="0.2637" stop-color="#413773"/><stop offset="0.2666" stop-color="#36244a"/><stop offset="0.2686" stop-color="#301a36"/><stop offset="0.2696" stop-color="#321934"/><stop offset="0.2705" stop-color="#381a38"/><stop offset="0.2745" stop-color="#602756"/><stop offset="0.2774" stop-color="#7b2e64"/><stop offset="0.2803" stop-color="#94346b"/><stop offset="0.2941" stop-color="#ba637f"/><stop offset="0.3078" stop-color="#ce8588"/><stop offset="0.3235" stop-color="#da9f8d"/><stop offset="0.3480" stop-color="#e6c6a7"/><stop offset="0.3764" stop-color="#ecdbb8"/><stop offset="0.4225" stop-color="#f0e9c6"/><stop offset="0.5352" stop-color="#f2f0cc"/><stop offset="0.6067" stop-color="#f2f0cc"/></linearGradient><linearGradient id="g107" gradientUnits="userSpaceOnUse" x1="749.0" y1="0" x2="1769.2" y2="0"><stop offset="0.0000" stop-color="#c9f0f0"/><stop offset="0.1833" stop-color="#c5edef"/><stop offset="0.2245" stop-color="#bce7ee"/><stop offset="0.2372" stop-color="#acddea"/><stop offset="0.2431" stop-color="#9dd4e6"/><stop offset="0.2470" stop-color="#8ac5df"/><stop offset="0.2490" stop-color="#7fb8d7"/><stop offset="0.2519" stop-color="#749bc8"/><stop offset="0.2568" stop-color="#5663ac"/><stop offset="0.2607" stop-color="#4b4b9a"/><stop offset="0.2666" stop-color="#362349"/><stop offset="0.2686" stop-color="#301935"/><stop offset="0.2696" stop-color="#331935"/><stop offset="0.2715" stop-color="#431e41"/><stop offset="0.2745" stop-color="#602857"/><stop offset="0.2774" stop-color="#7c2e64"/><stop offset="0.2803" stop-color="#94346b"/><stop offset="0.2941" stop-color="#ba637f"/><stop offset="0.3078" stop-color="#ce8588"/><stop offset="0.3235" stop-color="#daa08d"/><stop offset="0.3480" stop-color="#e6c6a7"/><stop offset="0.3764" stop-color="#ecdbb8"/><stop offset="0.4234" stop-color="#f0e9c6"/><stop offset="0.5391" stop-color="#f2f0cc"/><stop offset="0.6067" stop-color="#f2f0cc"/></linearGradient><linearGradient id="g108" gradientUnits="userSpaceOnUse" x1="749.0" y1="0" x2="1769.2" y2="0"><stop offset="0.0000" stop-color="#c9f0f0"/><stop offset="0.1755" stop-color="#c5edef"/><stop offset="0.2186" stop-color="#bbe7ee"/><stop offset="0.2343" stop-color="#a9dce9"/><stop offset="0.2421" stop-color="#95cfe4"/><stop offset="0.2460" stop-color="#86c1dc"/><stop offset="0.2500" stop-color="#79a6ce"/><stop offset="0.2549" stop-color="#6074b4"/><stop offset="0.2568" stop-color="#5560ab"/><stop offset="0.2607" stop-color="#4b4998"/><stop offset="0.2656" stop-color="#392953"/><stop offset="0.2676" stop-color="#321c3c"/><stop offset="0.2686" stop-color="#301934"/><stop offset="0.2705" stop-color="#3b1b3a"/><stop offset="0.2745" stop-color="#622857"/><stop offset="0.2774" stop-color="#7d2e65"/><stop offset="0.2803" stop-color="#94356c"/><stop offset="0.2941" stop-color="#ba637f"/><stop offset="0.3078" stop-color="#ce8688"/><stop offset="0.3235" stop-color="#daa08d"/><stop offset="0.3480" stop-color="#e6c6a7"/><stop offset="0.3764" stop-color="#ecdbb8"/><stop offset="0.4234" stop-color="#f0e9c6"/><stop offset="0.5401" stop-color="#f2f0cc"/><stop offset="0.6067" stop-color="#f2f0cc"/></linearGradient><linearGradient id="g109" gradientUnits="userSpaceOnUse" x1="749.0" y1="0" x2="1769.2" y2="0"><stop offset="0.0000" stop-color="#c9f0f0"/><stop offset="0.1696" stop-color="#c5edef"/><stop offset="0.2127" stop-color="#bbe7ee"/><stop offset="0.2303" stop-color="#a8dbe9"/><stop offset="0.2392" stop-color="#95cfe4"/><stop offset="0.2441" stop-color="#86c0dc"/><stop offset="0.2490" stop-color="#79a5ce"/><stop offset="0.2539" stop-color="#637ab7"/><stop offset="0.2568" stop-color="#545ea9"/><stop offset="0.2598" stop-color="#4c4d9c"/><stop offset="0.2607" stop-color="#4a4795"/><stop offset="0.2656" stop-color="#382851"/><stop offset="0.2676" stop-color="#321b3a"/><stop offset="0.2686" stop-color="#2f1832"/><stop offset="0.2705" stop-color="#3c1c3c"/><stop offset="0.2745" stop-color="#632858"/><stop offset="0.2774" stop-color="#7e2e65"/><stop offset="0.2794" stop-color="#90326a"/><stop offset="0.2892" stop-color="#af5479"/><stop offset="0.2980" stop-color="#c16f83"/><stop offset="0.3107" stop-color="#d18b89"/><stop offset="0.3235" stop-color="#daa08d"/><stop offset="0.3480" stop-color="#e6c6a7"/><stop offset="0.3764" stop-color="#ecdbb8"/><stop offset="0.4234" stop-color="#f0e9c6"/><stop offset="0.5401" stop-color="#f2f0cc"/><stop offset="0.6067" stop-color="#f2f0cc"/></linearGradient><linearGradient id="g110" gradientUnits="userSpaceOnUse" x1="749.0" y1="0" x2="1769.2" y2="0"><stop offset="0.0000" stop-color="#c9f0f0"/><stop offset="0.1637" stop-color="#c5edef"/><stop offset="0.2078" stop-color="#bbe7ed"/><stop offset="0.2274" stop-color="#a7dae8"/><stop offset="0.2372" stop-color="#92cde3"/><stop offset="0.2441" stop-color="#7fb8d8"/><stop offset="0.2490" stop-color="#759ec9"/><stop offset="0.2529" stop-color="#657eb8"/><stop offset="0.2558" stop-color="#5661ac"/><stop offset="0.2598" stop-color="#4c4c9b"/><stop offset="0.2627" stop-color="#423976"/><stop offset="0.2656" stop-color="#37264e"/><stop offset="0.2676" stop-color="#311b39"/><stop offset="0.2686" stop-color="#301833"/><stop offset="0.2705" stop-color="#3e1c3d"/><stop offset="0.2745" stop-color="#642859"/><stop offset="0.2774" stop-color="#802f65"/><stop offset="0.2794" stop-color="#91336a"/><stop offset="0.2931" stop-color="#b9617f"/><stop offset="0.3068" stop-color="#cd8488"/><stop offset="0.3225" stop-color="#d99e8c"/><stop offset="0.3470" stop-color="#e5c5a6"/><stop offset="0.3744" stop-color="#ecdab8"/><stop offset="0.4195" stop-color="#f0e9c5"/><stop offset="0.5264" stop-color="#f2efcb"/><stop offset="0.6067" stop-color="#f2f0cc"/></linearGradient><linearGradient id="g111" gradientUnits="userSpaceOnUse" x1="749.0" y1="0" x2="1769.2" y2="0"><stop offset="0.0000" stop-color="#c9f0f0"/><stop offset="0.1598" stop-color="#c5edef"/><stop offset="0.2029" stop-color="#bbe7ee"/><stop offset="0.2235" stop-color="#a7dae8"/><stop offset="0.2362" stop-color="#8ec9e1"/><stop offset="0.2431" stop-color="#7eb5d6"/><stop offset="0.2480" stop-color="#759dc9"/><stop offset="0.2519" stop-color="#6780b9"/><stop offset="0.2558" stop-color="#545eaa"/><stop offset="0.2598" stop-color="#4b4a9a"/><stop offset="0.2656" stop-color="#37254b"/><stop offset="0.2676" stop-color="#311a37"/><stop offset="0.2686" stop-color="#311833"/><stop offset="0.2705" stop-color="#401d3f"/><stop offset="0.2735" stop-color="#5d2754"/><stop offset="0.2764" stop-color="#792d63"/><stop offset="0.2794" stop-color="#92336b"/><stop offset="0.2941" stop-color="#bb6480"/><stop offset="0.3068" stop-color="#cd8488"/><stop offset="0.3225" stop-color="#d99f8c"/><stop offset="0.3470" stop-color="#e5c5a6"/><stop offset="0.3744" stop-color="#ecdab8"/><stop offset="0.4195" stop-color="#f0e9c5"/><stop offset="0.5264" stop-color="#f2efcb"/><stop offset="0.6067" stop-color="#f2f0cc"/></linearGradient><linearGradient id="g112" gradientUnits="userSpaceOnUse" x1="749.0" y1="0" x2="1769.2" y2="0"><stop offset="0.0000" stop-color="#c9f0f0"/><stop offset="0.1559" stop-color="#c5edef"/><stop offset="0.1990" stop-color="#bbe7ed"/><stop offset="0.2205" stop-color="#a6d9e8"/><stop offset="0.2343" stop-color="#8cc8e0"/><stop offset="0.2421" stop-color="#7db2d4"/><stop offset="0.2480" stop-color="#7196c5"/><stop offset="0.2529" stop-color="#5f72b3"/><stop offset="0.2549" stop-color="#5561ab"/><stop offset="0.2588" stop-color="#4c4d9c"/><stop offset="0.2598" stop-color="#4a4795"/><stop offset="0.2656" stop-color="#362348"/><stop offset="0.2676" stop-color="#301935"/><stop offset="0.2686" stop-color="#331934"/><stop offset="0.2696" stop-color="#391a38"/><stop offset="0.2735" stop-color="#5f2756"/><stop offset="0.2764" stop-color="#7a2d64"/><stop offset="0.2794" stop-color="#93336b"/><stop offset="0.2941" stop-color="#bb6580"/><stop offset="0.3068" stop-color="#ce8588"/><stop offset="0.3225" stop-color="#d99f8c"/><stop offset="0.3470" stop-color="#e5c6a6"/><stop offset="0.3744" stop-color="#ecdbb8"/><stop offset="0.4195" stop-color="#f0e9c5"/><stop offset="0.5264" stop-color="#f2efcb"/><stop offset="0.6067" stop-color="#f2f0cc"/></linearGradient><linearGradient id="g113" gradientUnits="userSpaceOnUse" x1="749.0" y1="0" x2="1769.2" y2="0"><stop offset="0.0000" stop-color="#c9f0f0"/><stop offset="0.1519" stop-color="#c5edef"/><stop offset="0.1951" stop-color="#bbe7ed"/><stop offset="0.2176" stop-color="#a5d9e8"/><stop offset="0.2323" stop-color="#8bc7e0"/><stop offset="0.2401" stop-color="#7db2d4"/><stop offset="0.2470" stop-color="#7195c4"/><stop offset="0.2519" stop-color="#6074b4"/><stop offset="0.2549" stop-color="#545ea9"/><stop offset="0.2588" stop-color="#4b4b9b"/><stop offset="0.2656" stop-color="#352145"/><stop offset="0.2676" stop-color="#2f1833"/><stop offset="0.2696" stop-color="#3b1b3b"/><stop offset="0.2735" stop-color="#612857"/><stop offset="0.2764" stop-color="#7c2e64"/><stop offset="0.2794" stop-color="#94346b"/><stop offset="0.2931" stop-color="#ba627f"/><stop offset="0.3068" stop-color="#ce8588"/><stop offset="0.3225" stop-color="#da9f8c"/><stop offset="0.3470" stop-color="#e5c6a6"/><stop offset="0.3754" stop-color="#ecdbb8"/><stop offset="0.4215" stop-color="#f0e9c6"/><stop offset="0.5342" stop-color="#f2f0cc"/><stop offset="0.6067" stop-color="#f2f0cc"/></linearGradient><linearGradient id="g114" gradientUnits="userSpaceOnUse" x1="749.0" y1="0" x2="1769.2" y2="0"><stop offset="0.0000" stop-color="#c9f0f0"/><stop offset="0.1490" stop-color="#c5edef"/><stop offset="0.1921" stop-color="#bae6ed"/><stop offset="0.2147" stop-color="#a5d9e8"/><stop offset="0.2294" stop-color="#8cc7e0"/><stop offset="0.2382" stop-color="#7db2d4"/><stop offset="0.2450" stop-color="#7398c6"/><stop offset="0.2500" stop-color="#657cb8"/><stop offset="0.2539" stop-color="#555faa"/><stop offset="0.2588" stop-color="#4a4897"/><stop offset="0.2647" stop-color="#37254c"/><stop offset="0.2666" stop-color="#311a38"/><stop offset="0.2676" stop-color="#301833"/><stop offset="0.2696" stop-color="#3e1c3d"/><stop offset="0.2735" stop-color="#632858"/><stop offset="0.2764" stop-color="#7e2e65"/><stop offset="0.2784" stop-color="#8f326a"/><stop offset="0.2843" stop-color="#a34573"/><stop offset="0.2941" stop-color="#bc6680"/><stop offset="0.3068" stop-color="#ce8588"/><stop offset="0.3225" stop-color="#daa08d"/><stop offset="0.3470" stop-color="#e6c6a7"/><stop offset="0.3754" stop-color="#ecdbb8"/><stop offset="0.4225" stop-color="#f0e9c6"/><stop offset="0.5381" stop-color="#f2f0cc"/><stop offset="0.6067" stop-color="#f2f0cc"/></linearGradient><linearGradient id="g115" gradientUnits="userSpaceOnUse" x1="749.0" y1="0" x2="1769.2" y2="0"><stop offset="0.0000" stop-color="#c9f0f0"/><stop offset="0.1460" stop-color="#c5edef"/><stop offset="0.1892" stop-color="#bae6ed"/><stop offset="0.2127" stop-color="#a4d8e7"/><stop offset="0.2274" stop-color="#8bc7e0"/><stop offset="0.2362" stop-color="#7db2d4"/><stop offset="0.2441" stop-color="#7297c5"/><stop offset="0.2490" stop-color="#657db8"/><stop offset="0.2539" stop-color="#535ca8"/><stop offset="0.2578" stop-color="#4b4b9b"/><stop offset="0.2617" stop-color="#3f346c"/><stop offset="0.2656" stop-color="#331d3e"/><stop offset="0.2666" stop-color="#301936"/><stop offset="0.2676" stop-color="#321934"/><stop offset="0.2696" stop-color="#411d3f"/><stop offset="0.2735" stop-color="#66295a"/><stop offset="0.2764" stop-color="#812f66"/><stop offset="0.2784" stop-color="#92336b"/><stop offset="0.2921" stop-color="#b9617f"/><stop offset="0.3058" stop-color="#cd8488"/><stop offset="0.3215" stop-color="#d99e8c"/><stop offset="0.3460" stop-color="#e5c5a6"/><stop offset="0.3735" stop-color="#ebdab8"/><stop offset="0.4185" stop-color="#f0e9c5"/><stop offset="0.5244" stop-color="#f2efcb"/><stop offset="0.6067" stop-color="#f2f0cc"/></linearGradient><linearGradient id="g116" gradientUnits="userSpaceOnUse" x1="749.0" y1="0" x2="1769.2" y2="0"><stop offset="0.0000" stop-color="#c9f0f0"/><stop offset="0.1441" stop-color="#c4edef"/><stop offset="0.1862" stop-color="#bae6ed"/><stop offset="0.2098" stop-color="#a4d8e7"/><stop offset="0.2254" stop-color="#8ac6df"/><stop offset="0.2343" stop-color="#7db3d5"/><stop offset="0.2431" stop-color="#7195c5"/><stop offset="0.2490" stop-color="#6176b5"/><stop offset="0.2529" stop-color="#545ea9"/><stop offset="0.2568" stop-color="#4c4d9c"/><stop offset="0.2578" stop-color="#4a4896"/><stop offset="0.2647" stop-color="#352144"/><stop offset="0.2666" stop-color="#2f1833"/><stop offset="0.2686" stop-color="#3a1b3a"/><stop offset="0.2725" stop-color="#5f2756"/><stop offset="0.2754" stop-color="#7b2d64"/><stop offset="0.2784" stop-color="#93336b"/><stop offset="0.2931" stop-color="#bb6480"/><stop offset="0.3058" stop-color="#ce8488"/><stop offset="0.3215" stop-color="#d99f8c"/><stop offset="0.3460" stop-color="#e5c5a6"/><stop offset="0.3735" stop-color="#ecdab8"/><stop offset="0.4185" stop-color="#f0e9c5"/><stop offset="0.5254" stop-color="#f2efcb"/><stop offset="0.6067" stop-color="#f2f0cc"/></linearGradient><linearGradient id="g117" gradientUnits="userSpaceOnUse" x1="749.0" y1="0" x2="1769.2" y2="0"><stop offset="0.0000" stop-color="#c9f0f0"/><stop offset="0.1421" stop-color="#c4edef"/><stop offset="0.1833" stop-color="#bae6ed"/><stop offset="0.2078" stop-color="#a3d8e7"/><stop offset="0.2235" stop-color="#8ac5df"/><stop offset="0.2323" stop-color="#7db3d5"/><stop offset="0.2421" stop-color="#7194c4"/><stop offset="0.2480" stop-color="#6177b5"/><stop offset="0.2529" stop-color="#535ba7"/><stop offset="0.2568" stop-color="#4b4a9a"/><stop offset="0.2647" stop-color="#331e40"/><stop offset="0.2666" stop-color="#301833"/><stop offset="0.2686" stop-color="#3e1c3d"/><stop offset="0.2725" stop-color="#632858"/><stop offset="0.2754" stop-color="#7d2e65"/><stop offset="0.2784" stop-color="#94346c"/><stop offset="0.2931" stop-color="#bc6580"/><stop offset="0.3058" stop-color="#ce8588"/><stop offset="0.3215" stop-color="#da9f8c"/><stop offset="0.3460" stop-color="#e5c6a6"/><stop offset="0.3744" stop-color="#ecdbb8"/><stop offset="0.4205" stop-color="#f0e9c6"/><stop offset="0.5332" stop-color="#f2f0cc"/><stop offset="0.6067" stop-color="#f2f0cc"/></linearGradient><linearGradient id="g118" gradientUnits="userSpaceOnUse" x1="749.0" y1="0" x2="1769.2" y2="0"><stop offset="0.0000" stop-color="#c9f0f0"/><stop offset="0.1402" stop-color="#c4edef"/><stop offset="0.1804" stop-color="#bae6ed"/><stop offset="0.2049" stop-color="#a4d8e7"/><stop offset="0.2215" stop-color="#8ac5df"/><stop offset="0.2303" stop-color="#7db3d5"/><stop offset="0.2401" stop-color="#7296c5"/><stop offset="0.2460" stop-color="#647cb8"/><stop offset="0.2519" stop-color="#535ca8"/><stop offset="0.2558" stop-color="#4c4c9c"/><stop offset="0.2578" stop-color="#47428a"/><stop offset="0.2637" stop-color="#352246"/><stop offset="0.2656" stop-color="#301935"/><stop offset="0.2676" stop-color="#381a38"/><stop offset="0.2715" stop-color="#5d2754"/><stop offset="0.2754" stop-color="#802f66"/><stop offset="0.2774" stop-color="#91326a"/><stop offset="0.2911" stop-color="#b9607e"/><stop offset="0.3048" stop-color="#cd8488"/><stop offset="0.3215" stop-color="#daa08d"/><stop offset="0.3460" stop-color="#e6c6a7"/><stop offset="0.3744" stop-color="#ecdbb8"/><stop offset="0.4215" stop-color="#f0e9c6"/><stop offset="0.5371" stop-color="#f2f0cc"/><stop offset="0.6067" stop-color="#f2f0cc"/></linearGradient><linearGradient id="g119" gradientUnits="userSpaceOnUse" x1="749.0" y1="0" x2="1769.2" y2="0"><stop offset="0.0000" stop-color="#c9f0f0"/><stop offset="0.1382" stop-color="#c4edef"/><stop offset="0.1784" stop-color="#bae6ed"/><stop offset="0.2039" stop-color="#a2d7e7"/><stop offset="0.2196" stop-color="#8ac5df"/><stop offset="0.2284" stop-color="#7db4d5"/><stop offset="0.2392" stop-color="#7195c4"/><stop offset="0.2460" stop-color="#6176b5"/><stop offset="0.2509" stop-color="#535ca8"/><stop offset="0.2558" stop-color="#4b4999"/><stop offset="0.2637" stop-color="#341f41"/><stop offset="0.2656" stop-color="#2f1832"/><stop offset="0.2676" stop-color="#3c1b3b"/><stop offset="0.2715" stop-color="#602756"/><stop offset="0.2745" stop-color="#7b2d64"/><stop offset="0.2774" stop-color="#93336b"/><stop offset="0.2921" stop-color="#bb6480"/><stop offset="0.3058" stop-color="#ce8689"/><stop offset="0.3205" stop-color="#d99e8c"/><stop offset="0.3450" stop-color="#e5c5a6"/><stop offset="0.3725" stop-color="#ecdab8"/><stop offset="0.4176" stop-color="#f0e9c5"/><stop offset="0.5244" stop-color="#f2efcb"/><stop offset="0.6067" stop-color="#f2f0cc"/></linearGradient><linearGradient id="g120" gradientUnits="userSpaceOnUse" x1="749.0" y1="0" x2="1769.2" y2="0"><stop offset="0.0000" stop-color="#c9f0f0"/><stop offset="0.1362" stop-color="#c4edef"/><stop offset="0.1755" stop-color="#bbe6ed"/><stop offset="0.2009" stop-color="#a3d8e7"/><stop offset="0.2176" stop-color="#8ac5df"/><stop offset="0.2264" stop-color="#7eb4d5"/><stop offset="0.2372" stop-color="#7297c5"/><stop offset="0.2441" stop-color="#647bb7"/><stop offset="0.2500" stop-color="#545da9"/><stop offset="0.2549" stop-color="#4b4b9b"/><stop offset="0.2588" stop-color="#413772"/><stop offset="0.2637" stop-color="#321c3d"/><stop offset="0.2647" stop-color="#301935"/><stop offset="0.2656" stop-color="#321934"/><stop offset="0.2676" stop-color="#401d3e"/><stop offset="0.2715" stop-color="#642859"/><stop offset="0.2745" stop-color="#7e2e65"/><stop offset="0.2774" stop-color="#94346c"/><stop offset="0.2921" stop-color="#bc6580"/><stop offset="0.3048" stop-color="#ce8588"/><stop offset="0.3205" stop-color="#da9f8c"/><stop offset="0.3450" stop-color="#e5c6a6"/><stop offset="0.3725" stop-color="#ecdbb8"/><stop offset="0.4185" stop-color="#f0e9c5"/><stop offset="0.5283" stop-color="#f2f0cc"/><stop offset="0.6067" stop-color="#f2f0cc"/></linearGradient><linearGradient id="g121" gradientUnits="userSpaceOnUse" x1="749.0" y1="0" x2="1769.2" y2="0"><stop offset="0.0000" stop-color="#c9f0f0"/><stop offset="0.1343" stop-color="#c4edef"/><stop offset="0.1735" stop-color="#bae6ed"/><stop offset="0.1990" stop-color="#a3d7e7"/><stop offset="0.2156" stop-color="#8ac5df"/><stop offset="0.2245" stop-color="#7eb5d6"/><stop offset="0.2362" stop-color="#7196c5"/><stop offset="0.2431" stop-color="#647bb7"/><stop offset="0.2490" stop-color="#545da9"/><stop offset="0.2539" stop-color="#4c4c9b"/><stop offset="0.2558" stop-color="#47438b"/><stop offset="0.2627" stop-color="#341f41"/><stop offset="0.2647" stop-color="#2f1832"/><stop offset="0.2666" stop-color="#3b1b3a"/><stop offset="0.2705" stop-color="#5e2755"/><stop offset="0.2735" stop-color="#792d63"/><stop offset="0.2764" stop-color="#92336b"/><stop offset="0.2911" stop-color="#ba637f"/><stop offset="0.3048" stop-color="#ce8588"/><stop offset="0.3205" stop-color="#daa08d"/><stop offset="0.3450" stop-color="#e6c6a7"/><stop offset="0.3735" stop-color="#ecdbb8"/><stop offset="0.4205" stop-color="#f0e9c6"/><stop offset="0.5362" stop-color="#f2f0cc"/><stop offset="0.6067" stop-color="#f2f0cc"/></linearGradient><linearGradient id="g122" gradientUnits="userSpaceOnUse" x1="749.0" y1="0" x2="1769.2" y2="0"><stop offset="0.0000" stop-color="#c9f0f0"/><stop offset="0.1333" stop-color="#c4edef"/><stop offset="0.1715" stop-color="#bae6ed"/><stop offset="0.1980" stop-color="#a2d7e7"/><stop offset="0.2147" stop-color="#89c4de"/><stop offset="0.2235" stop-color="#7db3d5"/><stop offset="0.2352" stop-color="#7195c4"/><stop offset="0.2431" stop-color="#6175b5"/><stop offset="0.2480" stop-color="#545ea9"/><stop offset="0.2539" stop-color="#4b4998"/><stop offset="0.2627" stop-color="#321c3c"/><stop offset="0.2637" stop-color="#301935"/><stop offset="0.2647" stop-color="#321934"/><stop offset="0.2666" stop-color="#3f1d3e"/><stop offset="0.2705" stop-color="#622858"/><stop offset="0.2735" stop-color="#7c2e64"/><stop offset="0.2764" stop-color="#94346b"/><stop offset="0.2911" stop-color="#bb6480"/><stop offset="0.3048" stop-color="#ce8689"/><stop offset="0.3195" stop-color="#d99e8c"/><stop offset="0.3441" stop-color="#e5c5a6"/><stop offset="0.3715" stop-color="#ecdab8"/><stop offset="0.4166" stop-color="#f0e9c5"/><stop offset="0.5234" stop-color="#f2efcb"/><stop offset="0.6067" stop-color="#f2f0cc"/></linearGradient><linearGradient id="g123" gradientUnits="userSpaceOnUse" x1="749.0" y1="0" x2="1769.2" y2="0"><stop offset="0.0000" stop-color="#c9f0f0"/><stop offset="0.1313" stop-color="#c4edef"/><stop offset="0.1696" stop-color="#bae6ed"/><stop offset="0.1960" stop-color="#a2d7e7"/><stop offset="0.2127" stop-color="#89c4de"/><stop offset="0.2215" stop-color="#7eb4d5"/><stop offset="0.2333" stop-color="#7297c5"/><stop offset="0.2411" stop-color="#637ab6"/><stop offset="0.2470" stop-color="#545ea9"/><stop offset="0.2529" stop-color="#4b4a9a"/><stop offset="0.2578" stop-color="#3e3369"/><stop offset="0.2627" stop-color="#311b38"/><stop offset="0.2637" stop-color="#2f1832"/><stop offset="0.2656" stop-color="#3b1b3a"/><stop offset="0.2696" stop-color="#5e2755"/><stop offset="0.2735" stop-color="#802f66"/><stop offset="0.2754" stop-color="#90326a"/><stop offset="0.2901" stop-color="#ba627f"/><stop offset="0.3039" stop-color="#ce8588"/><stop offset="0.3195" stop-color="#da9f8c"/><stop offset="0.3441" stop-color="#e5c6a6"/><stop offset="0.3725" stop-color="#ecdbb8"/><stop offset="0.4185" stop-color="#f0e9c6"/><stop offset="0.5313" stop-color="#f2f0cc"/><stop offset="0.6067" stop-color="#f2f0cc"/></linearGradient><linearGradient id="g124" gradientUnits="userSpaceOnUse" x1="749.0" y1="0" x2="1769.2" y2="0"><stop offset="0.0000" stop-color="#c9f0f0"/><stop offset="0.1304" stop-color="#c4edef"/><stop offset="0.1686" stop-color="#bae6ed"/><stop offset="0.1951" stop-color="#a1d6e7"/><stop offset="0.2117" stop-color="#88c3de"/><stop offset="0.2205" stop-color="#7db3d5"/><stop offset="0.2333" stop-color="#7093c3"/><stop offset="0.2411" stop-color="#6175b4"/><stop offset="0.2470" stop-color="#535ba7"/><stop offset="0.2519" stop-color="#4c4b9b"/><stop offset="0.2558" stop-color="#423977"/><stop offset="0.2617" stop-color="#321c3b"/><stop offset="0.2627" stop-color="#301935"/><stop offset="0.2647" stop-color="#371a37"/><stop offset="0.2696" stop-color="#622858"/><stop offset="0.2725" stop-color="#7c2e64"/><stop offset="0.2754" stop-color="#93336b"/><stop offset="0.2901" stop-color="#bb647f"/><stop offset="0.3039" stop-color="#ce8688"/><stop offset="0.3186" stop-color="#d99e8c"/><stop offset="0.3431" stop-color="#e5c5a6"/><stop offset="0.3705" stop-color="#ebdab8"/><stop offset="0.4156" stop-color="#f0e9c5"/><stop offset="0.5215" stop-color="#f2efcb"/><stop offset="0.6067" stop-color="#f2f0cc"/></linearGradient><linearGradient id="g125" gradientUnits="userSpaceOnUse" x1="749.0" y1="0" x2="1769.2" y2="0"><stop offset="0.0000" stop-color="#c9f0f0"/><stop offset="0.1294" stop-color="#c4edef"/><stop offset="0.1666" stop-color="#bae6ed"/><stop offset="0.1931" stop-color="#a1d6e7"/><stop offset="0.2098" stop-color="#89c4de"/><stop offset="0.2186" stop-color="#7eb4d5"/><stop offset="0.2313" stop-color="#7195c4"/><stop offset="0.2392" stop-color="#6379b6"/><stop offset="0.2460" stop-color="#535ba7"/><stop offset="0.2509" stop-color="#4c4c9b"/><stop offset="0.2529" stop-color="#48448d"/><stop offset="0.2607" stop-color="#331e3f"/><stop offset="0.2627" stop-color="#301833"/><stop offset="0.2647" stop-color="#3b1b3b"/><stop offset="0.2686" stop-color="#5e2755"/><stop offset="0.2725" stop-color="#802f65"/><stop offset="0.2745" stop-color="#90326a"/><stop offset="0.2892" stop-color="#ba627f"/><stop offset="0.3029" stop-color="#ce8588"/><stop offset="0.3186" stop-color="#d99f8c"/><stop offset="0.3431" stop-color="#e5c6a6"/><stop offset="0.3705" stop-color="#ecdab8"/><stop offset="0.4156" stop-color="#f0e9c5"/><stop offset="0.5224" stop-color="#f2efcb"/><stop offset="0.6067" stop-color="#f2f0cc"/></linearGradient><linearGradient id="g126" gradientUnits="userSpaceOnUse" x1="749.0" y1="0" x2="1769.2" y2="0"><stop offset="0.0000" stop-color="#c9f0f0"/><stop offset="0.1284" stop-color="#c4edef"/><stop offset="0.1647" stop-color="#bae6ed"/><stop offset="0.1921" stop-color="#a0d6e6"/><stop offset="0.2088" stop-color="#88c3de"/><stop offset="0.2176" stop-color="#7db3d5"/><stop offset="0.2303" stop-color="#7194c4"/><stop offset="0.2392" stop-color="#6074b4"/><stop offset="0.2450" stop-color="#535ca8"/><stop offset="0.2509" stop-color="#4b4998"/><stop offset="0.2558" stop-color="#3e3369"/><stop offset="0.2607" stop-color="#311b3a"/><stop offset="0.2617" stop-color="#2f1933"/><stop offset="0.2637" stop-color="#381a38"/><stop offset="0.2686" stop-color="#622858"/><stop offset="0.2715" stop-color="#7c2e64"/><stop offset="0.2745" stop-color="#93336b"/><stop offset="0.2892" stop-color="#bb647f"/><stop offset="0.3029" stop-color="#ce8688"/><stop offset="0.3186" stop-color="#daa08d"/><stop offset="0.3431" stop-color="#e6c6a7"/><stop offset="0.3715" stop-color="#ecdbb8"/><stop offset="0.4185" stop-color="#f0e9c6"/><stop offset="0.5342" stop-color="#f2f0cc"/><stop offset="0.6067" stop-color="#f2f0cc"/></linearGradient><linearGradient id="g127" gradientUnits="userSpaceOnUse" x1="749.0" y1="0" x2="1769.2" y2="0"><stop offset="0.0000" stop-color="#c9f0f0"/><stop offset="0.1264" stop-color="#c4edef"/><stop offset="0.1637" stop-color="#bae6ed"/><stop offset="0.1911" stop-color="#9fd5e6"/><stop offset="0.2078" stop-color="#88c3dd"/><stop offset="0.2166" stop-color="#7db3d5"/><stop offset="0.2303" stop-color="#6f91c2"/><stop offset="0.2392" stop-color="#5e70b2"/><stop offset="0.2441" stop-color="#535ca8"/><stop offset="0.2500" stop-color="#4b4a9a"/><stop offset="0.2558" stop-color="#3d3062"/><stop offset="0.2598" stop-color="#321c3d"/><stop offset="0.2607" stop-color="#301a36"/><stop offset="0.2617" stop-color="#311833"/><stop offset="0.2647" stop-color="#451f43"/><stop offset="0.2686" stop-color="#67295b"/><stop offset="0.2725" stop-color="#883168"/><stop offset="0.2745" stop-color="#95356c"/><stop offset="0.2892" stop-color="#bc6580"/><stop offset="0.3029" stop-color="#ce8689"/><stop offset="0.3176" stop-color="#d99f8c"/><stop offset="0.3421" stop-color="#e5c6a6"/><stop offset="0.3695" stop-color="#ecdab8"/><stop offset="0.4146" stop-color="#f0e9c5"/><stop offset="0.5215" stop-color="#f2efcb"/><stop offset="0.6067" stop-color="#f2f0cc"/></linearGradient><linearGradient id="g128" gradientUnits="userSpaceOnUse" x1="749.0" y1="0" x2="1769.2" y2="0"><stop offset="0.0000" stop-color="#c9f0f0"/><stop offset="0.1255" stop-color="#c4edef"/><stop offset="0.1617" stop-color="#bae6ed"/><stop offset="0.1892" stop-color="#a0d6e6"/><stop offset="0.2058" stop-color="#88c4de"/><stop offset="0.2147" stop-color="#7eb4d5"/><stop offset="0.2274" stop-color="#7296c5"/><stop offset="0.2362" stop-color="#6379b6"/><stop offset="0.2431" stop-color="#535ca8"/><stop offset="0.2490" stop-color="#4b4b9b"/><stop offset="0.2539" stop-color="#40366f"/><stop offset="0.2598" stop-color="#311b38"/><stop offset="0.2607" stop-color="#2f1832"/><stop offset="0.2627" stop-color="#3a1b39"/><stop offset="0.2676" stop-color="#642859"/><stop offset="0.2705" stop-color="#7d2e65"/><stop offset="0.2735" stop-color="#94346b"/><stop offset="0.2882" stop-color="#bb647f"/><stop offset="0.3019" stop-color="#ce8688"/><stop offset="0.3176" stop-color="#daa08d"/><stop offset="0.3421" stop-color="#e6c6a7"/><stop offset="0.3705" stop-color="#ecdbb8"/><stop offset="0.4176" stop-color="#f0e9c6"/><stop offset="0.5332" stop-color="#f2f0cc"/><stop offset="0.6067" stop-color="#f2f0cc"/></linearGradient><linearGradient id="g129" gradientUnits="userSpaceOnUse" x1="749.0" y1="0" x2="1769.2" y2="0"><stop offset="0.0000" stop-color="#c9f0f0"/><stop offset="0.1255" stop-color="#c4edef"/><stop offset="0.1608" stop-color="#bae6ed"/><stop offset="0.1882" stop-color="#a0d5e6"/><stop offset="0.2049" stop-color="#88c3de"/><stop offset="0.2137" stop-color="#7db4d5"/><stop offset="0.2274" stop-color="#7093c3"/><stop offset="0.2362" stop-color="#6075b4"/><stop offset="0.2421" stop-color="#535da8"/><stop offset="0.2480" stop-color="#4c4b9b"/><stop offset="0.2509" stop-color="#453f84"/><stop offset="0.2588" stop-color="#321b3a"/><stop offset="0.2598" stop-color="#301934"/><stop offset="0.2617" stop-color="#371a37"/><stop offset="0.2666" stop-color="#602857"/><stop offset="0.2696" stop-color="#792d64"/><stop offset="0.2725" stop-color="#91336a"/><stop offset="0.2872" stop-color="#ba627f"/><stop offset="0.3009" stop-color="#ce8588"/><stop offset="0.3166" stop-color="#d99f8c"/><stop offset="0.3411" stop-color="#e5c6a6"/><stop offset="0.3686" stop-color="#ecdab8"/><stop offset="0.4136" stop-color="#f0e9c5"/><stop offset="0.5205" stop-color="#f2efcb"/><stop offset="0.6067" stop-color="#f2f0cc"/></linearGradient><linearGradient id="g130" gradientUnits="userSpaceOnUse" x1="749.0" y1="0" x2="1769.2" y2="0"><stop offset="0.0000" stop-color="#c9f0f0"/><stop offset="0.1245" stop-color="#c4edef"/><stop offset="0.1598" stop-color="#bae6ed"/><stop offset="0.1872" stop-color="#9fd5e6"/><stop offset="0.2039" stop-color="#88c3dd"/><stop offset="0.2127" stop-color="#7db3d5"/><stop offset="0.2264" stop-color="#7093c3"/><stop offset="0.2352" stop-color="#6075b4"/><stop offset="0.2411" stop-color="#545da9"/><stop offset="0.2480" stop-color="#4a4897"/><stop offset="0.2539" stop-color="#3d3060"/><stop offset="0.2588" stop-color="#301a36"/><stop offset="0.2598" stop-color="#311833"/><stop offset="0.2627" stop-color="#441f42"/><stop offset="0.2666" stop-color="#66295a"/><stop offset="0.2696" stop-color="#7e2e65"/><stop offset="0.2725" stop-color="#94346b"/><stop offset="0.2872" stop-color="#bb6480"/><stop offset="0.3009" stop-color="#ce8688"/><stop offset="0.3156" stop-color="#d99e8c"/><stop offset="0.3401" stop-color="#e5c5a6"/><stop offset="0.3676" stop-color="#ebdab8"/><stop offset="0.4127" stop-color="#f0e9c5"/><stop offset="0.5185" stop-color="#f2efcb"/><stop offset="0.6067" stop-color="#f2f0cc"/></linearGradient><linearGradient id="g131" gradientUnits="userSpaceOnUse" x1="749.0" y1="0" x2="1769.2" y2="0"><stop offset="0.0000" stop-color="#c9f0f0"/><stop offset="0.1235" stop-color="#c4edef"/><stop offset="0.1588" stop-color="#bae6ed"/><stop offset="0.1862" stop-color="#9fd5e6"/><stop offset="0.2029" stop-color="#87c2dd"/><stop offset="0.2117" stop-color="#7db3d5"/><stop offset="0.2254" stop-color="#7093c3"/><stop offset="0.2343" stop-color="#6175b4"/><stop offset="0.2401" stop-color="#545da9"/><stop offset="0.2470" stop-color="#4b4999"/><stop offset="0.2529" stop-color="#3d3163"/><stop offset="0.2578" stop-color="#311a38"/><stop offset="0.2588" stop-color="#2f1832"/><stop offset="0.2607" stop-color="#391a39"/><stop offset="0.2656" stop-color="#622858"/><stop offset="0.2686" stop-color="#7b2e64"/><stop offset="0.2715" stop-color="#93336b"/><stop offset="0.2872" stop-color="#bc6680"/><stop offset="0.3009" stop-color="#cf8789"/><stop offset="0.3156" stop-color="#da9f8c"/><stop offset="0.3401" stop-color="#e5c6a6"/><stop offset="0.3676" stop-color="#ecdbb8"/><stop offset="0.4136" stop-color="#f0e9c5"/><stop offset="0.5234" stop-color="#f2f0cc"/><stop offset="0.6067" stop-color="#f2f0cc"/></linearGradient><linearGradient id="g132" gradientUnits="userSpaceOnUse" x1="749.0" y1="0" x2="1769.2" y2="0"><stop offset="0.0000" stop-color="#c9f0f0"/><stop offset="0.1225" stop-color="#c4edef"/><stop offset="0.1578" stop-color="#bae6ed"/><stop offset="0.1853" stop-color="#9ed5e6"/><stop offset="0.2019" stop-color="#87c2dd"/><stop offset="0.2107" stop-color="#7db3d5"/><stop offset="0.2254" stop-color="#6f91c2"/><stop offset="0.2352" stop-color="#5c6eb1"/><stop offset="0.2401" stop-color="#535ba7"/><stop offset="0.2460" stop-color="#4b4a9a"/><stop offset="0.2519" stop-color="#3e3266"/><stop offset="0.2568" stop-color="#311b3a"/><stop offset="0.2578" stop-color="#301934"/><stop offset="0.2598" stop-color="#371a37"/><stop offset="0.2647" stop-color="#602756"/><stop offset="0.2686" stop-color="#802f66"/><stop offset="0.2705" stop-color="#90326a"/><stop offset="0.2852" stop-color="#ba627f"/><stop offset="0.2990" stop-color="#cd8488"/><stop offset="0.3146" stop-color="#d99e8c"/><stop offset="0.3391" stop-color="#e5c5a6"/><stop offset="0.3666" stop-color="#ebdab8"/><stop offset="0.4117" stop-color="#f0e9c5"/><stop offset="0.5185" stop-color="#f2efcb"/><stop offset="0.6067" stop-color="#f2f0cc"/></linearGradient><linearGradient id="g133" gradientUnits="userSpaceOnUse" x1="749.0" y1="0" x2="1769.2" y2="0"><stop offset="0.0000" stop-color="#c9f0f0"/><stop offset="0.1215" stop-color="#c4edef"/><stop offset="0.1568" stop-color="#bae6ed"/><stop offset="0.1843" stop-color="#9ed5e6"/><stop offset="0.2009" stop-color="#87c2dd"/><stop offset="0.2098" stop-color="#7db3d5"/><stop offset="0.2245" stop-color="#6f91c2"/><stop offset="0.2343" stop-color="#5d6eb1"/><stop offset="0.2392" stop-color="#535ca8"/><stop offset="0.2450" stop-color="#4b4b9b"/><stop offset="0.2500" stop-color="#413772"/><stop offset="0.2558" stop-color="#321c3c"/><stop offset="0.2578" stop-color="#311833"/><stop offset="0.2607" stop-color="#441f42"/><stop offset="0.2647" stop-color="#652959"/><stop offset="0.2676" stop-color="#7e2e65"/><stop offset="0.2705" stop-color="#94346b"/><stop offset="0.2852" stop-color="#bb637f"/><stop offset="0.2990" stop-color="#ce8588"/><stop offset="0.3146" stop-color="#da9f8d"/><stop offset="0.3391" stop-color="#e5c6a6"/><stop offset="0.3676" stop-color="#ecdbb8"/><stop offset="0.4136" stop-color="#f0e9c6"/><stop offset="0.5264" stop-color="#f2f0cc"/><stop offset="0.6067" stop-color="#f2f0cc"/></linearGradient><linearGradient id="g134" gradientUnits="userSpaceOnUse" x1="749.0" y1="0" x2="1769.2" y2="0"><stop offset="0.0000" stop-color="#c9f0f0"/><stop offset="0.1215" stop-color="#c4edef"/><stop offset="0.1559" stop-color="#bae6ed"/><stop offset="0.1833" stop-color="#9ed4e6"/><stop offset="0.2000" stop-color="#87c2dd"/><stop offset="0.2088" stop-color="#7db3d5"/><stop offset="0.2235" stop-color="#6f91c2"/><stop offset="0.2333" stop-color="#5d6fb2"/><stop offset="0.2392" stop-color="#525aa6"/><stop offset="0.2441" stop-color="#4c4c9b"/><stop offset="0.2460" stop-color="#48448e"/><stop offset="0.2549" stop-color="#331d3e"/><stop offset="0.2568" stop-color="#301832"/><stop offset="0.2588" stop-color="#3a1b39"/><stop offset="0.2637" stop-color="#632858"/><stop offset="0.2666" stop-color="#7b2e64"/><stop offset="0.2696" stop-color="#93336b"/><stop offset="0.2852" stop-color="#bc6580"/><stop offset="0.2990" stop-color="#cf8789"/><stop offset="0.3137" stop-color="#d99f8c"/><stop offset="0.3382" stop-color="#e5c6a6"/><stop offset="0.3656" stop-color="#ecdab8"/><stop offset="0.4107" stop-color="#f0e9c5"/><stop offset="0.5175" stop-color="#f2efcb"/><stop offset="0.6067" stop-color="#f2f0cc"/></linearGradient><linearGradient id="g135" gradientUnits="userSpaceOnUse" x1="749.0" y1="0" x2="1769.2" y2="0"><stop offset="0.0000" stop-color="#c9f0f0"/><stop offset="0.1206" stop-color="#c4edef"/><stop offset="0.1549" stop-color="#bae6ed"/><stop offset="0.1823" stop-color="#9ed4e6"/><stop offset="0.1990" stop-color="#87c2dd"/><stop offset="0.2078" stop-color="#7db3d5"/><stop offset="0.2225" stop-color="#6f91c2"/><stop offset="0.2323" stop-color="#5e70b2"/><stop offset="0.2382" stop-color="#525aa7"/><stop offset="0.2441" stop-color="#4b4999"/><stop offset="0.2500" stop-color="#3d3164"/><stop offset="0.2549" stop-color="#311b39"/><stop offset="0.2558" stop-color="#2f1833"/><stop offset="0.2578" stop-color="#381a38"/><stop offset="0.2627" stop-color="#602857"/><stop offset="0.2656" stop-color="#792d63"/><stop offset="0.2686" stop-color="#91326a"/><stop offset="0.2833" stop-color="#ba627f"/><stop offset="0.2970" stop-color="#cd8488"/><stop offset="0.3127" stop-color="#d99e8c"/><stop offset="0.3372" stop-color="#e5c5a6"/><stop offset="0.3646" stop-color="#ebdab8"/><stop offset="0.4097" stop-color="#f0e9c5"/><stop offset="0.5156" stop-color="#f2efcb"/><stop offset="0.6067" stop-color="#f2f0cc"/></linearGradient><linearGradient id="g136" gradientUnits="userSpaceOnUse" x1="749.0" y1="0" x2="1769.2" y2="0"><stop offset="0.0000" stop-color="#c9f0f0"/><stop offset="0.1196" stop-color="#c4edef"/><stop offset="0.1539" stop-color="#bae6ed"/><stop offset="0.1813" stop-color="#9ed4e6"/><stop offset="0.1980" stop-color="#87c2dd"/><stop offset="0.2068" stop-color="#7db3d5"/><stop offset="0.2215" stop-color="#7092c3"/><stop offset="0.2313" stop-color="#5e71b2"/><stop offset="0.2362" stop-color="#545ea9"/><stop offset="0.2431" stop-color="#4b4a9a"/><stop offset="0.2490" stop-color="#3e3267"/><stop offset="0.2539" stop-color="#321c3b"/><stop offset="0.2549" stop-color="#301935"/><stop offset="0.2558" stop-color="#321934"/><stop offset="0.2588" stop-color="#451f43"/><stop offset="0.2627" stop-color="#66295a"/><stop offset="0.2656" stop-color="#7f2e65"/><stop offset="0.2686" stop-color="#94346c"/><stop offset="0.2833" stop-color="#bb647f"/><stop offset="0.2970" stop-color="#ce8688"/><stop offset="0.3127" stop-color="#daa08d"/><stop offset="0.3372" stop-color="#e6c6a7"/><stop offset="0.3656" stop-color="#ecdbb8"/><stop offset="0.4117" stop-color="#f0e9c6"/><stop offset="0.5244" stop-color="#f2f0cc"/><stop offset="0.6067" stop-color="#f2f0cc"/></linearGradient><linearGradient id="g137" gradientUnits="userSpaceOnUse" x1="749.0" y1="0" x2="1769.2" y2="0"><stop offset="0.0000" stop-color="#c9f0f0"/><stop offset="0.1196" stop-color="#c4edef"/><stop offset="0.1529" stop-color="#bae6ed"/><stop offset="0.1804" stop-color="#9ed4e6"/><stop offset="0.1970" stop-color="#87c2dd"/><stop offset="0.2058" stop-color="#7db3d5"/><stop offset="0.2205" stop-color="#7093c3"/><stop offset="0.2303" stop-color="#5f72b3"/><stop offset="0.2362" stop-color="#535ca8"/><stop offset="0.2421" stop-color="#4c4b9b"/><stop offset="0.2460" stop-color="#433b7d"/><stop offset="0.2529" stop-color="#321d3d"/><stop offset="0.2549" stop-color="#301833"/><stop offset="0.2578" stop-color="#431e41"/><stop offset="0.2617" stop-color="#642859"/><stop offset="0.2647" stop-color="#7d2e65"/><stop offset="0.2676" stop-color="#93336b"/><stop offset="0.2833" stop-color="#bc6680"/><stop offset="0.2970" stop-color="#cf8789"/><stop offset="0.3117" stop-color="#da9f8c"/><stop offset="0.3362" stop-color="#e5c6a6"/><stop offset="0.3637" stop-color="#ecdbb8"/><stop offset="0.4097" stop-color="#f0e9c5"/><stop offset="0.5195" stop-color="#f2f0cc"/><stop offset="0.6067" stop-color="#f2f0cc"/></linearGradient><linearGradient id="g138" gradientUnits="userSpaceOnUse" x1="749.0" y1="0" x2="1769.2" y2="0"><stop offset="0.0000" stop-color="#c9f0f0"/><stop offset="0.1186" stop-color="#c4edef"/><stop offset="0.1519" stop-color="#bae6ed"/><stop offset="0.1794" stop-color="#9ed4e6"/><stop offset="0.1960" stop-color="#87c2dd"/><stop offset="0.2049" stop-color="#7db3d5"/><stop offset="0.2196" stop-color="#7093c3"/><stop offset="0.2294" stop-color="#5f73b3"/><stop offset="0.2362" stop-color="#525aa6"/><stop offset="0.2421" stop-color="#4a4998"/><stop offset="0.2480" stop-color="#3d3163"/><stop offset="0.2529" stop-color="#311b38"/><stop offset="0.2539" stop-color="#2f1832"/><stop offset="0.2558" stop-color="#391a39"/><stop offset="0.2607" stop-color="#622858"/><stop offset="0.2637" stop-color="#7b2e64"/><stop offset="0.2666" stop-color="#93336b"/><stop offset="0.2823" stop-color="#bc6580"/><stop offset="0.2960" stop-color="#ce8789"/><stop offset="0.3107" stop-color="#d99f8c"/><stop offset="0.3352" stop-color="#e5c5a6"/><stop offset="0.3627" stop-color="#ecdab8"/><stop offset="0.4078" stop-color="#f0e9c5"/><stop offset="0.5146" stop-color="#f2efcb"/><stop offset="0.6067" stop-color="#f2f0cc"/></linearGradient><linearGradient id="g139" gradientUnits="userSpaceOnUse" x1="749.0" y1="0" x2="1769.2" y2="0"><stop offset="0.0000" stop-color="#c9f0f0"/><stop offset="0.1186" stop-color="#c4edef"/><stop offset="0.1510" stop-color="#bae6ed"/><stop offset="0.1784" stop-color="#9ed4e6"/><stop offset="0.1960" stop-color="#86c0dc"/><stop offset="0.2049" stop-color="#7db2d4"/><stop offset="0.2205" stop-color="#6e8fc1"/><stop offset="0.2313" stop-color="#5a68af"/><stop offset="0.2362" stop-color="#5158a5"/><stop offset="0.2411" stop-color="#4b4a9a"/><stop offset="0.2470" stop-color="#3e3266"/><stop offset="0.2519" stop-color="#311b3a"/><stop offset="0.2529" stop-color="#301934"/><stop offset="0.2549" stop-color="#371a37"/><stop offset="0.2598" stop-color="#602756"/><stop offset="0.2627" stop-color="#792d63"/><stop offset="0.2656" stop-color="#91336a"/><stop offset="0.2803" stop-color="#ba627f"/><stop offset="0.2941" stop-color="#cd8488"/><stop offset="0.3097" stop-color="#d99e8c"/><stop offset="0.3342" stop-color="#e5c5a6"/><stop offset="0.3617" stop-color="#ecdab8"/><stop offset="0.4068" stop-color="#f0e9c5"/><stop offset="0.5136" stop-color="#f2efcb"/><stop offset="0.6067" stop-color="#f2f0cc"/></linearGradient><linearGradient id="g140" gradientUnits="userSpaceOnUse" x1="749.0" y1="0" x2="1769.2" y2="0"><stop offset="0.0000" stop-color="#c9f0f0"/><stop offset="0.1176" stop-color="#c4edef"/><stop offset="0.1510" stop-color="#bae6ed"/><stop offset="0.1784" stop-color="#9dd4e6"/><stop offset="0.1960" stop-color="#84bfdb"/><stop offset="0.2049" stop-color="#7cb0d3"/><stop offset="0.2205" stop-color="#6d8dc0"/><stop offset="0.2313" stop-color="#5866ae"/><stop offset="0.2401" stop-color="#4c4b9b"/><stop offset="0.2431" stop-color="#454085"/><stop offset="0.2509" stop-color="#321c3c"/><stop offset="0.2529" stop-color="#311833"/><stop offset="0.2558" stop-color="#451f43"/><stop offset="0.2598" stop-color="#67295a"/><stop offset="0.2627" stop-color="#7f2f65"/><stop offset="0.2656" stop-color="#94356c"/><stop offset="0.2803" stop-color="#bb6480"/><stop offset="0.2941" stop-color="#ce8688"/><stop offset="0.3088" stop-color="#d99e8c"/><stop offset="0.3333" stop-color="#e5c5a6"/><stop offset="0.3607" stop-color="#ebdab8"/><stop offset="0.4058" stop-color="#f0e9c5"/><stop offset="0.5117" stop-color="#f2efcb"/><stop offset="0.6067" stop-color="#f2f0cc"/></linearGradient><linearGradient id="g141" gradientUnits="userSpaceOnUse" x1="749.0" y1="0" x2="1769.2" y2="0"><stop offset="0.0000" stop-color="#c9f0f0"/><stop offset="0.1176" stop-color="#c4edef"/><stop offset="0.1500" stop-color="#bae6ed"/><stop offset="0.1774" stop-color="#9dd4e6"/><stop offset="0.1951" stop-color="#85bfdc"/><stop offset="0.2039" stop-color="#7db1d4"/><stop offset="0.2196" stop-color="#6e8ec0"/><stop offset="0.2303" stop-color="#5968ae"/><stop offset="0.2372" stop-color="#4f52a0"/><stop offset="0.2401" stop-color="#4b4999"/><stop offset="0.2460" stop-color="#3d3163"/><stop offset="0.2509" stop-color="#311a38"/><stop offset="0.2519" stop-color="#2f1832"/><stop offset="0.2539" stop-color="#3a1b3a"/><stop offset="0.2578" stop-color="#5c2754"/><stop offset="0.2617" stop-color="#7e2e65"/><stop offset="0.2647" stop-color="#94346b"/><stop offset="0.2794" stop-color="#bb6480"/><stop offset="0.2931" stop-color="#ce8688"/><stop offset="0.3088" stop-color="#daa08d"/><stop offset="0.3333" stop-color="#e6c6a7"/><stop offset="0.3617" stop-color="#ecdbb8"/><stop offset="0.4087" stop-color="#f0e9c6"/><stop offset="0.5244" stop-color="#f2f0cc"/><stop offset="0.6067" stop-color="#f2f0cc"/></linearGradient><linearGradient id="g142" gradientUnits="userSpaceOnUse" x1="749.0" y1="0" x2="1769.2" y2="0"><stop offset="0.0000" stop-color="#c9f0f0"/><stop offset="0.1166" stop-color="#c4edef"/><stop offset="0.1490" stop-color="#bae6ed"/><stop offset="0.1764" stop-color="#9dd4e6"/><stop offset="0.1941" stop-color="#85c0dc"/><stop offset="0.2029" stop-color="#7db1d4"/><stop offset="0.2186" stop-color="#6e8fc1"/><stop offset="0.2294" stop-color="#5a69af"/><stop offset="0.2352" stop-color="#5156a3"/><stop offset="0.2392" stop-color="#4b4b9b"/><stop offset="0.2441" stop-color="#403771"/><stop offset="0.2500" stop-color="#311b3a"/><stop offset="0.2509" stop-color="#2f1933"/><stop offset="0.2529" stop-color="#381a38"/><stop offset="0.2578" stop-color="#632858"/><stop offset="0.2607" stop-color="#7c2e64"/><stop offset="0.2637" stop-color="#94346b"/><stop offset="0.2784" stop-color="#bb647f"/><stop offset="0.2921" stop-color="#ce8688"/><stop offset="0.3078" stop-color="#daa08d"/><stop offset="0.3323" stop-color="#e6c6a7"/><stop offset="0.3607" stop-color="#ecdbb8"/><stop offset="0.4068" stop-color="#f0e9c6"/><stop offset="0.5195" stop-color="#f2f0cc"/><stop offset="0.6067" stop-color="#f2f0cc"/></linearGradient><linearGradient id="g143" gradientUnits="userSpaceOnUse" x1="749.0" y1="0" x2="1769.2" y2="0"><stop offset="0.0000" stop-color="#c9f0f0"/><stop offset="0.1166" stop-color="#c4edef"/><stop offset="0.1490" stop-color="#bae6ed"/><stop offset="0.1764" stop-color="#9cd3e5"/><stop offset="0.1941" stop-color="#84bfdb"/><stop offset="0.2039" stop-color="#7caed2"/><stop offset="0.2196" stop-color="#6c8abe"/><stop offset="0.2333" stop-color="#525aa7"/><stop offset="0.2392" stop-color="#4b4998"/><stop offset="0.2441" stop-color="#3f346c"/><stop offset="0.2490" stop-color="#321c3c"/><stop offset="0.2500" stop-color="#301936"/><stop offset="0.2509" stop-color="#311833"/><stop offset="0.2529" stop-color="#3e1c3d"/><stop offset="0.2568" stop-color="#612857"/><stop offset="0.2598" stop-color="#7b2d64"/><stop offset="0.2627" stop-color="#93336b"/><stop offset="0.2774" stop-color="#bb647f"/><stop offset="0.2911" stop-color="#ce8688"/><stop offset="0.3068" stop-color="#daa08d"/><stop offset="0.3313" stop-color="#e5c6a6"/><stop offset="0.3597" stop-color="#ecdbb8"/><stop offset="0.4058" stop-color="#f0e9c6"/><stop offset="0.5185" stop-color="#f2f0cc"/><stop offset="0.6067" stop-color="#f2f0cc"/></linearGradient><linearGradient id="g144" gradientUnits="userSpaceOnUse" x1="749.0" y1="0" x2="1769.2" y2="0"><stop offset="0.0000" stop-color="#c9f0f0"/><stop offset="0.1166" stop-color="#c4edef"/><stop offset="0.1480" stop-color="#bae6ed"/><stop offset="0.1755" stop-color="#9dd4e6"/><stop offset="0.1931" stop-color="#84bfdb"/><stop offset="0.2019" stop-color="#7db1d4"/><stop offset="0.2176" stop-color="#6e8ec1"/><stop offset="0.2284" stop-color="#5a69af"/><stop offset="0.2343" stop-color="#5156a3"/><stop offset="0.2382" stop-color="#4b4b9b"/><stop offset="0.2431" stop-color="#403670"/><stop offset="0.2490" stop-color="#311a38"/><stop offset="0.2500" stop-color="#2f1832"/><stop offset="0.2519" stop-color="#3b1b3a"/><stop offset="0.2558" stop-color="#5e2755"/><stop offset="0.2588" stop-color="#792d63"/><stop offset="0.2617" stop-color="#92336b"/><stop offset="0.2764" stop-color="#bb647f"/><stop offset="0.2901" stop-color="#ce8688"/><stop offset="0.3058" stop-color="#daa08d"/><stop offset="0.3303" stop-color="#e5c6a6"/><stop offset="0.3588" stop-color="#ecdbb8"/><stop offset="0.4048" stop-color="#f0e9c6"/><stop offset="0.5175" stop-color="#f2f0cc"/><stop offset="0.6067" stop-color="#f2f0cc"/></linearGradient><linearGradient id="g145" gradientUnits="userSpaceOnUse" x1="749.0" y1="0" x2="1769.2" y2="0"><stop offset="0.0000" stop-color="#c9f0f0"/><stop offset="0.1157" stop-color="#c4edef"/><stop offset="0.1480" stop-color="#bae6ed"/><stop offset="0.1745" stop-color="#9dd4e6"/><stop offset="0.1921" stop-color="#85bfdc"/><stop offset="0.2009" stop-color="#7db1d4"/><stop offset="0.2166" stop-color="#6e8fc1"/><stop offset="0.2264" stop-color="#5d6fb2"/><stop offset="0.2323" stop-color="#525aa7"/><stop offset="0.2382" stop-color="#4b4998"/><stop offset="0.2431" stop-color="#3f346b"/><stop offset="0.2480" stop-color="#321c3b"/><stop offset="0.2490" stop-color="#301934"/><stop offset="0.2509" stop-color="#381a38"/><stop offset="0.2549" stop-color="#5c2754"/><stop offset="0.2588" stop-color="#802f66"/><stop offset="0.2607" stop-color="#91336a"/><stop offset="0.2745" stop-color="#b9617f"/><stop offset="0.2882" stop-color="#cd8488"/><stop offset="0.3048" stop-color="#daa08d"/><stop offset="0.3293" stop-color="#e6c6a7"/><stop offset="0.3578" stop-color="#ecdbb8"/><stop offset="0.4038" stop-color="#f0e9c6"/><stop offset="0.5166" stop-color="#f2f0cc"/><stop offset="0.6067" stop-color="#f2f0cc"/></linearGradient><linearGradient id="g146" gradientUnits="userSpaceOnUse" x1="749.0" y1="0" x2="1769.2" y2="0"><stop offset="0.0000" stop-color="#c9f0f0"/><stop offset="0.1157" stop-color="#c4edef"/><stop offset="0.1470" stop-color="#bae6ed"/><stop offset="0.1735" stop-color="#9dd4e6"/><stop offset="0.1911" stop-color="#85c0dc"/><stop offset="0.2009" stop-color="#7cb0d3"/><stop offset="0.2166" stop-color="#6e8ec1"/><stop offset="0.2274" stop-color="#5a6aaf"/><stop offset="0.2343" stop-color="#4f54a2"/><stop offset="0.2372" stop-color="#4b4b9b"/><stop offset="0.2411" stop-color="#433a7a"/><stop offset="0.2470" stop-color="#331d3e"/><stop offset="0.2490" stop-color="#311833"/><stop offset="0.2509" stop-color="#3e1c3d"/><stop offset="0.2549" stop-color="#632858"/><stop offset="0.2578" stop-color="#7f2e65"/><stop offset="0.2598" stop-color="#90326a"/><stop offset="0.2725" stop-color="#b75e7d"/><stop offset="0.2862" stop-color="#cc8288"/><stop offset="0.3029" stop-color="#d99e8c"/><stop offset="0.3274" stop-color="#e5c5a6"/><stop offset="0.3548" stop-color="#ebdab7"/><stop offset="0.3999" stop-color="#f0e9c5"/><stop offset="0.5058" stop-color="#f2efcb"/><stop offset="0.6067" stop-color="#f2f0cc"/></linearGradient><linearGradient id="g147" gradientUnits="userSpaceOnUse" x1="749.0" y1="0" x2="1769.2" y2="0"><stop offset="0.0000" stop-color="#c9f0f0"/><stop offset="0.1157" stop-color="#c4edef"/><stop offset="0.1470" stop-color="#bae6ed"/><stop offset="0.1735" stop-color="#9cd3e6"/><stop offset="0.1911" stop-color="#84bfdb"/><stop offset="0.2000" stop-color="#7db1d4"/><stop offset="0.2166" stop-color="#6d8dc0"/><stop offset="0.2274" stop-color="#5968af"/><stop offset="0.2333" stop-color="#5055a3"/><stop offset="0.2372" stop-color="#4b4a99"/><stop offset="0.2421" stop-color="#3f346b"/><stop offset="0.2470" stop-color="#311b3a"/><stop offset="0.2480" stop-color="#2f1833"/><stop offset="0.2500" stop-color="#3a1b3a"/><stop offset="0.2539" stop-color="#612857"/><stop offset="0.2568" stop-color="#7d2e65"/><stop offset="0.2588" stop-color="#8f326a"/><stop offset="0.2617" stop-color="#9a3b6e"/><stop offset="0.2735" stop-color="#bb6480"/><stop offset="0.2862" stop-color="#cd8488"/><stop offset="0.3019" stop-color="#d99e8c"/><stop offset="0.3264" stop-color="#e5c5a6"/><stop offset="0.3539" stop-color="#ebdab8"/><stop offset="0.3989" stop-color="#f0e9c5"/><stop offset="0.5048" stop-color="#f2efcb"/><stop offset="0.6067" stop-color="#f2f0cc"/></linearGradient><linearGradient id="g148" gradientUnits="userSpaceOnUse" x1="749.0" y1="0" x2="1769.2" y2="0"><stop offset="0.0000" stop-color="#c9f0f0"/><stop offset="0.1157" stop-color="#c4edef"/><stop offset="0.1460" stop-color="#bae6ed"/><stop offset="0.1725" stop-color="#9dd4e6"/><stop offset="0.1911" stop-color="#83bedb"/><stop offset="0.2107" stop-color="#749ac7"/><stop offset="0.2215" stop-color="#657db8"/><stop offset="0.2313" stop-color="#525aa6"/><stop offset="0.2362" stop-color="#4c4c9b"/><stop offset="0.2382" stop-color="#48448e"/><stop offset="0.2421" stop-color="#3e3267"/><stop offset="0.2470" stop-color="#301a36"/><stop offset="0.2480" stop-color="#311934"/><stop offset="0.2500" stop-color="#401d3f"/><stop offset="0.2529" stop-color="#5e2755"/><stop offset="0.2558" stop-color="#7b2e64"/><stop offset="0.2588" stop-color="#94346c"/><stop offset="0.2715" stop-color="#b9617f"/><stop offset="0.2843" stop-color="#cd8388"/><stop offset="0.3009" stop-color="#d99f8c"/><stop offset="0.3254" stop-color="#e5c5a6"/><stop offset="0.3529" stop-color="#ecdab8"/><stop offset="0.3980" stop-color="#f0e9c5"/><stop offset="0.5048" stop-color="#f2efcb"/><stop offset="0.6067" stop-color="#f2f0cc"/></linearGradient><linearGradient id="g149" gradientUnits="userSpaceOnUse" x1="749.0" y1="0" x2="1769.2" y2="0"><stop offset="0.0000" stop-color="#c9f0f0"/><stop offset="0.1147" stop-color="#c4edef"/><stop offset="0.1460" stop-color="#bae6ed"/><stop offset="0.1725" stop-color="#9cd3e5"/><stop offset="0.1911" stop-color="#83bdda"/><stop offset="0.2107" stop-color="#7399c7"/><stop offset="0.2215" stop-color="#647bb7"/><stop offset="0.2303" stop-color="#535ca8"/><stop offset="0.2362" stop-color="#4b4b9b"/><stop offset="0.2401" stop-color="#423978"/><stop offset="0.2460" stop-color="#311b3a"/><stop offset="0.2470" stop-color="#2f1832"/><stop offset="0.2490" stop-color="#3c1c3b"/><stop offset="0.2529" stop-color="#652959"/><stop offset="0.2558" stop-color="#832f66"/><stop offset="0.2578" stop-color="#94346b"/><stop offset="0.2705" stop-color="#ba627f"/><stop offset="0.2833" stop-color="#cd8388"/><stop offset="0.2999" stop-color="#da9f8c"/><stop offset="0.3244" stop-color="#e5c6a6"/><stop offset="0.3519" stop-color="#ecdab8"/><stop offset="0.3970" stop-color="#f0e9c5"/><stop offset="0.5038" stop-color="#f2efcb"/><stop offset="0.6067" stop-color="#f2f0cc"/></linearGradient><linearGradient id="g150" gradientUnits="userSpaceOnUse" x1="749.0" y1="0" x2="1769.2" y2="0"><stop offset="0.0000" stop-color="#c9f0f0"/><stop offset="0.1147" stop-color="#c4edef"/><stop offset="0.1460" stop-color="#bae6ed"/><stop offset="0.1715" stop-color="#9dd4e6"/><stop offset="0.1902" stop-color="#83bedb"/><stop offset="0.2098" stop-color="#749bc7"/><stop offset="0.2205" stop-color="#657eb8"/><stop offset="0.2303" stop-color="#535ba7"/><stop offset="0.2362" stop-color="#4b4a99"/><stop offset="0.2401" stop-color="#413874"/><stop offset="0.2460" stop-color="#301a36"/><stop offset="0.2470" stop-color="#321934"/><stop offset="0.2480" stop-color="#381a38"/><stop offset="0.2519" stop-color="#612857"/><stop offset="0.2549" stop-color="#812f66"/><stop offset="0.2568" stop-color="#93336b"/><stop offset="0.2696" stop-color="#ba627f"/><stop offset="0.2823" stop-color="#cd8488"/><stop offset="0.2990" stop-color="#daa08d"/><stop offset="0.3235" stop-color="#e5c6a6"/><stop offset="0.3519" stop-color="#ecdbb8"/><stop offset="0.3980" stop-color="#f0e9c6"/><stop offset="0.5107" stop-color="#f2f0cc"/><stop offset="0.6067" stop-color="#f2f0cc"/></linearGradient><linearGradient id="g151" gradientUnits="userSpaceOnUse" x1="749.0" y1="0" x2="1769.2" y2="0"><stop offset="0.0000" stop-color="#c9f0f0"/><stop offset="0.1147" stop-color="#c4edef"/><stop offset="0.1451" stop-color="#bbe6ed"/><stop offset="0.1706" stop-color="#9dd4e6"/><stop offset="0.1892" stop-color="#84bedb"/><stop offset="0.2009" stop-color="#7babd1"/><stop offset="0.2166" stop-color="#6b89be"/><stop offset="0.2303" stop-color="#525aa6"/><stop offset="0.2352" stop-color="#4c4c9c"/><stop offset="0.2362" stop-color="#4a4897"/><stop offset="0.2401" stop-color="#403671"/><stop offset="0.2450" stop-color="#321c3b"/><stop offset="0.2460" stop-color="#2f1833"/><stop offset="0.2480" stop-color="#3c1c3c"/><stop offset="0.2509" stop-color="#5d2755"/><stop offset="0.2529" stop-color="#732c62"/><stop offset="0.2558" stop-color="#93336b"/><stop offset="0.2676" stop-color="#b9607e"/><stop offset="0.2803" stop-color="#cd8288"/><stop offset="0.2970" stop-color="#d99e8c"/><stop offset="0.3215" stop-color="#e5c5a6"/><stop offset="0.3490" stop-color="#ebdab8"/><stop offset="0.3940" stop-color="#f0e9c5"/><stop offset="0.4999" stop-color="#f2efcb"/><stop offset="0.6067" stop-color="#f2f0cc"/></linearGradient><linearGradient id="g152" gradientUnits="userSpaceOnUse" x1="749.0" y1="0" x2="1769.2" y2="0"><stop offset="0.0000" stop-color="#c9f0f0"/><stop offset="0.1147" stop-color="#c4edef"/><stop offset="0.1451" stop-color="#bae6ed"/><stop offset="0.1706" stop-color="#9dd4e6"/><stop offset="0.1892" stop-color="#83bdda"/><stop offset="0.2088" stop-color="#749bc8"/><stop offset="0.2205" stop-color="#647bb7"/><stop offset="0.2294" stop-color="#535ca8"/><stop offset="0.2352" stop-color="#4c4b9b"/><stop offset="0.2382" stop-color="#453e83"/><stop offset="0.2450" stop-color="#311a38"/><stop offset="0.2460" stop-color="#311833"/><stop offset="0.2470" stop-color="#371a37"/><stop offset="0.2509" stop-color="#642859"/><stop offset="0.2539" stop-color="#863067"/><stop offset="0.2549" stop-color="#91336a"/><stop offset="0.2656" stop-color="#b75e7d"/><stop offset="0.2784" stop-color="#cc8188"/><stop offset="0.2960" stop-color="#da9f8c"/><stop offset="0.3205" stop-color="#e5c6a6"/><stop offset="0.3480" stop-color="#ecdbb8"/><stop offset="0.3940" stop-color="#f0e9c5"/><stop offset="0.5038" stop-color="#f2f0cc"/><stop offset="0.6067" stop-color="#f2f0cc"/></linearGradient><linearGradient id="g153" gradientUnits="userSpaceOnUse" x1="749.0" y1="0" x2="1769.2" y2="0"><stop offset="0.0000" stop-color="#c9f0f0"/><stop offset="0.1147" stop-color="#c4edef"/><stop offset="0.1451" stop-color="#bae6ed"/><stop offset="0.1696" stop-color="#9dd4e6"/><stop offset="0.1892" stop-color="#82bdda"/><stop offset="0.2088" stop-color="#739ac7"/><stop offset="0.2205" stop-color="#647bb7"/><stop offset="0.2294" stop-color="#535ba7"/><stop offset="0.2352" stop-color="#4b4b9a"/><stop offset="0.2392" stop-color="#423977"/><stop offset="0.2450" stop-color="#301935"/><stop offset="0.2460" stop-color="#331935"/><stop offset="0.2480" stop-color="#472044"/><stop offset="0.2509" stop-color="#6b2a5d"/><stop offset="0.2539" stop-color="#8f326a"/><stop offset="0.2558" stop-color="#993a6e"/><stop offset="0.2656" stop-color="#ba627f"/><stop offset="0.2774" stop-color="#cc8288"/><stop offset="0.2941" stop-color="#d99e8c"/><stop offset="0.3186" stop-color="#e5c5a6"/><stop offset="0.3460" stop-color="#ebdab8"/><stop offset="0.3911" stop-color="#f0e9c5"/><stop offset="0.4970" stop-color="#f2efcb"/><stop offset="0.6067" stop-color="#f2f0cc"/></linearGradient><linearGradient id="cbg" x1="0" y1="0" x2="0" y2="1"><stop offset="0.0000" stop-color="#c9f0f0"/><stop offset="0.0371" stop-color="#bde8ee"/><stop offset="0.1059" stop-color="#8fcbe2"/><stop offset="0.1403" stop-color="#7fb9d8"/><stop offset="0.1747" stop-color="#7aa8cf"/><stop offset="0.2435" stop-color="#6a86bc"/><stop offset="0.3122" stop-color="#5560ab"/><stop offset="0.3810" stop-color="#4b4a9a"/><stop offset="0.4154" stop-color="#433b7c"/><stop offset="0.4498" stop-color="#3b2d5a"/><stop offset="0.4842" stop-color="#321c3c"/><stop offset="0.5000" stop-color="#2f1832"/><stop offset="0.5186" stop-color="#381a38"/><stop offset="0.5530" stop-color="#552550"/><stop offset="0.5873" stop-color="#742c62"/><stop offset="0.6217" stop-color="#93336b"/><stop offset="0.6561" stop-color="#9e3f70"/><stop offset="0.7249" stop-color="#b85f7e"/><stop offset="0.7937" stop-color="#cb7f88"/><stop offset="0.8624" stop-color="#d89b8a"/><stop offset="0.8968" stop-color="#e0b096"/><stop offset="0.9312" stop-color="#e6c8a8"/><stop offset="0.9656" stop-color="#ecdcb9"/><stop offset="1.0000" stop-color="#f2f0cc"/></linearGradient></defs><rect x="749.0" y="794.10" width="1020.2" height="1.60" fill="url(#g1)"/><rect x="749.0" y="793.10" width="1020.2" height="1.60" fill="url(#g2)"/><rect x="749.0" y="792.10" width="1020.2" height="1.60" fill="url(#g3)"/><rect x="749.0" y="791.10" width="1020.2" height="1.60" fill="url(#g4)"/><rect x="749.0" y="790.10" width="1020.2" height="1.60" fill="url(#g5)"/><rect x="749.0" y="789.10" width="1020.2" height="1.60" fill="url(#g6)"/><rect x="749.0" y="788.10" width="1020.2" height="1.60" fill="url(#g7)"/><rect x="749.0" y="787.10" width="1020.2" height="1.60" fill="url(#g8)"/><rect x="749.0" y="786.10" width="1020.2" height="1.60" fill="url(#g9)"/><rect x="749.0" y="785.10" width="1020.2" height="1.60" fill="url(#g10)"/><rect x="749.0" y="784.10" width="1020.2" height="1.60" fill="url(#g11)"/><rect x="749.0" y="783.10" width="1020.2" height="1.60" fill="url(#g12)"/><rect x="749.0" y="782.10" width="1020.2" height="1.60" fill="url(#g13)"/><rect x="749.0" y="781.10" width="1020.2" height="1.60" fill="url(#g14)"/><rect x="749.0" y="780.10" width="1020.2" height="1.60" fill="url(#g15)"/><rect x="749.0" y="779.10" width="1020.2" height="1.60" fill="url(#g16)"/><rect x="749.0" y="778.10" width="1020.2" height="1.60" fill="url(#g17)"/><rect x="749.0" y="777.10" width="1020.2" height="1.60" fill="url(#g18)"/><rect x="749.0" y="776.10" width="1020.2" height="1.60" fill="url(#g19)"/><rect x="749.0" y="775.10" width="1020.2" height="1.60" fill="url(#g20)"/><rect x="749.0" y="774.10" width="1020.2" height="1.60" fill="url(#g21)"/><rect x="749.0" y="773.10" width="1020.2" height="1.60" fill="url(#g22)"/><rect x="749.0" y="772.10" width="1020.2" height="1.60" fill="url(#g23)"/><rect x="749.0" y="771.10" width="1020.2" height="1.60" fill="url(#g24)"/><rect x="749.0" y="770.10" width="1020.2" height="1.60" fill="url(#g25)"/><rect x="749.0" y="769.10" width="1020.2" height="1.60" fill="url(#g26)"/><rect x="749.0" y="768.10" width="1020.2" height="1.60" fill="url(#g27)"/><rect x="749.0" y="767.10" width="1020.2" height="1.60" fill="url(#g28)"/><rect x="749.0" y="766.10" width="1020.2" height="1.60" fill="url(#g29)"/><rect x="749.0" y="765.10" width="1020.2" height="1.60" fill="url(#g30)"/><rect x="749.0" y="764.10" width="1020.2" height="1.60" fill="url(#g31)"/><rect x="749.0" y="763.10" width="1020.2" height="1.60" fill="url(#g32)"/><rect x="749.0" y="762.10" width="1020.2" height="1.60" fill="url(#g33)"/><rect x="749.0" y="761.10" width="1020.2" height="1.60" fill="url(#g34)"/><rect x="749.0" y="760.10" width="1020.2" height="1.60" fill="url(#g35)"/><rect x="749.0" y="759.10" width="1020.2" height="1.60" fill="url(#g36)"/><rect x="749.0" y="758.10" width="1020.2" height="1.60" fill="url(#g37)"/><rect x="749.0" y="757.10" width="1020.2" height="1.60" fill="url(#g38)"/><rect x="749.0" y="756.10" width="1020.2" height="1.60" fill="url(#g39)"/><rect x="749.0" y="755.10" width="1020.2" height="1.60" fill="url(#g40)"/><rect x="749.0" y="754.10" width="1020.2" height="1.60" fill="url(#g41)"/><rect x="749.0" y="753.10" width="1020.2" height="1.60" fill="url(#g42)"/><rect x="749.0" y="752.10" width="1020.2" height="1.60" fill="url(#g43)"/><rect x="749.0" y="751.10" width="1020.2" height="1.60" fill="url(#g44)"/><rect x="749.0" y="750.10" width="1020.2" height="1.60" fill="url(#g45)"/><rect x="749.0" y="749.10" width="1020.2" height="1.60" fill="url(#g46)"/><rect x="749.0" y="748.10" width="1020.2" height="1.60" fill="url(#g47)"/><rect x="749.0" y="747.10" width="1020.2" height="1.60" fill="url(#g48)"/><rect x="749.0" y="746.10" width="1020.2" height="1.60" fill="url(#g49)"/><rect x="749.0" y="745.10" width="1020.2" height="1.60" fill="url(#g50)"/><rect x="749.0" y="744.10" width="1020.2" height="1.00" fill="url(#g51)"/><rect x="749.0" y="644.90" width="1020.2" height="1.60" fill="url(#g52)"/><rect x="749.0" y="643.90" width="1020.2" height="1.60" fill="url(#g53)"/><rect x="749.0" y="642.90" width="1020.2" height="1.60" fill="url(#g54)"/><rect x="749.0" y="641.90" width="1020.2" height="1.60" fill="url(#g55)"/><rect x="749.0" y="640.90" width="1020.2" height="1.60" fill="url(#g56)"/><rect x="749.0" y="639.90" width="1020.2" height="1.60" fill="url(#g57)"/><rect x="749.0" y="638.90" width="1020.2" height="1.60" fill="url(#g58)"/><rect x="749.0" y="637.90" width="1020.2" height="1.60" fill="url(#g59)"/><rect x="749.0" y="636.90" width="1020.2" height="1.60" fill="url(#g60)"/><rect x="749.0" y="635.90" width="1020.2" height="1.60" fill="url(#g61)"/><rect x="749.0" y="634.90" width="1020.2" height="1.60" fill="url(#g62)"/><rect x="749.0" y="633.90" width="1020.2" height="1.60" fill="url(#g63)"/><rect x="749.0" y="632.90" width="1020.2" height="1.60" fill="url(#g64)"/><rect x="749.0" y="631.90" width="1020.2" height="1.60" fill="url(#g65)"/><rect x="749.0" y="630.90" width="1020.2" height="1.60" fill="url(#g66)"/><rect x="749.0" y="629.90" width="1020.2" height="1.60" fill="url(#g67)"/><rect x="749.0" y="628.90" width="1020.2" height="1.60" fill="url(#g68)"/><rect x="749.0" y="627.90" width="1020.2" height="1.60" fill="url(#g69)"/><rect x="749.0" y="626.90" width="1020.2" height="1.60" fill="url(#g70)"/><rect x="749.0" y="625.90" width="1020.2" height="1.60" fill="url(#g71)"/><rect x="749.0" y="624.90" width="1020.2" height="1.60" fill="url(#g72)"/><rect x="749.0" y="623.90" width="1020.2" height="1.60" fill="url(#g73)"/><rect x="749.0" y="622.90" width="1020.2" height="1.60" fill="url(#g74)"/><rect x="749.0" y="621.90" width="1020.2" height="1.60" fill="url(#g75)"/><rect x="749.0" y="620.90" width="1020.2" height="1.60" fill="url(#g76)"/><rect x="749.0" y="619.90" width="1020.2" height="1.60" fill="url(#g77)"/><rect x="749.0" y="618.90" width="1020.2" height="1.60" fill="url(#g78)"/><rect x="749.0" y="617.90" width="1020.2" height="1.60" fill="url(#g79)"/><rect x="749.0" y="616.90" width="1020.2" height="1.60" fill="url(#g80)"/><rect x="749.0" y="615.90" width="1020.2" height="1.60" fill="url(#g81)"/><rect x="749.0" y="614.90" width="1020.2" height="1.60" fill="url(#g82)"/><rect x="749.0" y="613.90" width="1020.2" height="1.60" fill="url(#g83)"/><rect x="749.0" y="612.90" width="1020.2" height="1.60" fill="url(#g84)"/><rect x="749.0" y="611.90" width="1020.2" height="1.60" fill="url(#g85)"/><rect x="749.0" y="610.90" width="1020.2" height="1.60" fill="url(#g86)"/><rect x="749.0" y="609.90" width="1020.2" height="1.60" fill="url(#g87)"/><rect x="749.0" y="608.90" width="1020.2" height="1.60" fill="url(#g88)"/><rect x="749.0" y="607.90" width="1020.2" height="1.60" fill="url(#g89)"/><rect x="749.0" y="606.90" width="1020.2" height="1.60" fill="url(#g90)"/><rect x="749.0" y="605.90" width="1020.2" height="1.60" fill="url(#g91)"/><rect x="749.0" y="604.90" width="1020.2" height="1.60" fill="url(#g92)"/><rect x="749.0" y="603.90" width="1020.2" height="1.60" fill="url(#g93)"/><rect x="749.0" y="602.90" width="1020.2" height="1.60" fill="url(#g94)"/><rect x="749.0" y="601.90" width="1020.2" height="1.60" fill="url(#g95)"/><rect x="749.0" y="600.90" width="1020.2" height="1.60" fill="url(#g96)"/><rect x="749.0" y="599.90" width="1020.2" height="1.60" fill="url(#g97)"/><rect x="749.0" y="598.90" width="1020.2" height="1.60" fill="url(#g98)"/><rect x="749.0" y="597.90" width="1020.2" height="1.60" fill="url(#g99)"/><rect x="749.0" y="596.90" width="1020.2" height="1.60" fill="url(#g100)"/><rect x="749.0" y="595.90" width="1020.2" height="1.60" fill="url(#g101)"/><rect x="749.0" y="594.90" width="1020.2" height="1.00" fill="url(#g102)"/><rect x="749.0" y="495.70" width="1020.2" height="1.60" fill="url(#g103)"/><rect x="749.0" y="494.70" width="1020.2" height="1.60" fill="url(#g104)"/><rect x="749.0" y="493.70" width="1020.2" height="1.60" fill="url(#g105)"/><rect x="749.0" y="492.70" width="1020.2" height="1.60" fill="url(#g106)"/><rect x="749.0" y="491.70" width="1020.2" height="1.60" fill="url(#g107)"/><rect x="749.0" y="490.70" width="1020.2" height="1.60" fill="url(#g108)"/><rect x="749.0" y="489.70" width="1020.2" height="1.60" fill="url(#g109)"/><rect x="749.0" y="488.70" width="1020.2" height="1.60" fill="url(#g110)"/><rect x="749.0" y="487.70" width="1020.2" height="1.60" fill="url(#g111)"/><rect x="749.0" y="486.70" width="1020.2" height="1.60" fill="url(#g112)"/><rect x="749.0" y="485.70" width="1020.2" height="1.60" fill="url(#g113)"/><rect x="749.0" y="484.70" width="1020.2" height="1.60" fill="url(#g114)"/><rect x="749.0" y="483.70" width="1020.2" height="1.60" fill="url(#g115)"/><rect x="749.0" y="482.70" width="1020.2" height="1.60" fill="url(#g116)"/><rect x="749.0" y="481.70" width="1020.2" height="1.60" fill="url(#g117)"/><rect x="749.0" y="480.70" width="1020.2" height="1.60" fill="url(#g118)"/><rect x="749.0" y="479.70" width="1020.2" height="1.60" fill="url(#g119)"/><rect x="749.0" y="478.70" width="1020.2" height="1.60" fill="url(#g120)"/><rect x="749.0" y="477.70" width="1020.2" height="1.60" fill="url(#g121)"/><rect x="749.0" y="476.70" width="1020.2" height="1.60" fill="url(#g122)"/><rect x="749.0" y="475.70" width="1020.2" height="1.60" fill="url(#g123)"/><rect x="749.0" y="474.70" width="1020.2" height="1.60" fill="url(#g124)"/><rect x="749.0" y="473.70" width="1020.2" height="1.60" fill="url(#g125)"/><rect x="749.0" y="472.70" width="1020.2" height="1.60" fill="url(#g126)"/><rect x="749.0" y="471.70" width="1020.2" height="1.60" fill="url(#g127)"/><rect x="749.0" y="470.70" width="1020.2" height="1.60" fill="url(#g128)"/><rect x="749.0" y="469.70" width="1020.2" height="1.60" fill="url(#g129)"/><rect x="749.0" y="468.70" width="1020.2" height="1.60" fill="url(#g130)"/><rect x="749.0" y="467.70" width="1020.2" height="1.60" fill="url(#g131)"/><rect x="749.0" y="466.70" width="1020.2" height="1.60" fill="url(#g132)"/><rect x="749.0" y="465.70" width="1020.2" height="1.60" fill="url(#g133)"/><rect x="749.0" y="464.70" width="1020.2" height="1.60" fill="url(#g134)"/><rect x="749.0" y="463.70" width="1020.2" height="1.60" fill="url(#g135)"/><rect x="749.0" y="462.70" width="1020.2" height="1.60" fill="url(#g136)"/><rect x="749.0" y="461.70" width="1020.2" height="1.60" fill="url(#g137)"/><rect x="749.0" y="460.70" width="1020.2" height="1.60" fill="url(#g138)"/><rect x="749.0" y="459.70" width="1020.2" height="1.60" fill="url(#g139)"/><rect x="749.0" y="458.70" width="1020.2" height="1.60" fill="url(#g140)"/><rect x="749.0" y="457.70" width="1020.2" height="1.60" fill="url(#g141)"/><rect x="749.0" y="456.70" width="1020.2" height="1.60" fill="url(#g142)"/><rect x="749.0" y="455.70" width="1020.2" height="1.60" fill="url(#g143)"/><rect x="749.0" y="454.70" width="1020.2" height="1.60" fill="url(#g144)"/><rect x="749.0" y="453.70" width="1020.2" height="1.60" fill="url(#g145)"/><rect x="749.0" y="452.70" width="1020.2" height="1.60" fill="url(#g146)"/><rect x="749.0" y="451.70" width="1020.2" height="1.60" fill="url(#g147)"/><rect x="749.0" y="450.70" width="1020.2" height="1.60" fill="url(#g148)"/><rect x="749.0" y="449.70" width="1020.2" height="1.60" fill="url(#g149)"/><rect x="749.0" y="448.70" width="1020.2" height="1.60" fill="url(#g150)"/><rect x="749.0" y="447.70" width="1020.2" height="1.60" fill="url(#g151)"/><rect x="749.0" y="446.70" width="1020.2" height="1.60" fill="url(#g152)"/><rect x="749.0" y="445.70" width="1020.2" height="1.00" fill="url(#g153)"/><rect x="749.0" y="680.24" width="1020.2" height="51.05" fill="#c9f0f0"/><rect x="749.0" y="731.29" width="1020.2" height="12.76" fill="#fff"/><rect x="749.0" y="680.24" width="1020.2" height="51.05" fill="none" stroke="#3a3a3a" stroke-width="1"/><rect x="749.0" y="731.29" width="1020.2" height="12.76" fill="none" stroke="#3a3a3a" stroke-width="1"/><rect x="749.0" y="744.05" width="1020.2" height="51.05" fill="none" stroke="#3a3a3a" stroke-width="1"/><text class="pt" x="758" y="813.1" style="font-size:11.7px">t = 0.2</text><rect x="749.0" y="531.04" width="1020.2" height="51.05" fill="#c9f0f0"/><rect x="749.0" y="582.09" width="1020.2" height="12.76" fill="#fff"/><rect x="749.0" y="531.04" width="1020.2" height="51.05" fill="none" stroke="#3a3a3a" stroke-width="1"/><rect x="749.0" y="582.09" width="1020.2" height="12.76" fill="none" stroke="#3a3a3a" stroke-width="1"/><rect x="749.0" y="594.85" width="1020.2" height="51.05" fill="none" stroke="#3a3a3a" stroke-width="1"/><text class="pt" x="758" y="663.9" style="font-size:11.7px">t = 0.6</text><rect x="749.0" y="381.84" width="1020.2" height="51.05" fill="#c9f0f0"/><rect x="749.0" y="432.89" width="1020.2" height="12.76" fill="#fff"/><rect x="749.0" y="381.84" width="1020.2" height="51.05" fill="none" stroke="#3a3a3a" stroke-width="1"/><rect x="749.0" y="432.89" width="1020.2" height="12.76" fill="none" stroke="#3a3a3a" stroke-width="1"/><rect x="749.0" y="445.65" width="1020.2" height="51.05" fill="none" stroke="#3a3a3a" stroke-width="1"/><text class="pt" x="758" y="514.7" style="font-size:11.7px">t = 1.2</text><rect x="698.1" y="273.3" width="1121.9" height="634.5999999999999" fill="none" stroke="#555" stroke-width="1.7"/><text class="pt" x="749.8" y="925.6" text-anchor="middle">0</text><text class="pt" x="851.8" y="925.6" text-anchor="middle">0.2</text><text class="pt" x="953.8" y="925.6" text-anchor="middle">0.4</text><text class="pt" x="1055.8" y="925.6" text-anchor="middle">0.6</text><text class="pt" x="1157.8" y="925.6" text-anchor="middle">0.8</text><text class="pt" x="1259.8" y="925.6" text-anchor="middle">1</text><text class="pt" x="1361.8" y="925.6" text-anchor="middle">1.2</text><text class="pt" x="1463.8" y="925.6" text-anchor="middle">1.4</text><text class="pt" x="1565.8" y="925.6" text-anchor="middle">1.6</text><text class="pt" x="1667.8" y="925.6" text-anchor="middle">1.8</text><text class="pt" x="1769.8" y="925.6" text-anchor="middle">2</text><text class="pt" x="693.5" y="901.2" text-anchor="end">-0.2</text><text class="pt" x="693.5" y="850.1" text-anchor="end">-0.1</text><text class="pt" x="693.5" y="799.1" text-anchor="end">0</text><text class="pt" x="693.5" y="748.1" text-anchor="end">0.1</text><text class="pt" x="693.5" y="697.0" text-anchor="end">0.2</text><text class="pt" x="693.5" y="646.0" text-anchor="end">0.3</text><text class="pt" x="693.5" y="594.9" text-anchor="end">0.4</text><text class="pt" x="693.5" y="543.9" text-anchor="end">0.5</text><text class="pt" x="693.5" y="492.8" text-anchor="end">0.6</text><text class="pt" x="693.5" y="441.8" text-anchor="end">0.7</text><text class="pt" x="693.5" y="390.7" text-anchor="end">0.8</text><text class="pt" x="693.5" y="339.7" text-anchor="end">0.9</text><path d="M749.0 273.3 v5.5 M749.0 907.9 v-5.5 M851.0 273.3 v5.5 M851.0 907.9 v-5.5 M953.0 273.3 v5.5 M953.0 907.9 v-5.5 M1055.0 273.3 v5.5 M1055.0 907.9 v-5.5 M1157.0 273.3 v5.5 M1157.0 907.9 v-5.5 M1259.0 273.3 v5.5 M1259.0 907.9 v-5.5 M1361.0 273.3 v5.5 M1361.0 907.9 v-5.5 M1463.0 273.3 v5.5 M1463.0 907.9 v-5.5 M1565.0 273.3 v5.5 M1565.0 907.9 v-5.5 M1667.0 273.3 v5.5 M1667.0 907.9 v-5.5 M1769.0 273.3 v5.5 M1769.0 907.9 v-5.5 M698.1 897.2 h5.5 M1820.0 897.2 h-5.5 M698.1 846.1 h5.5 M1820.0 846.1 h-5.5 M698.1 795.1 h5.5 M1820.0 795.1 h-5.5 M698.1 744.1 h5.5 M1820.0 744.1 h-5.5 M698.1 693.0 h5.5 M1820.0 693.0 h-5.5 M698.1 642.0 h5.5 M1820.0 642.0 h-5.5 M698.1 590.9 h5.5 M1820.0 590.9 h-5.5 M698.1 539.9 h5.5 M1820.0 539.9 h-5.5 M698.1 488.8 h5.5 M1820.0 488.8 h-5.5 M698.1 437.8 h5.5 M1820.0 437.8 h-5.5 M698.1 386.7 h5.5 M1820.0 386.7 h-5.5 M698.1 335.7 h5.5 M1820.0 335.7 h-5.5 M698.1 284.6 h5.5 M1820.0 284.6 h-5.5 " stroke="#555" stroke-width="1.6" fill="none"/><text class="pt" x="666.5" y="262">Time=0.2 s</text><text class="pt" x="1259" y="263" text-anchor="middle">Species O2: Surface: Mole fraction</text><text class="pt" x="651.5" y="278" style="font-size:11px">mm</text><text class="pt" x="1800.5" y="925.6" style="font-size:11px">mm</text><rect x="1841" y="306.8" width="15.2" height="594.8" fill="url(#cbg)" stroke="#3a3a3a" stroke-width="1"/><text class="pt" x="1865.3" y="823.7">0.02</text><text class="pt" x="1865.3" y="741.9">0.04</text><text class="pt" x="1865.3" y="660.1">0.06</text><text class="pt" x="1865.3" y="578.3">0.08</text><text class="pt" x="1865.3" y="496.5">0.1</text><text class="pt" x="1865.3" y="414.7">0.12</text><text class="pt" x="1865.3" y="332.9">0.14</text><path d="M1841 819.5 h2.4 M1856.2 819.5 h-2.4 M1841 737.7 h2.4 M1856.2 737.7 h-2.4 M1841 655.9 h2.4 M1856.2 655.9 h-2.4 M1841 574.1 h2.4 M1856.2 574.1 h-2.4 M1841 492.3 h2.4 M1856.2 492.3 h-2.4 M1841 410.5 h2.4 M1856.2 410.5 h-2.4 M1841 328.7 h2.4 M1856.2 328.7 h-2.4 " stroke="#222" stroke-width="1" fill="none"/></svg>
<svg class="abs" style="left:1884px;top:241px" width="26" height="23" viewBox="0 0 26 23"><path d="M3 6 L20 1.5 L24.5 13 L14 21.5 L3.5 17Z" fill="#ededf0" opacity="0.8"/><path d="M4.5 5 L17 3.5 L22 15 L10 20Z" fill="#f4f4f6" opacity="0.9"/><rect x="5.8" y="4.8" width="14.2" height="11.2" rx="2.4" fill="#1a34a8"/><path d="M6 6 Q5.6 10.4 6.2 15" stroke="#4a7be0" stroke-width="1.2" fill="none"/><path d="M8.6 6.6 L15.6 10.4 L8.6 14.8Z" fill="#f4e23c"/><path d="M15.6 10.4 L19.8 9.6 V13.6 L11.8 12.6Z" fill="#3aa0f0"/><path d="M8.6 14.8 L11.8 12.6 L19.8 13.6 Q19.6 15.6 18 15.8 H8.6Z" fill="#1f4fc8"/></svg>
<div class="panel" style="left:649px;top:939px;width:1263px;height:106px"></div>
<div class="abs" style="left:649px;top:972px;width:1263px;height:1px;background:#e4e5e9"></div>
<div class="tab" style="left:662px;top:949px;color:#3558a8">Messages</div>
<svg class="abs" style="left:730px;top:952px" width="9" height="9" viewBox="0 0 9 9"><path d="M0.5 0.5 L8.5 8.5 M8.5 0.5 L0.5 8.5" stroke="#a8a8ab" stroke-width="1.1"/></svg>
<div class="abs" style="left:657px;top:969px;width:91px;height:2px;background:#2b7bd0"></div>
<div class="tab" style="left:769px;top:949px;color:#444">Progress</div>
<div class="tab" style="left:847px;top:949px;color:#444">Log</div>
<svg class="abs" style="left:1859.5px;top:956px" width="8" height="4.5" viewBox="0 0 8 4.5"><path d="M0.4 0.4 L4 3.8 L7.6 0.4" fill="none" stroke="#b8b8bb" stroke-width="1.1"/></svg><svg class="abs" style="left:1877.5px;top:953px" width="9.5" height="9" viewBox="0 0 9.5 9"><rect x="0.5" y="0.5" width="8.5" height="8" fill="none" stroke="#9a9a9d" stroke-width="1"/><rect x="0.5" y="0.5" width="8.5" height="2" fill="#9a9a9d"/></svg><svg class="abs" style="left:1896.0px;top:952px" width="7" height="10" viewBox="0 0 7 10"><path d="M1.6 0.5 H5.4 V5 M1.6 0.5 V5 M0.3 5.2 H6.7 M3.5 5.2 V9.8" fill="none" stroke="#9a9a9d" stroke-width="1"/></svg>
<svg class="abs" style="left:658.5px;top:977px" width="12" height="16" viewBox="0 0 12 16"><path d="M0.8 0.4 L5.6 8.6" stroke="#5a5a5a" stroke-width="1.5"/><path d="M4.6 7.2 L7.2 6.4 L11.6 14.2 L6.2 15.8 L3.6 12.6Z" fill="#f0a246"/><path d="M4.2 7.6 L7.4 6.6" stroke="#c47a2a" stroke-width="1.2"/></svg>
<div class="abs" style="left:677px;top:975px;width:20px;height:20px;background:#cde4fa;border:1px solid #a9d0f3;border-radius:2px"></div>
<svg class="abs" style="left:679.5px;top:978px" width="15" height="14" viewBox="0 0 15 14"><rect x="0.6" y="0.6" width="12" height="9" rx="0.8" fill="#fff" stroke="#3b86cd" stroke-width="1.1"/><rect x="0.6" y="0.6" width="12" height="2.2" fill="#3b86cd"/><rect x="4.6" y="5.6" width="10" height="7.4" rx="0.6" fill="#fff" stroke="#3b86cd" stroke-width="1.1"/><path d="M5 6 L9.6 9.8 L14.2 6 M5 12.6 L8.4 9 M14.2 12.6 L10.8 9" fill="none" stroke="#3b86cd" stroke-width="0.8"/></svg>
<div class="abs" style="left:653px;top:998px;width:1255px;height:43px;border:1px solid #c9c9cc;background:#fafbfe"></div>
<div class="abs" style="left:1183px;top:1056px;width:200px;text-align:center;font-size:12px;line-height:16px;color:#111;letter-spacing:-0.64px;white-space:nowrap">3.34 GB | 4.08 GB</div>
</div>
</body>
</html>
